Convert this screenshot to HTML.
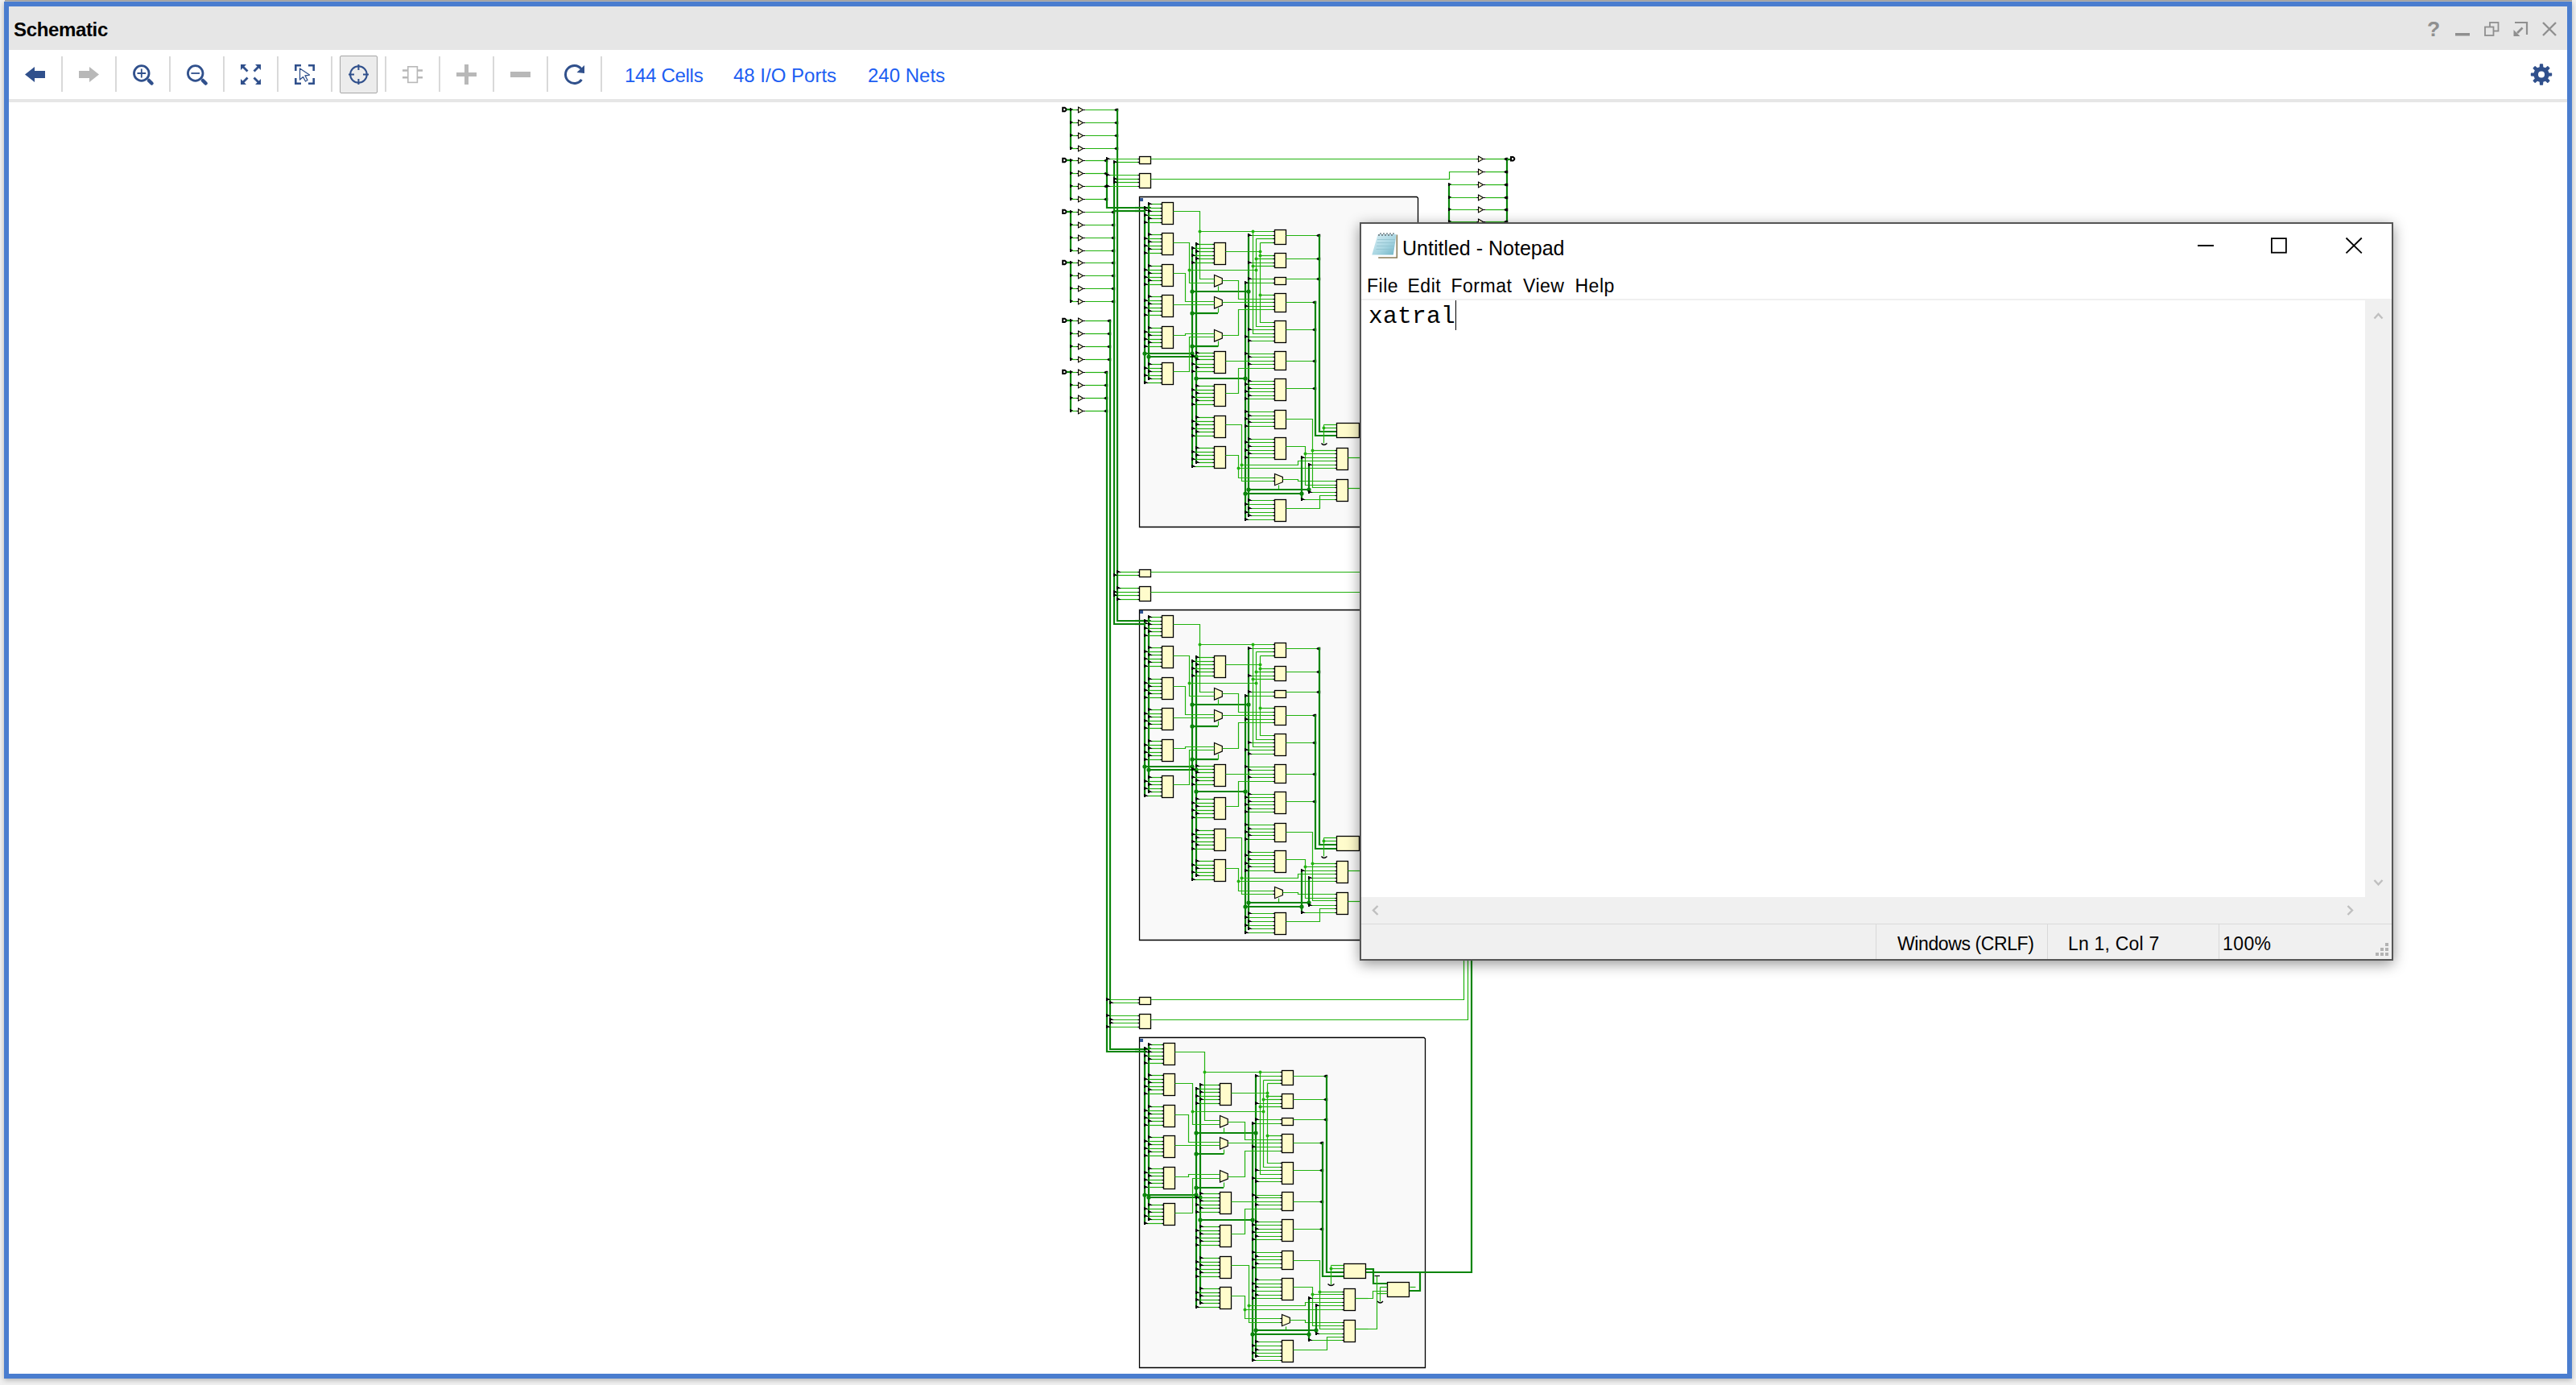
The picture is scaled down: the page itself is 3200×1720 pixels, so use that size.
<!DOCTYPE html><html><head><meta charset="utf-8"><style>

*{margin:0;padding:0;box-sizing:border-box}
html,body{width:3200px;height:1720px;overflow:hidden;background:#f0f0f0;font-family:"Liberation Sans",sans-serif}
.abs{position:absolute}
#win{position:absolute;left:5px;top:2px;width:3190px;height:1710px;background:#fff;border:6px solid #4a7dcf;box-shadow:0 2px 6px rgba(0,0,0,0.25)}
#title{position:absolute;left:11px;top:8px;width:3178px;height:54px;background:#e6e6e6}
#tb{position:absolute;left:11px;top:62px;width:3178px;height:61px;background:#fff}
#tbline{position:absolute;left:11px;top:123px;width:3178px;height:4px;background:#e6e6e6}
.sep{position:absolute;top:70px;width:2px;height:44px;background:#d9d9d9}
.txt{position:absolute;white-space:nowrap;line-height:1}
#np{position:absolute;left:1689px;top:276px;width:1284px;height:917px;background:#fff;border:2px solid #555;box-shadow:0 4px 16px rgba(0,0,0,0.42)}

</style></head><body>
<div class="abs" style="left:6px;top:0;width:3189px;height:1px;background:#a5a5a5"></div><div class="abs" style="left:6px;top:1px;width:3189px;height:1px;background:#c2c0bb"></div>
<div id="win"></div>
<div id="title"></div>
<div id="tb"></div>
<div id="tbline"></div>
<div class="txt" style="left:17px;top:24.5px;font-size:24px;font-weight:bold;letter-spacing:-0.35px;color:#000">Schematic</div>
<div class="sep" style="left:76px"></div>
<div class="sep" style="left:143px"></div>
<div class="sep" style="left:210px"></div>
<div class="sep" style="left:277px"></div>
<div class="sep" style="left:344px"></div>
<div class="sep" style="left:411px"></div>
<div class="sep" style="left:478px"></div>
<div class="sep" style="left:545px"></div>
<div class="sep" style="left:612px"></div>
<div class="sep" style="left:679px"></div>
<div class="sep" style="left:746px"></div>
<div class="abs" style="left:422px;top:69px;width:47px;height:47px;background:#ececec;border:1px solid #a6a6a6;border-radius:2px"></div>
<svg class="abs" style="left:0;top:0" width="3200" height="130" viewBox="0 0 3200 130">
<path d="M31,92.5 L43,83 L43,88 L56,88 L56,97 L43,97 L43,102 Z" fill="#30508c"/>
<path d="M123,92.5 L111,83 L111,88 L98,88 L98,97 L111,97 L111,102 Z" fill="#b8b8b8"/>
<circle cx="175.8" cy="91" r="9.3" fill="none" stroke="#30508c" stroke-width="2.8"/>
<line x1="185" y1="100" x2="188.5" y2="103.5" stroke="#30508c" stroke-width="4.5" stroke-linecap="round"/>
<path d="M170.5,91 H181.2 M175.8,85.5 V96.5" stroke="#30508c" stroke-width="1.8"/>
<circle cx="242.7" cy="91" r="9.3" fill="none" stroke="#30508c" stroke-width="2.8"/>
<line x1="252" y1="100" x2="255.5" y2="103.5" stroke="#30508c" stroke-width="4.5" stroke-linecap="round"/>
<path d="M237.4,91 H248" stroke="#30508c" stroke-width="1.8"/>
<g fill="#30508c" stroke="#30508c">
<path d="M299,80 h7 l-2.5,2.5 l5,5 l-2,2 l-5,-5 l-2.5,2.5 z" stroke="none"/>
<path d="M324,80 h-7 l2.5,2.5 l-5,5 l2,2 l5,-5 l2.5,2.5 z" stroke="none"/>
<path d="M299,105 h7 l-2.5,-2.5 l5,-5 l-2,-2 l-5,5 l-2.5,-2.5 z" stroke="none"/>
<path d="M324,105 h-7 l2.5,-2.5 l-5,-5 l2,-2 l5,5 l2.5,-2.5 z" stroke="none"/>
</g>
<path d="M367.3,88 V81.3 H374 M383,81.3 H389.7 V88 M389.7,97 V103.7 H383 M374,103.7 H367.3 V97" fill="none" stroke="#30508c" stroke-width="2.6"/>
<path d="M372.5,85 L384.5,93 L379,94 L382,99.5 L379.5,101 L376.5,95.5 L372.5,99 Z" fill="#fff" stroke="#30508c" stroke-width="1.3" stroke-linejoin="round"/>
<circle cx="445.4" cy="92.5" r="10.3" fill="none" stroke="#30508c" stroke-width="2"/>
<path d="M445.4,80 V87 M445.4,98 V105 M433,92.5 H440 M451,92.5 H458" stroke="#30508c" stroke-width="2"/>
<rect x="506.8" y="82.8" width="11.6" height="19.6" fill="none" stroke="#b8b8b8" stroke-width="1.6"/>
<path d="M500,87.5 H506 M500,96.2 H506 M519,87.5 H525 M519,96.2 H525" stroke="#b8b8b8" stroke-width="2.6"/>
<path d="M567,92.5 H592 M579.5,80 V105" stroke="#b8b8b8" stroke-width="5"/>
<path d="M634,92.5 H659" stroke="#b8b8b8" stroke-width="7"/>
<path d="M721.9,85.4 A11,11 0 1 0 722.5,98.8" fill="none" stroke="#30508c" stroke-width="3"/>
<path d="M726,81 L726,91 L716.5,90 Z" fill="#30508c"/>
<text x="3023" y="45" font-family="Liberation Sans" font-weight="bold" font-size="26.5" fill="#8f8f8f" text-anchor="middle">?</text>
<rect x="3050" y="41" width="18" height="3.5" fill="#8f8f8f"/>
<rect x="3093" y="28" width="10.5" height="10.5" fill="none" stroke="#8f8f8f" stroke-width="1.8"/>
<rect x="3087" y="33.5" width="10.5" height="10.5" fill="#e6e6e6" stroke="#8f8f8f" stroke-width="1.8"/>
<path d="M3124,28 H3139 V43" fill="none" stroke="#8f8f8f" stroke-width="2.2"/>
<path d="M3133.5,34.5 L3127,41" stroke="#8f8f8f" stroke-width="2.6"/><path d="M3122.5,37 V45 H3130.5 Z" fill="#8f8f8f"/>
<path d="M3159,28 L3175,44 M3175,28 L3159,44" stroke="#8f8f8f" stroke-width="2.4"/>
<path d="M3165.87,90.95 L3169.42,91.13 L3169.42,93.87 L3165.87,94.05 L3164.36,97.68 L3166.76,100.32 L3164.82,102.26 L3162.18,99.86 L3158.55,101.37 L3158.37,104.92 L3155.63,104.92 L3155.45,101.37 L3151.82,99.86 L3149.18,102.26 L3147.24,100.32 L3149.64,97.68 L3148.13,94.05 L3144.58,93.87 L3144.58,91.13 L3148.13,90.95 L3149.64,87.32 L3147.24,84.68 L3149.18,82.74 L3151.82,85.14 L3155.45,83.63 L3155.63,80.08 L3158.37,80.08 L3158.55,83.63 L3162.18,85.14 L3164.82,82.74 L3166.76,84.68 L3164.36,87.32 Z" fill="#30508c" stroke="#30508c" stroke-width="1.5" stroke-linejoin="round"/><circle cx="3157" cy="92.5" r="4" fill="#fff"/>
</svg>
<div class="txt" style="left:776px;top:82px;font-size:24px;letter-spacing:-0.3px;color:#1c5ef2">144 Cells</div>
<div class="txt" style="left:911px;top:82px;font-size:24px;color:#1c5ef2">48 I/O Ports</div>
<div class="txt" style="left:1078px;top:82px;font-size:24px;color:#1c5ef2">240 Nets</div>
<svg class="abs" style="left:0;top:0" width="3200" height="1720" viewBox="0 0 3200 1720">
<path d="M1320.2,133.8 h2.6 l1.6,1.4 v1.6 l-1.6,1.4 h-2.6 z" fill="#fff" stroke="#000" stroke-width="2"/>
<path d="M1325,136 L1330,136" fill="none" stroke="#0b850b" stroke-width="2.2"/>
<path d="M1330,136 L1330,184" fill="none" stroke="#0b850b" stroke-width="2.2"/>
<path d="M1329.0,133.9 L1330.2,133.9 L1331.0,134.9 L1332.2,134.9 L1332.9,135.9 L1334.2,135.9 L1334.2,137.1 L1331.0,137.1 L1331.0,138.1 L1329.0,138.1 Z" fill="#000"/>
<path d="M1331.5,136.5 L1338.5,136.5" fill="none" stroke="#22b30f" stroke-width="1.2"/>
<path d="M1339.5,133.1 L1345.5,136.5 L1339.5,139.9 Z" fill="#fffccc" stroke="#000" stroke-width="1.1"/>
<path d="M1337.5,136.5 H1339.5 M1345.5,136.5 H1348.5" stroke="#000" stroke-width="1.1"/>
<path d="M1348.5,136.5 L1387.5,136.5" fill="none" stroke="#22b30f" stroke-width="1.2"/>
<path d="M1384.5,135.9 L1386.8,134.7 L1389.2,134.7 L1389.2,138.3 L1386.8,138.3 L1384.5,137.1 Z" fill="#000"/>
<path d="M1329.0,149.9 L1330.2,149.9 L1331.0,150.9 L1332.2,150.9 L1332.9,151.9 L1334.2,151.9 L1334.2,153.1 L1331.0,153.1 L1331.0,154.1 L1329.0,154.1 Z" fill="#000"/>
<path d="M1331.5,152.5 L1338.5,152.5" fill="none" stroke="#22b30f" stroke-width="1.2"/>
<path d="M1339.5,149.1 L1345.5,152.5 L1339.5,155.9 Z" fill="#fffccc" stroke="#000" stroke-width="1.1"/>
<path d="M1337.5,152.5 H1339.5 M1345.5,152.5 H1348.5" stroke="#000" stroke-width="1.1"/>
<path d="M1348.5,152.5 L1387.5,152.5" fill="none" stroke="#22b30f" stroke-width="1.2"/>
<path d="M1384.5,151.9 L1386.8,150.7 L1389.2,150.7 L1389.2,154.3 L1386.8,154.3 L1384.5,153.1 Z" fill="#000"/>
<path d="M1329.0,165.9 L1330.2,165.9 L1331.0,166.9 L1332.2,166.9 L1332.9,167.9 L1334.2,167.9 L1334.2,169.1 L1331.0,169.1 L1331.0,170.1 L1329.0,170.1 Z" fill="#000"/>
<path d="M1331.5,168.5 L1338.5,168.5" fill="none" stroke="#22b30f" stroke-width="1.2"/>
<path d="M1339.5,165.1 L1345.5,168.5 L1339.5,171.9 Z" fill="#fffccc" stroke="#000" stroke-width="1.1"/>
<path d="M1337.5,168.5 H1339.5 M1345.5,168.5 H1348.5" stroke="#000" stroke-width="1.1"/>
<path d="M1348.5,168.5 L1387.5,168.5" fill="none" stroke="#22b30f" stroke-width="1.2"/>
<path d="M1384.5,167.9 L1386.8,166.7 L1389.2,166.7 L1389.2,170.3 L1386.8,170.3 L1384.5,169.1 Z" fill="#000"/>
<path d="M1329.0,181.9 L1330.2,181.9 L1331.0,182.9 L1332.2,182.9 L1332.9,183.9 L1334.2,183.9 L1334.2,185.1 L1331.0,185.1 L1331.0,186.1 L1329.0,186.1 Z" fill="#000"/>
<path d="M1331.5,184.5 L1338.5,184.5" fill="none" stroke="#22b30f" stroke-width="1.2"/>
<path d="M1339.5,181.1 L1345.5,184.5 L1339.5,187.9 Z" fill="#fffccc" stroke="#000" stroke-width="1.1"/>
<path d="M1337.5,184.5 H1339.5 M1345.5,184.5 H1348.5" stroke="#000" stroke-width="1.1"/>
<path d="M1348.5,184.5 L1387.5,184.5" fill="none" stroke="#22b30f" stroke-width="1.2"/>
<path d="M1384.5,183.9 L1386.8,182.7 L1389.2,182.7 L1389.2,186.3 L1386.8,186.3 L1384.5,185.1 Z" fill="#000"/>
<path d="M1320.2,196.8 h2.6 l1.6,1.4 v1.6 l-1.6,1.4 h-2.6 z" fill="#fff" stroke="#000" stroke-width="2"/>
<path d="M1325,199 L1330,199" fill="none" stroke="#0b850b" stroke-width="2.2"/>
<path d="M1330,199 L1330,247" fill="none" stroke="#0b850b" stroke-width="2.2"/>
<path d="M1329.0,196.9 L1330.2,196.9 L1331.0,197.9 L1332.2,197.9 L1332.9,198.9 L1334.2,198.9 L1334.2,200.1 L1331.0,200.1 L1331.0,201.1 L1329.0,201.1 Z" fill="#000"/>
<path d="M1331.5,199.5 L1338.5,199.5" fill="none" stroke="#22b30f" stroke-width="1.2"/>
<path d="M1339.5,196.1 L1345.5,199.5 L1339.5,202.9 Z" fill="#fffccc" stroke="#000" stroke-width="1.1"/>
<path d="M1337.5,199.5 H1339.5 M1345.5,199.5 H1348.5" stroke="#000" stroke-width="1.1"/>
<path d="M1348.5,199.5 L1374.5,199.5" fill="none" stroke="#22b30f" stroke-width="1.2"/>
<path d="M1371.5,198.9 L1373.8,197.7 L1376.2,197.7 L1376.2,201.3 L1373.8,201.3 L1371.5,200.1 Z" fill="#000"/>
<path d="M1329.0,212.9 L1330.2,212.9 L1331.0,213.9 L1332.2,213.9 L1332.9,214.9 L1334.2,214.9 L1334.2,216.1 L1331.0,216.1 L1331.0,217.1 L1329.0,217.1 Z" fill="#000"/>
<path d="M1331.5,215.5 L1338.5,215.5" fill="none" stroke="#22b30f" stroke-width="1.2"/>
<path d="M1339.5,212.1 L1345.5,215.5 L1339.5,218.9 Z" fill="#fffccc" stroke="#000" stroke-width="1.1"/>
<path d="M1337.5,215.5 H1339.5 M1345.5,215.5 H1348.5" stroke="#000" stroke-width="1.1"/>
<path d="M1348.5,215.5 L1374.5,215.5" fill="none" stroke="#22b30f" stroke-width="1.2"/>
<path d="M1371.5,214.9 L1373.8,213.7 L1376.2,213.7 L1376.2,217.3 L1373.8,217.3 L1371.5,216.1 Z" fill="#000"/>
<path d="M1329.0,228.9 L1330.2,228.9 L1331.0,229.9 L1332.2,229.9 L1332.9,230.9 L1334.2,230.9 L1334.2,232.1 L1331.0,232.1 L1331.0,233.1 L1329.0,233.1 Z" fill="#000"/>
<path d="M1331.5,231.5 L1338.5,231.5" fill="none" stroke="#22b30f" stroke-width="1.2"/>
<path d="M1339.5,228.1 L1345.5,231.5 L1339.5,234.9 Z" fill="#fffccc" stroke="#000" stroke-width="1.1"/>
<path d="M1337.5,231.5 H1339.5 M1345.5,231.5 H1348.5" stroke="#000" stroke-width="1.1"/>
<path d="M1348.5,231.5 L1374.5,231.5" fill="none" stroke="#22b30f" stroke-width="1.2"/>
<path d="M1371.5,230.9 L1373.8,229.7 L1376.2,229.7 L1376.2,233.3 L1373.8,233.3 L1371.5,232.1 Z" fill="#000"/>
<path d="M1329.0,244.9 L1330.2,244.9 L1331.0,245.9 L1332.2,245.9 L1332.9,246.9 L1334.2,246.9 L1334.2,248.1 L1331.0,248.1 L1331.0,249.1 L1329.0,249.1 Z" fill="#000"/>
<path d="M1331.5,247.5 L1338.5,247.5" fill="none" stroke="#22b30f" stroke-width="1.2"/>
<path d="M1339.5,244.1 L1345.5,247.5 L1339.5,250.9 Z" fill="#fffccc" stroke="#000" stroke-width="1.1"/>
<path d="M1337.5,247.5 H1339.5 M1345.5,247.5 H1348.5" stroke="#000" stroke-width="1.1"/>
<path d="M1348.5,247.5 L1374.5,247.5" fill="none" stroke="#22b30f" stroke-width="1.2"/>
<path d="M1371.5,246.9 L1373.8,245.7 L1376.2,245.7 L1376.2,249.3 L1373.8,249.3 L1371.5,248.1 Z" fill="#000"/>
<path d="M1320.2,260.7 h2.6 l1.6,1.4 v1.6 l-1.6,1.4 h-2.6 z" fill="#fff" stroke="#000" stroke-width="2"/>
<path d="M1325,263 L1330,263" fill="none" stroke="#0b850b" stroke-width="2.2"/>
<path d="M1330,263 L1330,311" fill="none" stroke="#0b850b" stroke-width="2.2"/>
<path d="M1329.0,260.9 L1330.2,260.9 L1331.0,261.9 L1332.2,261.9 L1332.9,262.9 L1334.2,262.9 L1334.2,264.1 L1331.0,264.1 L1331.0,265.1 L1329.0,265.1 Z" fill="#000"/>
<path d="M1331.5,263.5 L1338.5,263.5" fill="none" stroke="#22b30f" stroke-width="1.2"/>
<path d="M1339.5,260.1 L1345.5,263.5 L1339.5,266.9 Z" fill="#fffccc" stroke="#000" stroke-width="1.1"/>
<path d="M1337.5,263.5 H1339.5 M1345.5,263.5 H1348.5" stroke="#000" stroke-width="1.1"/>
<path d="M1348.5,263.5 L1384.5,263.5" fill="none" stroke="#22b30f" stroke-width="1.2"/>
<path d="M1380.5,262.9 L1382.8,261.7 L1385.2,261.7 L1385.2,265.3 L1382.8,265.3 L1380.5,264.1 Z" fill="#000"/>
<path d="M1329.0,276.9 L1330.2,276.9 L1331.0,277.9 L1332.2,277.9 L1332.9,278.9 L1334.2,278.9 L1334.2,280.1 L1331.0,280.1 L1331.0,281.1 L1329.0,281.1 Z" fill="#000"/>
<path d="M1331.5,279.5 L1338.5,279.5" fill="none" stroke="#22b30f" stroke-width="1.2"/>
<path d="M1339.5,276.1 L1345.5,279.5 L1339.5,282.9 Z" fill="#fffccc" stroke="#000" stroke-width="1.1"/>
<path d="M1337.5,279.5 H1339.5 M1345.5,279.5 H1348.5" stroke="#000" stroke-width="1.1"/>
<path d="M1348.5,279.5 L1384.5,279.5" fill="none" stroke="#22b30f" stroke-width="1.2"/>
<path d="M1380.5,278.9 L1382.8,277.7 L1385.2,277.7 L1385.2,281.3 L1382.8,281.3 L1380.5,280.1 Z" fill="#000"/>
<path d="M1329.0,292.9 L1330.2,292.9 L1331.0,293.9 L1332.2,293.9 L1332.9,294.9 L1334.2,294.9 L1334.2,296.1 L1331.0,296.1 L1331.0,297.1 L1329.0,297.1 Z" fill="#000"/>
<path d="M1331.5,295.5 L1338.5,295.5" fill="none" stroke="#22b30f" stroke-width="1.2"/>
<path d="M1339.5,292.1 L1345.5,295.5 L1339.5,298.9 Z" fill="#fffccc" stroke="#000" stroke-width="1.1"/>
<path d="M1337.5,295.5 H1339.5 M1345.5,295.5 H1348.5" stroke="#000" stroke-width="1.1"/>
<path d="M1348.5,295.5 L1384.5,295.5" fill="none" stroke="#22b30f" stroke-width="1.2"/>
<path d="M1380.5,294.9 L1382.8,293.7 L1385.2,293.7 L1385.2,297.3 L1382.8,297.3 L1380.5,296.1 Z" fill="#000"/>
<path d="M1329.0,308.9 L1330.2,308.9 L1331.0,309.9 L1332.2,309.9 L1332.9,310.9 L1334.2,310.9 L1334.2,312.1 L1331.0,312.1 L1331.0,313.1 L1329.0,313.1 Z" fill="#000"/>
<path d="M1331.5,311.5 L1338.5,311.5" fill="none" stroke="#22b30f" stroke-width="1.2"/>
<path d="M1339.5,308.1 L1345.5,311.5 L1339.5,314.9 Z" fill="#fffccc" stroke="#000" stroke-width="1.1"/>
<path d="M1337.5,311.5 H1339.5 M1345.5,311.5 H1348.5" stroke="#000" stroke-width="1.1"/>
<path d="M1348.5,311.5 L1384.5,311.5" fill="none" stroke="#22b30f" stroke-width="1.2"/>
<path d="M1380.5,310.9 L1382.8,309.7 L1385.2,309.7 L1385.2,313.3 L1382.8,313.3 L1380.5,312.1 Z" fill="#000"/>
<path d="M1320.2,323.8 h2.6 l1.6,1.4 v1.6 l-1.6,1.4 h-2.6 z" fill="#fff" stroke="#000" stroke-width="2"/>
<path d="M1325,326 L1330,326" fill="none" stroke="#0b850b" stroke-width="2.2"/>
<path d="M1330,326 L1330,374" fill="none" stroke="#0b850b" stroke-width="2.2"/>
<path d="M1329.0,323.9 L1330.2,323.9 L1331.0,324.9 L1332.2,324.9 L1332.9,325.9 L1334.2,325.9 L1334.2,327.1 L1331.0,327.1 L1331.0,328.1 L1329.0,328.1 Z" fill="#000"/>
<path d="M1331.5,326.5 L1338.5,326.5" fill="none" stroke="#22b30f" stroke-width="1.2"/>
<path d="M1339.5,323.1 L1345.5,326.5 L1339.5,329.9 Z" fill="#fffccc" stroke="#000" stroke-width="1.1"/>
<path d="M1337.5,326.5 H1339.5 M1345.5,326.5 H1348.5" stroke="#000" stroke-width="1.1"/>
<path d="M1348.5,326.5 L1384.5,326.5" fill="none" stroke="#22b30f" stroke-width="1.2"/>
<path d="M1380.5,325.9 L1382.8,324.7 L1385.2,324.7 L1385.2,328.3 L1382.8,328.3 L1380.5,327.1 Z" fill="#000"/>
<path d="M1329.0,339.9 L1330.2,339.9 L1331.0,340.9 L1332.2,340.9 L1332.9,341.9 L1334.2,341.9 L1334.2,343.1 L1331.0,343.1 L1331.0,344.1 L1329.0,344.1 Z" fill="#000"/>
<path d="M1331.5,342.5 L1338.5,342.5" fill="none" stroke="#22b30f" stroke-width="1.2"/>
<path d="M1339.5,339.1 L1345.5,342.5 L1339.5,345.9 Z" fill="#fffccc" stroke="#000" stroke-width="1.1"/>
<path d="M1337.5,342.5 H1339.5 M1345.5,342.5 H1348.5" stroke="#000" stroke-width="1.1"/>
<path d="M1348.5,342.5 L1384.5,342.5" fill="none" stroke="#22b30f" stroke-width="1.2"/>
<path d="M1380.5,341.9 L1382.8,340.7 L1385.2,340.7 L1385.2,344.3 L1382.8,344.3 L1380.5,343.1 Z" fill="#000"/>
<path d="M1329.0,355.9 L1330.2,355.9 L1331.0,356.9 L1332.2,356.9 L1332.9,357.9 L1334.2,357.9 L1334.2,359.1 L1331.0,359.1 L1331.0,360.1 L1329.0,360.1 Z" fill="#000"/>
<path d="M1331.5,358.5 L1338.5,358.5" fill="none" stroke="#22b30f" stroke-width="1.2"/>
<path d="M1339.5,355.1 L1345.5,358.5 L1339.5,361.9 Z" fill="#fffccc" stroke="#000" stroke-width="1.1"/>
<path d="M1337.5,358.5 H1339.5 M1345.5,358.5 H1348.5" stroke="#000" stroke-width="1.1"/>
<path d="M1348.5,358.5 L1384.5,358.5" fill="none" stroke="#22b30f" stroke-width="1.2"/>
<path d="M1380.5,357.9 L1382.8,356.7 L1385.2,356.7 L1385.2,360.3 L1382.8,360.3 L1380.5,359.1 Z" fill="#000"/>
<path d="M1329.0,371.9 L1330.2,371.9 L1331.0,372.9 L1332.2,372.9 L1332.9,373.9 L1334.2,373.9 L1334.2,375.1 L1331.0,375.1 L1331.0,376.1 L1329.0,376.1 Z" fill="#000"/>
<path d="M1331.5,374.5 L1338.5,374.5" fill="none" stroke="#22b30f" stroke-width="1.2"/>
<path d="M1339.5,371.1 L1345.5,374.5 L1339.5,377.9 Z" fill="#fffccc" stroke="#000" stroke-width="1.1"/>
<path d="M1337.5,374.5 H1339.5 M1345.5,374.5 H1348.5" stroke="#000" stroke-width="1.1"/>
<path d="M1348.5,374.5 L1384.5,374.5" fill="none" stroke="#22b30f" stroke-width="1.2"/>
<path d="M1380.5,373.9 L1382.8,372.7 L1385.2,372.7 L1385.2,376.3 L1382.8,376.3 L1380.5,375.1 Z" fill="#000"/>
<path d="M1320.2,395.7 h2.6 l1.6,1.4 v1.6 l-1.6,1.4 h-2.6 z" fill="#fff" stroke="#000" stroke-width="2"/>
<path d="M1325,398 L1330,398" fill="none" stroke="#0b850b" stroke-width="2.2"/>
<path d="M1330,398 L1330,446" fill="none" stroke="#0b850b" stroke-width="2.2"/>
<path d="M1329.0,395.9 L1330.2,395.9 L1331.0,396.9 L1332.2,396.9 L1332.9,397.9 L1334.2,397.9 L1334.2,399.1 L1331.0,399.1 L1331.0,400.1 L1329.0,400.1 Z" fill="#000"/>
<path d="M1331.5,398.5 L1338.5,398.5" fill="none" stroke="#22b30f" stroke-width="1.2"/>
<path d="M1339.5,395.1 L1345.5,398.5 L1339.5,401.9 Z" fill="#fffccc" stroke="#000" stroke-width="1.1"/>
<path d="M1337.5,398.5 H1339.5 M1345.5,398.5 H1348.5" stroke="#000" stroke-width="1.1"/>
<path d="M1348.5,398.5 L1378.5,398.5" fill="none" stroke="#22b30f" stroke-width="1.2"/>
<path d="M1375.5,397.9 L1377.8,396.7 L1380.2,396.7 L1380.2,400.3 L1377.8,400.3 L1375.5,399.1 Z" fill="#000"/>
<path d="M1329.0,411.9 L1330.2,411.9 L1331.0,412.9 L1332.2,412.9 L1332.9,413.9 L1334.2,413.9 L1334.2,415.1 L1331.0,415.1 L1331.0,416.1 L1329.0,416.1 Z" fill="#000"/>
<path d="M1331.5,414.5 L1338.5,414.5" fill="none" stroke="#22b30f" stroke-width="1.2"/>
<path d="M1339.5,411.1 L1345.5,414.5 L1339.5,417.9 Z" fill="#fffccc" stroke="#000" stroke-width="1.1"/>
<path d="M1337.5,414.5 H1339.5 M1345.5,414.5 H1348.5" stroke="#000" stroke-width="1.1"/>
<path d="M1348.5,414.5 L1378.5,414.5" fill="none" stroke="#22b30f" stroke-width="1.2"/>
<path d="M1375.5,413.9 L1377.8,412.7 L1380.2,412.7 L1380.2,416.3 L1377.8,416.3 L1375.5,415.1 Z" fill="#000"/>
<path d="M1329.0,427.9 L1330.2,427.9 L1331.0,428.9 L1332.2,428.9 L1332.9,429.9 L1334.2,429.9 L1334.2,431.1 L1331.0,431.1 L1331.0,432.1 L1329.0,432.1 Z" fill="#000"/>
<path d="M1331.5,430.5 L1338.5,430.5" fill="none" stroke="#22b30f" stroke-width="1.2"/>
<path d="M1339.5,427.1 L1345.5,430.5 L1339.5,433.9 Z" fill="#fffccc" stroke="#000" stroke-width="1.1"/>
<path d="M1337.5,430.5 H1339.5 M1345.5,430.5 H1348.5" stroke="#000" stroke-width="1.1"/>
<path d="M1348.5,430.5 L1378.5,430.5" fill="none" stroke="#22b30f" stroke-width="1.2"/>
<path d="M1375.5,429.9 L1377.8,428.7 L1380.2,428.7 L1380.2,432.3 L1377.8,432.3 L1375.5,431.1 Z" fill="#000"/>
<path d="M1329.0,443.9 L1330.2,443.9 L1331.0,444.9 L1332.2,444.9 L1332.9,445.9 L1334.2,445.9 L1334.2,447.1 L1331.0,447.1 L1331.0,448.1 L1329.0,448.1 Z" fill="#000"/>
<path d="M1331.5,446.5 L1338.5,446.5" fill="none" stroke="#22b30f" stroke-width="1.2"/>
<path d="M1339.5,443.1 L1345.5,446.5 L1339.5,449.9 Z" fill="#fffccc" stroke="#000" stroke-width="1.1"/>
<path d="M1337.5,446.5 H1339.5 M1345.5,446.5 H1348.5" stroke="#000" stroke-width="1.1"/>
<path d="M1348.5,446.5 L1378.5,446.5" fill="none" stroke="#22b30f" stroke-width="1.2"/>
<path d="M1375.5,445.9 L1377.8,444.7 L1380.2,444.7 L1380.2,448.3 L1377.8,448.3 L1375.5,447.1 Z" fill="#000"/>
<path d="M1320.2,459.7 h2.6 l1.6,1.4 v1.6 l-1.6,1.4 h-2.6 z" fill="#fff" stroke="#000" stroke-width="2"/>
<path d="M1325,462 L1330,462" fill="none" stroke="#0b850b" stroke-width="2.2"/>
<path d="M1330,462 L1330,510" fill="none" stroke="#0b850b" stroke-width="2.2"/>
<path d="M1329.0,459.9 L1330.2,459.9 L1331.0,460.9 L1332.2,460.9 L1332.9,461.9 L1334.2,461.9 L1334.2,463.1 L1331.0,463.1 L1331.0,464.1 L1329.0,464.1 Z" fill="#000"/>
<path d="M1331.5,462.5 L1338.5,462.5" fill="none" stroke="#22b30f" stroke-width="1.2"/>
<path d="M1339.5,459.1 L1345.5,462.5 L1339.5,465.9 Z" fill="#fffccc" stroke="#000" stroke-width="1.1"/>
<path d="M1337.5,462.5 H1339.5 M1345.5,462.5 H1348.5" stroke="#000" stroke-width="1.1"/>
<path d="M1348.5,462.5 L1374.5,462.5" fill="none" stroke="#22b30f" stroke-width="1.2"/>
<path d="M1371.5,461.9 L1373.8,460.7 L1376.2,460.7 L1376.2,464.3 L1373.8,464.3 L1371.5,463.1 Z" fill="#000"/>
<path d="M1329.0,475.9 L1330.2,475.9 L1331.0,476.9 L1332.2,476.9 L1332.9,477.9 L1334.2,477.9 L1334.2,479.1 L1331.0,479.1 L1331.0,480.1 L1329.0,480.1 Z" fill="#000"/>
<path d="M1331.5,478.5 L1338.5,478.5" fill="none" stroke="#22b30f" stroke-width="1.2"/>
<path d="M1339.5,475.1 L1345.5,478.5 L1339.5,481.9 Z" fill="#fffccc" stroke="#000" stroke-width="1.1"/>
<path d="M1337.5,478.5 H1339.5 M1345.5,478.5 H1348.5" stroke="#000" stroke-width="1.1"/>
<path d="M1348.5,478.5 L1374.5,478.5" fill="none" stroke="#22b30f" stroke-width="1.2"/>
<path d="M1371.5,477.9 L1373.8,476.7 L1376.2,476.7 L1376.2,480.3 L1373.8,480.3 L1371.5,479.1 Z" fill="#000"/>
<path d="M1329.0,491.9 L1330.2,491.9 L1331.0,492.9 L1332.2,492.9 L1332.9,493.9 L1334.2,493.9 L1334.2,495.1 L1331.0,495.1 L1331.0,496.1 L1329.0,496.1 Z" fill="#000"/>
<path d="M1331.5,494.5 L1338.5,494.5" fill="none" stroke="#22b30f" stroke-width="1.2"/>
<path d="M1339.5,491.1 L1345.5,494.5 L1339.5,497.9 Z" fill="#fffccc" stroke="#000" stroke-width="1.1"/>
<path d="M1337.5,494.5 H1339.5 M1345.5,494.5 H1348.5" stroke="#000" stroke-width="1.1"/>
<path d="M1348.5,494.5 L1374.5,494.5" fill="none" stroke="#22b30f" stroke-width="1.2"/>
<path d="M1371.5,493.9 L1373.8,492.7 L1376.2,492.7 L1376.2,496.3 L1373.8,496.3 L1371.5,495.1 Z" fill="#000"/>
<path d="M1329.0,507.9 L1330.2,507.9 L1331.0,508.9 L1332.2,508.9 L1332.9,509.9 L1334.2,509.9 L1334.2,511.1 L1331.0,511.1 L1331.0,512.1 L1329.0,512.1 Z" fill="#000"/>
<path d="M1331.5,510.5 L1338.5,510.5" fill="none" stroke="#22b30f" stroke-width="1.2"/>
<path d="M1339.5,507.1 L1345.5,510.5 L1339.5,513.9 Z" fill="#fffccc" stroke="#000" stroke-width="1.1"/>
<path d="M1337.5,510.5 H1339.5 M1345.5,510.5 H1348.5" stroke="#000" stroke-width="1.1"/>
<path d="M1348.5,510.5 L1374.5,510.5" fill="none" stroke="#22b30f" stroke-width="1.2"/>
<path d="M1371.5,509.9 L1373.8,508.7 L1376.2,508.7 L1376.2,512.3 L1373.8,512.3 L1371.5,511.1 Z" fill="#000"/>
<path d="M1388,136 L1388,771 L1416,771" fill="none" stroke="#0b850b" stroke-width="2.2"/>
<path d="M1384,200 L1384,775 L1416,775" fill="none" stroke="#0b850b" stroke-width="2.2"/>
<path d="M1375,197 L1375,258 L1416,258" fill="none" stroke="#0b850b" stroke-width="2.2"/>
<path d="M1384,262 L1416,262" fill="none" stroke="#0b850b" stroke-width="2.2"/>
<path d="M1375,462 L1375,1306 L1416,1306" fill="none" stroke="#0b850b" stroke-width="2.2"/>
<path d="M1379,398 L1379,1303 L1416,1303" fill="none" stroke="#0b850b" stroke-width="2.2"/>
<path d="M1374.5,197.5 L1415.5,197.5" fill="none" stroke="#22b30f" stroke-width="1.2"/>
<path d="M1413.5,197.5 H1415.5" stroke="#000" stroke-width="1.2"/>
<path d="M1374.0,194.9 L1375.2,194.9 L1376.0,195.9 L1377.2,195.9 L1377.9,196.9 L1379.2,196.9 L1379.2,198.1 L1376.0,198.1 L1376.0,199.1 L1374.0,199.1 Z" fill="#000"/>
<path d="M1384.5,201.5 L1415.5,201.5" fill="none" stroke="#22b30f" stroke-width="1.2"/>
<path d="M1413.5,201.5 H1415.5" stroke="#000" stroke-width="1.2"/>
<path d="M1383.0,198.9 L1384.2,198.9 L1385.0,199.9 L1386.2,199.9 L1386.9,200.9 L1388.2,200.9 L1388.2,202.1 L1385.0,202.1 L1385.0,203.1 L1383.0,203.1 Z" fill="#000"/>
<path d="M1374.5,217.5 L1415.5,217.5" fill="none" stroke="#22b30f" stroke-width="1.2"/>
<path d="M1413.5,217.5 H1415.5" stroke="#000" stroke-width="1.2"/>
<path d="M1374.0,214.9 L1375.2,214.9 L1376.0,215.9 L1377.2,215.9 L1377.9,216.9 L1379.2,216.9 L1379.2,218.1 L1376.0,218.1 L1376.0,219.1 L1374.0,219.1 Z" fill="#000"/>
<path d="M1384.5,222.5 L1415.5,222.5" fill="none" stroke="#22b30f" stroke-width="1.2"/>
<path d="M1413.5,222.5 H1415.5" stroke="#000" stroke-width="1.2"/>
<path d="M1383.0,219.9 L1384.2,219.9 L1385.0,220.9 L1386.2,220.9 L1386.9,221.9 L1388.2,221.9 L1388.2,223.1 L1385.0,223.1 L1385.0,224.1 L1383.0,224.1 Z" fill="#000"/>
<path d="M1384.5,226.5 L1415.5,226.5" fill="none" stroke="#22b30f" stroke-width="1.2"/>
<path d="M1413.5,226.5 H1415.5" stroke="#000" stroke-width="1.2"/>
<path d="M1383.0,223.9 L1384.2,223.9 L1385.0,224.9 L1386.2,224.9 L1386.9,225.9 L1388.2,225.9 L1388.2,227.1 L1385.0,227.1 L1385.0,228.1 L1383.0,228.1 Z" fill="#000"/>
<path d="M1374.5,231.5 L1415.5,231.5" fill="none" stroke="#22b30f" stroke-width="1.2"/>
<path d="M1413.5,231.5 H1415.5" stroke="#000" stroke-width="1.2"/>
<path d="M1374.0,228.9 L1375.2,228.9 L1376.0,229.9 L1377.2,229.9 L1377.9,230.9 L1379.2,230.9 L1379.2,232.1 L1376.0,232.1 L1376.0,233.1 L1374.0,233.1 Z" fill="#000"/>
<rect x="1415.5" y="194.5" width="14" height="9" fill="#fffccc" stroke="#000" stroke-width="1.3"/>
<rect x="1415.5" y="215.5" width="14" height="18" fill="#fffccc" stroke="#000" stroke-width="1.3"/>
<path d="M1429.5,197.5 L1836.5,197.5" fill="none" stroke="#22b30f" stroke-width="1.2"/>
<path d="M1429.5,222.5 L1800.5,222.5 L1800.5,213.5 L1836.5,213.5" fill="none" stroke="#22b30f" stroke-width="1.2"/>
<path d="M1387.5,710.5 L1415.5,710.5" fill="none" stroke="#22b30f" stroke-width="1.2"/>
<path d="M1413.5,710.5 H1415.5" stroke="#000" stroke-width="1.2"/>
<path d="M1387.0,707.9 L1388.2,707.9 L1389.0,708.9 L1390.2,708.9 L1390.9,709.9 L1392.2,709.9 L1392.2,711.1 L1389.0,711.1 L1389.0,712.1 L1387.0,712.1 Z" fill="#000"/>
<path d="M1384.5,714.5 L1415.5,714.5" fill="none" stroke="#22b30f" stroke-width="1.2"/>
<path d="M1413.5,714.5 H1415.5" stroke="#000" stroke-width="1.2"/>
<path d="M1383.0,711.9 L1384.2,711.9 L1385.0,712.9 L1386.2,712.9 L1386.9,713.9 L1388.2,713.9 L1388.2,715.1 L1385.0,715.1 L1385.0,716.1 L1383.0,716.1 Z" fill="#000"/>
<path d="M1387.5,730.5 L1415.5,730.5" fill="none" stroke="#22b30f" stroke-width="1.2"/>
<path d="M1413.5,730.5 H1415.5" stroke="#000" stroke-width="1.2"/>
<path d="M1387.0,727.9 L1388.2,727.9 L1389.0,728.9 L1390.2,728.9 L1390.9,729.9 L1392.2,729.9 L1392.2,731.1 L1389.0,731.1 L1389.0,732.1 L1387.0,732.1 Z" fill="#000"/>
<path d="M1384.5,735.5 L1415.5,735.5" fill="none" stroke="#22b30f" stroke-width="1.2"/>
<path d="M1413.5,735.5 H1415.5" stroke="#000" stroke-width="1.2"/>
<path d="M1383.0,732.9 L1384.2,732.9 L1385.0,733.9 L1386.2,733.9 L1386.9,734.9 L1388.2,734.9 L1388.2,736.1 L1385.0,736.1 L1385.0,737.1 L1383.0,737.1 Z" fill="#000"/>
<path d="M1384.5,739.5 L1415.5,739.5" fill="none" stroke="#22b30f" stroke-width="1.2"/>
<path d="M1413.5,739.5 H1415.5" stroke="#000" stroke-width="1.2"/>
<path d="M1383.0,736.9 L1384.2,736.9 L1385.0,737.9 L1386.2,737.9 L1386.9,738.9 L1388.2,738.9 L1388.2,740.1 L1385.0,740.1 L1385.0,741.1 L1383.0,741.1 Z" fill="#000"/>
<path d="M1387.5,744.5 L1415.5,744.5" fill="none" stroke="#22b30f" stroke-width="1.2"/>
<path d="M1413.5,744.5 H1415.5" stroke="#000" stroke-width="1.2"/>
<path d="M1387.0,741.9 L1388.2,741.9 L1389.0,742.9 L1390.2,742.9 L1390.9,743.9 L1392.2,743.9 L1392.2,745.1 L1389.0,745.1 L1389.0,746.1 L1387.0,746.1 Z" fill="#000"/>
<rect x="1415.5" y="707.5" width="14" height="9" fill="#fffccc" stroke="#000" stroke-width="1.3"/>
<rect x="1415.5" y="728.5" width="14" height="18" fill="#fffccc" stroke="#000" stroke-width="1.3"/>
<path d="M1429.5,710.5 L1700.5,710.5" fill="none" stroke="#22b30f" stroke-width="1.2"/>
<path d="M1429.5,735.5 L1700.5,735.5" fill="none" stroke="#22b30f" stroke-width="1.2"/>
<path d="M1374.5,1241.5 L1415.5,1241.5" fill="none" stroke="#22b30f" stroke-width="1.2"/>
<path d="M1413.5,1241.5 H1415.5" stroke="#000" stroke-width="1.2"/>
<path d="M1374.0,1238.9 L1375.2,1238.9 L1376.0,1239.9 L1377.2,1239.9 L1377.9,1240.9 L1379.2,1240.9 L1379.2,1242.1 L1376.0,1242.1 L1376.0,1243.1 L1374.0,1243.1 Z" fill="#000"/>
<path d="M1378.5,1245.5 L1415.5,1245.5" fill="none" stroke="#22b30f" stroke-width="1.2"/>
<path d="M1413.5,1245.5 H1415.5" stroke="#000" stroke-width="1.2"/>
<path d="M1378.0,1242.9 L1379.2,1242.9 L1380.0,1243.9 L1381.2,1243.9 L1381.9,1244.9 L1383.2,1244.9 L1383.2,1246.1 L1380.0,1246.1 L1380.0,1247.1 L1378.0,1247.1 Z" fill="#000"/>
<path d="M1374.5,1261.5 L1415.5,1261.5" fill="none" stroke="#22b30f" stroke-width="1.2"/>
<path d="M1413.5,1261.5 H1415.5" stroke="#000" stroke-width="1.2"/>
<path d="M1374.0,1258.9 L1375.2,1258.9 L1376.0,1259.9 L1377.2,1259.9 L1377.9,1260.9 L1379.2,1260.9 L1379.2,1262.1 L1376.0,1262.1 L1376.0,1263.1 L1374.0,1263.1 Z" fill="#000"/>
<path d="M1378.5,1266.5 L1415.5,1266.5" fill="none" stroke="#22b30f" stroke-width="1.2"/>
<path d="M1413.5,1266.5 H1415.5" stroke="#000" stroke-width="1.2"/>
<path d="M1378.0,1263.9 L1379.2,1263.9 L1380.0,1264.9 L1381.2,1264.9 L1381.9,1265.9 L1383.2,1265.9 L1383.2,1267.1 L1380.0,1267.1 L1380.0,1268.1 L1378.0,1268.1 Z" fill="#000"/>
<path d="M1378.5,1270.5 L1415.5,1270.5" fill="none" stroke="#22b30f" stroke-width="1.2"/>
<path d="M1413.5,1270.5 H1415.5" stroke="#000" stroke-width="1.2"/>
<path d="M1378.0,1267.9 L1379.2,1267.9 L1380.0,1268.9 L1381.2,1268.9 L1381.9,1269.9 L1383.2,1269.9 L1383.2,1271.1 L1380.0,1271.1 L1380.0,1272.1 L1378.0,1272.1 Z" fill="#000"/>
<path d="M1374.5,1275.5 L1415.5,1275.5" fill="none" stroke="#22b30f" stroke-width="1.2"/>
<path d="M1413.5,1275.5 H1415.5" stroke="#000" stroke-width="1.2"/>
<path d="M1374.0,1272.9 L1375.2,1272.9 L1376.0,1273.9 L1377.2,1273.9 L1377.9,1274.9 L1379.2,1274.9 L1379.2,1276.1 L1376.0,1276.1 L1376.0,1277.1 L1374.0,1277.1 Z" fill="#000"/>
<rect x="1415.5" y="1238.5" width="14" height="9" fill="#fffccc" stroke="#000" stroke-width="1.3"/>
<rect x="1415.5" y="1259.5" width="14" height="18" fill="#fffccc" stroke="#000" stroke-width="1.3"/>
<path d="M1800,228 L1800,300" fill="none" stroke="#0b850b" stroke-width="2.2"/>
<path d="M1872,197 L1872,300" fill="none" stroke="#0b850b" stroke-width="2.2"/>
<path d="M1845.5,197.5 L1871.5,197.5" fill="none" stroke="#22b30f" stroke-width="1.2"/>
<path d="M1836.5,194.1 L1842.5,197.5 L1836.5,200.9 Z" fill="#fffccc" stroke="#000" stroke-width="1.1"/>
<path d="M1834.5,197.5 H1836.5 M1842.5,197.5 H1845.5" stroke="#000" stroke-width="1.1"/>
<path d="M1868.5,196.9 L1870.8,195.7 L1873.2,195.7 L1873.2,199.3 L1870.8,199.3 L1868.5,198.1 Z" fill="#000"/>
<path d="M1845.5,213.5 L1871.5,213.5" fill="none" stroke="#22b30f" stroke-width="1.2"/>
<path d="M1836.5,210.1 L1842.5,213.5 L1836.5,216.9 Z" fill="#fffccc" stroke="#000" stroke-width="1.1"/>
<path d="M1834.5,213.5 H1836.5 M1842.5,213.5 H1845.5" stroke="#000" stroke-width="1.1"/>
<path d="M1868.5,212.9 L1870.8,211.7 L1873.2,211.7 L1873.2,215.3 L1870.8,215.3 L1868.5,214.1 Z" fill="#000"/>
<path d="M1799.0,226.9 L1800.2,226.9 L1801.0,227.9 L1802.2,227.9 L1802.9,228.9 L1804.2,228.9 L1804.2,230.1 L1801.0,230.1 L1801.0,231.1 L1799.0,231.1 Z" fill="#000"/>
<path d="M1801.5,229.5 L1836.5,229.5" fill="none" stroke="#22b30f" stroke-width="1.2"/>
<path d="M1845.5,229.5 L1871.5,229.5" fill="none" stroke="#22b30f" stroke-width="1.2"/>
<path d="M1836.5,226.1 L1842.5,229.5 L1836.5,232.9 Z" fill="#fffccc" stroke="#000" stroke-width="1.1"/>
<path d="M1834.5,229.5 H1836.5 M1842.5,229.5 H1845.5" stroke="#000" stroke-width="1.1"/>
<path d="M1868.5,228.9 L1870.8,227.7 L1873.2,227.7 L1873.2,231.3 L1870.8,231.3 L1868.5,230.1 Z" fill="#000"/>
<path d="M1799.0,242.9 L1800.2,242.9 L1801.0,243.9 L1802.2,243.9 L1802.9,244.9 L1804.2,244.9 L1804.2,246.1 L1801.0,246.1 L1801.0,247.1 L1799.0,247.1 Z" fill="#000"/>
<path d="M1801.5,245.5 L1836.5,245.5" fill="none" stroke="#22b30f" stroke-width="1.2"/>
<path d="M1845.5,245.5 L1871.5,245.5" fill="none" stroke="#22b30f" stroke-width="1.2"/>
<path d="M1836.5,242.1 L1842.5,245.5 L1836.5,248.9 Z" fill="#fffccc" stroke="#000" stroke-width="1.1"/>
<path d="M1834.5,245.5 H1836.5 M1842.5,245.5 H1845.5" stroke="#000" stroke-width="1.1"/>
<path d="M1868.5,244.9 L1870.8,243.7 L1873.2,243.7 L1873.2,247.3 L1870.8,247.3 L1868.5,246.1 Z" fill="#000"/>
<path d="M1799.0,257.9 L1800.2,257.9 L1801.0,258.9 L1802.2,258.9 L1802.9,259.9 L1804.2,259.9 L1804.2,261.1 L1801.0,261.1 L1801.0,262.1 L1799.0,262.1 Z" fill="#000"/>
<path d="M1801.5,260.5 L1836.5,260.5" fill="none" stroke="#22b30f" stroke-width="1.2"/>
<path d="M1845.5,260.5 L1871.5,260.5" fill="none" stroke="#22b30f" stroke-width="1.2"/>
<path d="M1836.5,257.1 L1842.5,260.5 L1836.5,263.9 Z" fill="#fffccc" stroke="#000" stroke-width="1.1"/>
<path d="M1834.5,260.5 H1836.5 M1842.5,260.5 H1845.5" stroke="#000" stroke-width="1.1"/>
<path d="M1868.5,259.9 L1870.8,258.7 L1873.2,258.7 L1873.2,262.3 L1870.8,262.3 L1868.5,261.1 Z" fill="#000"/>
<path d="M1799.0,272.9 L1800.2,272.9 L1801.0,273.9 L1802.2,273.9 L1802.9,274.9 L1804.2,274.9 L1804.2,276.1 L1801.0,276.1 L1801.0,277.1 L1799.0,277.1 Z" fill="#000"/>
<path d="M1801.5,275.5 L1836.5,275.5" fill="none" stroke="#22b30f" stroke-width="1.2"/>
<path d="M1845.5,275.5 L1871.5,275.5" fill="none" stroke="#22b30f" stroke-width="1.2"/>
<path d="M1836.5,272.1 L1842.5,275.5 L1836.5,278.9 Z" fill="#fffccc" stroke="#000" stroke-width="1.1"/>
<path d="M1834.5,275.5 H1836.5 M1842.5,275.5 H1845.5" stroke="#000" stroke-width="1.1"/>
<path d="M1868.5,274.9 L1870.8,273.7 L1873.2,273.7 L1873.2,277.3 L1870.8,277.3 L1868.5,276.1 Z" fill="#000"/>
<path d="M1872,198 L1876,198" fill="none" stroke="#0b850b" stroke-width="2.2"/>
<path d="M1877.0,195.1 h2.6 l1.6,1.4 v1.6 l-1.6,1.4 h-2.6 z" fill="#fff" stroke="#000" stroke-width="2"/>
<path d="M1415.5,244.5 H1760.0 L1761.5,246.0 V654.5 H1415.5 Z" fill="#f9f9f9" stroke="#000" stroke-width="1.3"/>
<rect x="1416" y="246" width="4" height="4" fill="#2f5597"/>
<path d="M1410,258 L1427,258" fill="none" stroke="#0b850b" stroke-width="2.2"/>
<path d="M1410,262 L1422,262" fill="none" stroke="#0b850b" stroke-width="2.2"/>
<path d="M1426.0,255.9 L1427.2,255.9 L1428.0,256.9 L1429.2,256.9 L1429.9,257.9 L1431.2,257.9 L1431.2,259.1 L1428.0,259.1 L1428.0,260.1 L1426.0,260.1 Z" fill="#000"/>
<path d="M1421.0,258.9 L1422.2,258.9 L1423.0,259.9 L1424.2,259.9 L1424.9,260.9 L1426.2,260.9 L1426.2,262.1 L1423.0,262.1 L1423.0,263.1 L1421.0,263.1 Z" fill="#000"/>
<path d="M1422,256 L1422,476" fill="none" stroke="#0b850b" stroke-width="2.2"/>
<path d="M1427,252 L1427,471" fill="none" stroke="#0b850b" stroke-width="2.2"/>
<path d="M1427.5,253.5 L1443.5,253.5" fill="none" stroke="#22b30f" stroke-width="1.2"/>
<path d="M1441.5,253.5 H1443.5" stroke="#000" stroke-width="1.2"/>
<path d="M1426.0,250.9 L1427.2,250.9 L1428.0,251.9 L1429.2,251.9 L1429.9,252.9 L1431.2,252.9 L1431.2,254.1 L1428.0,254.1 L1428.0,255.1 L1426.0,255.1 Z" fill="#000"/>
<path d="M1422.5,258.5 L1443.5,258.5" fill="none" stroke="#22b30f" stroke-width="1.2"/>
<path d="M1441.5,258.5 H1443.5" stroke="#000" stroke-width="1.2"/>
<path d="M1421.0,255.9 L1422.2,255.9 L1423.0,256.9 L1424.2,256.9 L1424.9,257.9 L1426.2,257.9 L1426.2,259.1 L1423.0,259.1 L1423.0,260.1 L1421.0,260.1 Z" fill="#000"/>
<path d="M1427.5,262.5 L1443.5,262.5" fill="none" stroke="#22b30f" stroke-width="1.2"/>
<path d="M1441.5,262.5 H1443.5" stroke="#000" stroke-width="1.2"/>
<path d="M1426.0,259.9 L1427.2,259.9 L1428.0,260.9 L1429.2,260.9 L1429.9,261.9 L1431.2,261.9 L1431.2,263.1 L1428.0,263.1 L1428.0,264.1 L1426.0,264.1 Z" fill="#000"/>
<path d="M1422.5,267.5 L1443.5,267.5" fill="none" stroke="#22b30f" stroke-width="1.2"/>
<path d="M1441.5,267.5 H1443.5" stroke="#000" stroke-width="1.2"/>
<path d="M1421.0,264.9 L1422.2,264.9 L1423.0,265.9 L1424.2,265.9 L1424.9,266.9 L1426.2,266.9 L1426.2,268.1 L1423.0,268.1 L1423.0,269.1 L1421.0,269.1 Z" fill="#000"/>
<path d="M1427.5,271.5 L1443.5,271.5" fill="none" stroke="#22b30f" stroke-width="1.2"/>
<path d="M1441.5,271.5 H1443.5" stroke="#000" stroke-width="1.2"/>
<path d="M1426.0,268.9 L1427.2,268.9 L1428.0,269.9 L1429.2,269.9 L1429.9,270.9 L1431.2,270.9 L1431.2,272.1 L1428.0,272.1 L1428.0,273.1 L1426.0,273.1 Z" fill="#000"/>
<path d="M1422.5,276.5 L1443.5,276.5" fill="none" stroke="#22b30f" stroke-width="1.2"/>
<path d="M1441.5,276.5 H1443.5" stroke="#000" stroke-width="1.2"/>
<path d="M1421.0,273.9 L1422.2,273.9 L1423.0,274.9 L1424.2,274.9 L1424.9,275.9 L1426.2,275.9 L1426.2,277.1 L1423.0,277.1 L1423.0,278.1 L1421.0,278.1 Z" fill="#000"/>
<rect x="1443.5" y="251.5" width="14" height="27" fill="#fffccc" stroke="#000" stroke-width="1.3"/>
<path d="M1427.5,291.5 L1443.5,291.5" fill="none" stroke="#22b30f" stroke-width="1.2"/>
<path d="M1441.5,291.5 H1443.5" stroke="#000" stroke-width="1.2"/>
<path d="M1426.0,288.9 L1427.2,288.9 L1428.0,289.9 L1429.2,289.9 L1429.9,290.9 L1431.2,290.9 L1431.2,292.1 L1428.0,292.1 L1428.0,293.1 L1426.0,293.1 Z" fill="#000"/>
<path d="M1422.5,296.5 L1443.5,296.5" fill="none" stroke="#22b30f" stroke-width="1.2"/>
<path d="M1441.5,296.5 H1443.5" stroke="#000" stroke-width="1.2"/>
<path d="M1421.0,293.9 L1422.2,293.9 L1423.0,294.9 L1424.2,294.9 L1424.9,295.9 L1426.2,295.9 L1426.2,297.1 L1423.0,297.1 L1423.0,298.1 L1421.0,298.1 Z" fill="#000"/>
<path d="M1427.5,300.5 L1443.5,300.5" fill="none" stroke="#22b30f" stroke-width="1.2"/>
<path d="M1441.5,300.5 H1443.5" stroke="#000" stroke-width="1.2"/>
<path d="M1426.0,297.9 L1427.2,297.9 L1428.0,298.9 L1429.2,298.9 L1429.9,299.9 L1431.2,299.9 L1431.2,301.1 L1428.0,301.1 L1428.0,302.1 L1426.0,302.1 Z" fill="#000"/>
<path d="M1422.5,305.5 L1443.5,305.5" fill="none" stroke="#22b30f" stroke-width="1.2"/>
<path d="M1441.5,305.5 H1443.5" stroke="#000" stroke-width="1.2"/>
<path d="M1421.0,302.9 L1422.2,302.9 L1423.0,303.9 L1424.2,303.9 L1424.9,304.9 L1426.2,304.9 L1426.2,306.1 L1423.0,306.1 L1423.0,307.1 L1421.0,307.1 Z" fill="#000"/>
<path d="M1427.5,309.5 L1443.5,309.5" fill="none" stroke="#22b30f" stroke-width="1.2"/>
<path d="M1441.5,309.5 H1443.5" stroke="#000" stroke-width="1.2"/>
<path d="M1426.0,306.9 L1427.2,306.9 L1428.0,307.9 L1429.2,307.9 L1429.9,308.9 L1431.2,308.9 L1431.2,310.1 L1428.0,310.1 L1428.0,311.1 L1426.0,311.1 Z" fill="#000"/>
<path d="M1422.5,314.5 L1443.5,314.5" fill="none" stroke="#22b30f" stroke-width="1.2"/>
<path d="M1441.5,314.5 H1443.5" stroke="#000" stroke-width="1.2"/>
<path d="M1421.0,311.9 L1422.2,311.9 L1423.0,312.9 L1424.2,312.9 L1424.9,313.9 L1426.2,313.9 L1426.2,315.1 L1423.0,315.1 L1423.0,316.1 L1421.0,316.1 Z" fill="#000"/>
<rect x="1443.5" y="289.5" width="14" height="27" fill="#fffccc" stroke="#000" stroke-width="1.3"/>
<path d="M1427.5,330.5 L1443.5,330.5" fill="none" stroke="#22b30f" stroke-width="1.2"/>
<path d="M1441.5,330.5 H1443.5" stroke="#000" stroke-width="1.2"/>
<path d="M1426.0,327.9 L1427.2,327.9 L1428.0,328.9 L1429.2,328.9 L1429.9,329.9 L1431.2,329.9 L1431.2,331.1 L1428.0,331.1 L1428.0,332.1 L1426.0,332.1 Z" fill="#000"/>
<path d="M1422.5,335.5 L1443.5,335.5" fill="none" stroke="#22b30f" stroke-width="1.2"/>
<path d="M1441.5,335.5 H1443.5" stroke="#000" stroke-width="1.2"/>
<path d="M1421.0,332.9 L1422.2,332.9 L1423.0,333.9 L1424.2,333.9 L1424.9,334.9 L1426.2,334.9 L1426.2,336.1 L1423.0,336.1 L1423.0,337.1 L1421.0,337.1 Z" fill="#000"/>
<path d="M1427.5,339.5 L1443.5,339.5" fill="none" stroke="#22b30f" stroke-width="1.2"/>
<path d="M1441.5,339.5 H1443.5" stroke="#000" stroke-width="1.2"/>
<path d="M1426.0,336.9 L1427.2,336.9 L1428.0,337.9 L1429.2,337.9 L1429.9,338.9 L1431.2,338.9 L1431.2,340.1 L1428.0,340.1 L1428.0,341.1 L1426.0,341.1 Z" fill="#000"/>
<path d="M1422.5,344.5 L1443.5,344.5" fill="none" stroke="#22b30f" stroke-width="1.2"/>
<path d="M1441.5,344.5 H1443.5" stroke="#000" stroke-width="1.2"/>
<path d="M1421.0,341.9 L1422.2,341.9 L1423.0,342.9 L1424.2,342.9 L1424.9,343.9 L1426.2,343.9 L1426.2,345.1 L1423.0,345.1 L1423.0,346.1 L1421.0,346.1 Z" fill="#000"/>
<path d="M1427.5,348.5 L1443.5,348.5" fill="none" stroke="#22b30f" stroke-width="1.2"/>
<path d="M1441.5,348.5 H1443.5" stroke="#000" stroke-width="1.2"/>
<path d="M1426.0,345.9 L1427.2,345.9 L1428.0,346.9 L1429.2,346.9 L1429.9,347.9 L1431.2,347.9 L1431.2,349.1 L1428.0,349.1 L1428.0,350.1 L1426.0,350.1 Z" fill="#000"/>
<path d="M1422.5,353.5 L1443.5,353.5" fill="none" stroke="#22b30f" stroke-width="1.2"/>
<path d="M1441.5,353.5 H1443.5" stroke="#000" stroke-width="1.2"/>
<path d="M1421.0,350.9 L1422.2,350.9 L1423.0,351.9 L1424.2,351.9 L1424.9,352.9 L1426.2,352.9 L1426.2,354.1 L1423.0,354.1 L1423.0,355.1 L1421.0,355.1 Z" fill="#000"/>
<rect x="1443.5" y="328.5" width="14" height="27" fill="#fffccc" stroke="#000" stroke-width="1.3"/>
<path d="M1427.5,368.5 L1443.5,368.5" fill="none" stroke="#22b30f" stroke-width="1.2"/>
<path d="M1441.5,368.5 H1443.5" stroke="#000" stroke-width="1.2"/>
<path d="M1426.0,365.9 L1427.2,365.9 L1428.0,366.9 L1429.2,366.9 L1429.9,367.9 L1431.2,367.9 L1431.2,369.1 L1428.0,369.1 L1428.0,370.1 L1426.0,370.1 Z" fill="#000"/>
<path d="M1422.5,373.5 L1443.5,373.5" fill="none" stroke="#22b30f" stroke-width="1.2"/>
<path d="M1441.5,373.5 H1443.5" stroke="#000" stroke-width="1.2"/>
<path d="M1421.0,370.9 L1422.2,370.9 L1423.0,371.9 L1424.2,371.9 L1424.9,372.9 L1426.2,372.9 L1426.2,374.1 L1423.0,374.1 L1423.0,375.1 L1421.0,375.1 Z" fill="#000"/>
<path d="M1427.5,377.5 L1443.5,377.5" fill="none" stroke="#22b30f" stroke-width="1.2"/>
<path d="M1441.5,377.5 H1443.5" stroke="#000" stroke-width="1.2"/>
<path d="M1426.0,374.9 L1427.2,374.9 L1428.0,375.9 L1429.2,375.9 L1429.9,376.9 L1431.2,376.9 L1431.2,378.1 L1428.0,378.1 L1428.0,379.1 L1426.0,379.1 Z" fill="#000"/>
<path d="M1422.5,382.5 L1443.5,382.5" fill="none" stroke="#22b30f" stroke-width="1.2"/>
<path d="M1441.5,382.5 H1443.5" stroke="#000" stroke-width="1.2"/>
<path d="M1421.0,379.9 L1422.2,379.9 L1423.0,380.9 L1424.2,380.9 L1424.9,381.9 L1426.2,381.9 L1426.2,383.1 L1423.0,383.1 L1423.0,384.1 L1421.0,384.1 Z" fill="#000"/>
<path d="M1427.5,386.5 L1443.5,386.5" fill="none" stroke="#22b30f" stroke-width="1.2"/>
<path d="M1441.5,386.5 H1443.5" stroke="#000" stroke-width="1.2"/>
<path d="M1426.0,383.9 L1427.2,383.9 L1428.0,384.9 L1429.2,384.9 L1429.9,385.9 L1431.2,385.9 L1431.2,387.1 L1428.0,387.1 L1428.0,388.1 L1426.0,388.1 Z" fill="#000"/>
<path d="M1422.5,391.5 L1443.5,391.5" fill="none" stroke="#22b30f" stroke-width="1.2"/>
<path d="M1441.5,391.5 H1443.5" stroke="#000" stroke-width="1.2"/>
<path d="M1421.0,388.9 L1422.2,388.9 L1423.0,389.9 L1424.2,389.9 L1424.9,390.9 L1426.2,390.9 L1426.2,392.1 L1423.0,392.1 L1423.0,393.1 L1421.0,393.1 Z" fill="#000"/>
<rect x="1443.5" y="366.5" width="14" height="27" fill="#fffccc" stroke="#000" stroke-width="1.3"/>
<path d="M1427.5,407.5 L1443.5,407.5" fill="none" stroke="#22b30f" stroke-width="1.2"/>
<path d="M1441.5,407.5 H1443.5" stroke="#000" stroke-width="1.2"/>
<path d="M1426.0,404.9 L1427.2,404.9 L1428.0,405.9 L1429.2,405.9 L1429.9,406.9 L1431.2,406.9 L1431.2,408.1 L1428.0,408.1 L1428.0,409.1 L1426.0,409.1 Z" fill="#000"/>
<path d="M1422.5,412.5 L1443.5,412.5" fill="none" stroke="#22b30f" stroke-width="1.2"/>
<path d="M1441.5,412.5 H1443.5" stroke="#000" stroke-width="1.2"/>
<path d="M1421.0,409.9 L1422.2,409.9 L1423.0,410.9 L1424.2,410.9 L1424.9,411.9 L1426.2,411.9 L1426.2,413.1 L1423.0,413.1 L1423.0,414.1 L1421.0,414.1 Z" fill="#000"/>
<path d="M1427.5,416.5 L1443.5,416.5" fill="none" stroke="#22b30f" stroke-width="1.2"/>
<path d="M1441.5,416.5 H1443.5" stroke="#000" stroke-width="1.2"/>
<path d="M1426.0,413.9 L1427.2,413.9 L1428.0,414.9 L1429.2,414.9 L1429.9,415.9 L1431.2,415.9 L1431.2,417.1 L1428.0,417.1 L1428.0,418.1 L1426.0,418.1 Z" fill="#000"/>
<path d="M1422.5,421.5 L1443.5,421.5" fill="none" stroke="#22b30f" stroke-width="1.2"/>
<path d="M1441.5,421.5 H1443.5" stroke="#000" stroke-width="1.2"/>
<path d="M1421.0,418.9 L1422.2,418.9 L1423.0,419.9 L1424.2,419.9 L1424.9,420.9 L1426.2,420.9 L1426.2,422.1 L1423.0,422.1 L1423.0,423.1 L1421.0,423.1 Z" fill="#000"/>
<path d="M1427.5,425.5 L1443.5,425.5" fill="none" stroke="#22b30f" stroke-width="1.2"/>
<path d="M1441.5,425.5 H1443.5" stroke="#000" stroke-width="1.2"/>
<path d="M1426.0,422.9 L1427.2,422.9 L1428.0,423.9 L1429.2,423.9 L1429.9,424.9 L1431.2,424.9 L1431.2,426.1 L1428.0,426.1 L1428.0,427.1 L1426.0,427.1 Z" fill="#000"/>
<path d="M1422.5,430.5 L1443.5,430.5" fill="none" stroke="#22b30f" stroke-width="1.2"/>
<path d="M1441.5,430.5 H1443.5" stroke="#000" stroke-width="1.2"/>
<path d="M1421.0,427.9 L1422.2,427.9 L1423.0,428.9 L1424.2,428.9 L1424.9,429.9 L1426.2,429.9 L1426.2,431.1 L1423.0,431.1 L1423.0,432.1 L1421.0,432.1 Z" fill="#000"/>
<rect x="1443.5" y="405.5" width="14" height="27" fill="#fffccc" stroke="#000" stroke-width="1.3"/>
<path d="M1427.5,452.5 L1443.5,452.5" fill="none" stroke="#22b30f" stroke-width="1.2"/>
<path d="M1441.5,452.5 H1443.5" stroke="#000" stroke-width="1.2"/>
<path d="M1426.0,449.9 L1427.2,449.9 L1428.0,450.9 L1429.2,450.9 L1429.9,451.9 L1431.2,451.9 L1431.2,453.1 L1428.0,453.1 L1428.0,454.1 L1426.0,454.1 Z" fill="#000"/>
<path d="M1422.5,457.5 L1443.5,457.5" fill="none" stroke="#22b30f" stroke-width="1.2"/>
<path d="M1441.5,457.5 H1443.5" stroke="#000" stroke-width="1.2"/>
<path d="M1421.0,454.9 L1422.2,454.9 L1423.0,455.9 L1424.2,455.9 L1424.9,456.9 L1426.2,456.9 L1426.2,458.1 L1423.0,458.1 L1423.0,459.1 L1421.0,459.1 Z" fill="#000"/>
<path d="M1427.5,461.5 L1443.5,461.5" fill="none" stroke="#22b30f" stroke-width="1.2"/>
<path d="M1441.5,461.5 H1443.5" stroke="#000" stroke-width="1.2"/>
<path d="M1426.0,458.9 L1427.2,458.9 L1428.0,459.9 L1429.2,459.9 L1429.9,460.9 L1431.2,460.9 L1431.2,462.1 L1428.0,462.1 L1428.0,463.1 L1426.0,463.1 Z" fill="#000"/>
<path d="M1422.5,466.5 L1443.5,466.5" fill="none" stroke="#22b30f" stroke-width="1.2"/>
<path d="M1441.5,466.5 H1443.5" stroke="#000" stroke-width="1.2"/>
<path d="M1421.0,463.9 L1422.2,463.9 L1423.0,464.9 L1424.2,464.9 L1424.9,465.9 L1426.2,465.9 L1426.2,467.1 L1423.0,467.1 L1423.0,468.1 L1421.0,468.1 Z" fill="#000"/>
<path d="M1427.5,470.5 L1443.5,470.5" fill="none" stroke="#22b30f" stroke-width="1.2"/>
<path d="M1441.5,470.5 H1443.5" stroke="#000" stroke-width="1.2"/>
<path d="M1426.0,467.9 L1427.2,467.9 L1428.0,468.9 L1429.2,468.9 L1429.9,469.9 L1431.2,469.9 L1431.2,471.1 L1428.0,471.1 L1428.0,472.1 L1426.0,472.1 Z" fill="#000"/>
<path d="M1422.5,475.5 L1443.5,475.5" fill="none" stroke="#22b30f" stroke-width="1.2"/>
<path d="M1441.5,475.5 H1443.5" stroke="#000" stroke-width="1.2"/>
<path d="M1421.0,472.9 L1422.2,472.9 L1423.0,473.9 L1424.2,473.9 L1424.9,474.9 L1426.2,474.9 L1426.2,476.1 L1423.0,476.1 L1423.0,477.1 L1421.0,477.1 Z" fill="#000"/>
<rect x="1443.5" y="450.5" width="14" height="27" fill="#fffccc" stroke="#000" stroke-width="1.3"/>
<path d="M1481,306 L1481,580" fill="none" stroke="#0b850b" stroke-width="2.2"/>
<path d="M1486,301 L1486,575" fill="none" stroke="#0b850b" stroke-width="2.2"/>
<path d="M1422,439 L1481,439" fill="none" stroke="#0b850b" stroke-width="2.2"/>
<path d="M1427,443 L1486,443" fill="none" stroke="#0b850b" stroke-width="2.2"/>
<circle cx="1422" cy="439" r="2.6" fill="#0b850b"/>
<circle cx="1481" cy="439" r="2.6" fill="#0b850b"/>
<circle cx="1427" cy="443" r="2.6" fill="#0b850b"/>
<circle cx="1486" cy="443" r="2.6" fill="#0b850b"/>
<path d="M1486.5,303.5 L1508.5,303.5" fill="none" stroke="#22b30f" stroke-width="1.2"/>
<path d="M1506.5,303.5 H1508.5" stroke="#000" stroke-width="1.2"/>
<path d="M1485.0,300.9 L1486.2,300.9 L1487.0,301.9 L1488.2,301.9 L1488.9,302.9 L1490.2,302.9 L1490.2,304.1 L1487.0,304.1 L1487.0,305.1 L1485.0,305.1 Z" fill="#000"/>
<path d="M1481.5,308.5 L1508.5,308.5" fill="none" stroke="#22b30f" stroke-width="1.2"/>
<path d="M1506.5,308.5 H1508.5" stroke="#000" stroke-width="1.2"/>
<path d="M1480.0,305.9 L1481.2,305.9 L1482.0,306.9 L1483.2,306.9 L1483.9,307.9 L1485.2,307.9 L1485.2,309.1 L1482.0,309.1 L1482.0,310.1 L1480.0,310.1 Z" fill="#000"/>
<path d="M1486.5,312.5 L1508.5,312.5" fill="none" stroke="#22b30f" stroke-width="1.2"/>
<path d="M1506.5,312.5 H1508.5" stroke="#000" stroke-width="1.2"/>
<path d="M1485.0,309.9 L1486.2,309.9 L1487.0,310.9 L1488.2,310.9 L1488.9,311.9 L1490.2,311.9 L1490.2,313.1 L1487.0,313.1 L1487.0,314.1 L1485.0,314.1 Z" fill="#000"/>
<path d="M1481.5,317.5 L1508.5,317.5" fill="none" stroke="#22b30f" stroke-width="1.2"/>
<path d="M1506.5,317.5 H1508.5" stroke="#000" stroke-width="1.2"/>
<path d="M1480.0,314.9 L1481.2,314.9 L1482.0,315.9 L1483.2,315.9 L1483.9,316.9 L1485.2,316.9 L1485.2,318.1 L1482.0,318.1 L1482.0,319.1 L1480.0,319.1 Z" fill="#000"/>
<path d="M1486.5,321.5 L1508.5,321.5" fill="none" stroke="#22b30f" stroke-width="1.2"/>
<path d="M1506.5,321.5 H1508.5" stroke="#000" stroke-width="1.2"/>
<path d="M1485.0,318.9 L1486.2,318.9 L1487.0,319.9 L1488.2,319.9 L1488.9,320.9 L1490.2,320.9 L1490.2,322.1 L1487.0,322.1 L1487.0,323.1 L1485.0,323.1 Z" fill="#000"/>
<path d="M1481.5,326.5 L1508.5,326.5" fill="none" stroke="#22b30f" stroke-width="1.2"/>
<path d="M1506.5,326.5 H1508.5" stroke="#000" stroke-width="1.2"/>
<path d="M1480.0,323.9 L1481.2,323.9 L1482.0,324.9 L1483.2,324.9 L1483.9,325.9 L1485.2,325.9 L1485.2,327.1 L1482.0,327.1 L1482.0,328.1 L1480.0,328.1 Z" fill="#000"/>
<rect x="1508.5" y="301.5" width="14" height="27" fill="#fffccc" stroke="#000" stroke-width="1.3"/>
<path d="M1486.5,438.5 L1508.5,438.5" fill="none" stroke="#22b30f" stroke-width="1.2"/>
<path d="M1506.5,438.5 H1508.5" stroke="#000" stroke-width="1.2"/>
<path d="M1485.0,435.9 L1486.2,435.9 L1487.0,436.9 L1488.2,436.9 L1488.9,437.9 L1490.2,437.9 L1490.2,439.1 L1487.0,439.1 L1487.0,440.1 L1485.0,440.1 Z" fill="#000"/>
<path d="M1481.5,442.5 L1508.5,442.5" fill="none" stroke="#22b30f" stroke-width="1.2"/>
<path d="M1506.5,442.5 H1508.5" stroke="#000" stroke-width="1.2"/>
<path d="M1480.0,439.9 L1481.2,439.9 L1482.0,440.9 L1483.2,440.9 L1483.9,441.9 L1485.2,441.9 L1485.2,443.1 L1482.0,443.1 L1482.0,444.1 L1480.0,444.1 Z" fill="#000"/>
<path d="M1486.5,446.5 L1508.5,446.5" fill="none" stroke="#22b30f" stroke-width="1.2"/>
<path d="M1506.5,446.5 H1508.5" stroke="#000" stroke-width="1.2"/>
<path d="M1485.0,443.9 L1486.2,443.9 L1487.0,444.9 L1488.2,444.9 L1488.9,445.9 L1490.2,445.9 L1490.2,447.1 L1487.0,447.1 L1487.0,448.1 L1485.0,448.1 Z" fill="#000"/>
<path d="M1481.5,452.5 L1508.5,452.5" fill="none" stroke="#22b30f" stroke-width="1.2"/>
<path d="M1506.5,452.5 H1508.5" stroke="#000" stroke-width="1.2"/>
<path d="M1480.0,449.9 L1481.2,449.9 L1482.0,450.9 L1483.2,450.9 L1483.9,451.9 L1485.2,451.9 L1485.2,453.1 L1482.0,453.1 L1482.0,454.1 L1480.0,454.1 Z" fill="#000"/>
<path d="M1486.5,456.5 L1508.5,456.5" fill="none" stroke="#22b30f" stroke-width="1.2"/>
<path d="M1506.5,456.5 H1508.5" stroke="#000" stroke-width="1.2"/>
<path d="M1485.0,453.9 L1486.2,453.9 L1487.0,454.9 L1488.2,454.9 L1488.9,455.9 L1490.2,455.9 L1490.2,457.1 L1487.0,457.1 L1487.0,458.1 L1485.0,458.1 Z" fill="#000"/>
<path d="M1481.5,461.5 L1508.5,461.5" fill="none" stroke="#22b30f" stroke-width="1.2"/>
<path d="M1506.5,461.5 H1508.5" stroke="#000" stroke-width="1.2"/>
<path d="M1480.0,458.9 L1481.2,458.9 L1482.0,459.9 L1483.2,459.9 L1483.9,460.9 L1485.2,460.9 L1485.2,462.1 L1482.0,462.1 L1482.0,463.1 L1480.0,463.1 Z" fill="#000"/>
<rect x="1508.5" y="436.5" width="14" height="27" fill="#fffccc" stroke="#000" stroke-width="1.3"/>
<path d="M1486.5,479.5 L1508.5,479.5" fill="none" stroke="#22b30f" stroke-width="1.2"/>
<path d="M1506.5,479.5 H1508.5" stroke="#000" stroke-width="1.2"/>
<path d="M1485.0,476.9 L1486.2,476.9 L1487.0,477.9 L1488.2,477.9 L1488.9,478.9 L1490.2,478.9 L1490.2,480.1 L1487.0,480.1 L1487.0,481.1 L1485.0,481.1 Z" fill="#000"/>
<path d="M1481.5,484.5 L1508.5,484.5" fill="none" stroke="#22b30f" stroke-width="1.2"/>
<path d="M1506.5,484.5 H1508.5" stroke="#000" stroke-width="1.2"/>
<path d="M1480.0,481.9 L1481.2,481.9 L1482.0,482.9 L1483.2,482.9 L1483.9,483.9 L1485.2,483.9 L1485.2,485.1 L1482.0,485.1 L1482.0,486.1 L1480.0,486.1 Z" fill="#000"/>
<path d="M1486.5,488.5 L1508.5,488.5" fill="none" stroke="#22b30f" stroke-width="1.2"/>
<path d="M1506.5,488.5 H1508.5" stroke="#000" stroke-width="1.2"/>
<path d="M1485.0,485.9 L1486.2,485.9 L1487.0,486.9 L1488.2,486.9 L1488.9,487.9 L1490.2,487.9 L1490.2,489.1 L1487.0,489.1 L1487.0,490.1 L1485.0,490.1 Z" fill="#000"/>
<path d="M1481.5,493.5 L1508.5,493.5" fill="none" stroke="#22b30f" stroke-width="1.2"/>
<path d="M1506.5,493.5 H1508.5" stroke="#000" stroke-width="1.2"/>
<path d="M1480.0,490.9 L1481.2,490.9 L1482.0,491.9 L1483.2,491.9 L1483.9,492.9 L1485.2,492.9 L1485.2,494.1 L1482.0,494.1 L1482.0,495.1 L1480.0,495.1 Z" fill="#000"/>
<path d="M1486.5,497.5 L1508.5,497.5" fill="none" stroke="#22b30f" stroke-width="1.2"/>
<path d="M1506.5,497.5 H1508.5" stroke="#000" stroke-width="1.2"/>
<path d="M1485.0,494.9 L1486.2,494.9 L1487.0,495.9 L1488.2,495.9 L1488.9,496.9 L1490.2,496.9 L1490.2,498.1 L1487.0,498.1 L1487.0,499.1 L1485.0,499.1 Z" fill="#000"/>
<path d="M1481.5,502.5 L1508.5,502.5" fill="none" stroke="#22b30f" stroke-width="1.2"/>
<path d="M1506.5,502.5 H1508.5" stroke="#000" stroke-width="1.2"/>
<path d="M1480.0,499.9 L1481.2,499.9 L1482.0,500.9 L1483.2,500.9 L1483.9,501.9 L1485.2,501.9 L1485.2,503.1 L1482.0,503.1 L1482.0,504.1 L1480.0,504.1 Z" fill="#000"/>
<rect x="1508.5" y="477.5" width="14" height="27" fill="#fffccc" stroke="#000" stroke-width="1.3"/>
<path d="M1486.5,518.5 L1508.5,518.5" fill="none" stroke="#22b30f" stroke-width="1.2"/>
<path d="M1506.5,518.5 H1508.5" stroke="#000" stroke-width="1.2"/>
<path d="M1485.0,515.9 L1486.2,515.9 L1487.0,516.9 L1488.2,516.9 L1488.9,517.9 L1490.2,517.9 L1490.2,519.1 L1487.0,519.1 L1487.0,520.1 L1485.0,520.1 Z" fill="#000"/>
<path d="M1481.5,523.5 L1508.5,523.5" fill="none" stroke="#22b30f" stroke-width="1.2"/>
<path d="M1506.5,523.5 H1508.5" stroke="#000" stroke-width="1.2"/>
<path d="M1480.0,520.9 L1481.2,520.9 L1482.0,521.9 L1483.2,521.9 L1483.9,522.9 L1485.2,522.9 L1485.2,524.1 L1482.0,524.1 L1482.0,525.1 L1480.0,525.1 Z" fill="#000"/>
<path d="M1486.5,527.5 L1508.5,527.5" fill="none" stroke="#22b30f" stroke-width="1.2"/>
<path d="M1506.5,527.5 H1508.5" stroke="#000" stroke-width="1.2"/>
<path d="M1485.0,524.9 L1486.2,524.9 L1487.0,525.9 L1488.2,525.9 L1488.9,526.9 L1490.2,526.9 L1490.2,528.1 L1487.0,528.1 L1487.0,529.1 L1485.0,529.1 Z" fill="#000"/>
<path d="M1481.5,532.5 L1508.5,532.5" fill="none" stroke="#22b30f" stroke-width="1.2"/>
<path d="M1506.5,532.5 H1508.5" stroke="#000" stroke-width="1.2"/>
<path d="M1480.0,529.9 L1481.2,529.9 L1482.0,530.9 L1483.2,530.9 L1483.9,531.9 L1485.2,531.9 L1485.2,533.1 L1482.0,533.1 L1482.0,534.1 L1480.0,534.1 Z" fill="#000"/>
<path d="M1486.5,536.5 L1508.5,536.5" fill="none" stroke="#22b30f" stroke-width="1.2"/>
<path d="M1506.5,536.5 H1508.5" stroke="#000" stroke-width="1.2"/>
<path d="M1485.0,533.9 L1486.2,533.9 L1487.0,534.9 L1488.2,534.9 L1488.9,535.9 L1490.2,535.9 L1490.2,537.1 L1487.0,537.1 L1487.0,538.1 L1485.0,538.1 Z" fill="#000"/>
<path d="M1481.5,541.5 L1508.5,541.5" fill="none" stroke="#22b30f" stroke-width="1.2"/>
<path d="M1506.5,541.5 H1508.5" stroke="#000" stroke-width="1.2"/>
<path d="M1480.0,538.9 L1481.2,538.9 L1482.0,539.9 L1483.2,539.9 L1483.9,540.9 L1485.2,540.9 L1485.2,542.1 L1482.0,542.1 L1482.0,543.1 L1480.0,543.1 Z" fill="#000"/>
<rect x="1508.5" y="516.5" width="14" height="27" fill="#fffccc" stroke="#000" stroke-width="1.3"/>
<path d="M1486.5,556.5 L1508.5,556.5" fill="none" stroke="#22b30f" stroke-width="1.2"/>
<path d="M1506.5,556.5 H1508.5" stroke="#000" stroke-width="1.2"/>
<path d="M1485.0,553.9 L1486.2,553.9 L1487.0,554.9 L1488.2,554.9 L1488.9,555.9 L1490.2,555.9 L1490.2,557.1 L1487.0,557.1 L1487.0,558.1 L1485.0,558.1 Z" fill="#000"/>
<path d="M1481.5,561.5 L1508.5,561.5" fill="none" stroke="#22b30f" stroke-width="1.2"/>
<path d="M1506.5,561.5 H1508.5" stroke="#000" stroke-width="1.2"/>
<path d="M1480.0,558.9 L1481.2,558.9 L1482.0,559.9 L1483.2,559.9 L1483.9,560.9 L1485.2,560.9 L1485.2,562.1 L1482.0,562.1 L1482.0,563.1 L1480.0,563.1 Z" fill="#000"/>
<path d="M1486.5,565.5 L1508.5,565.5" fill="none" stroke="#22b30f" stroke-width="1.2"/>
<path d="M1506.5,565.5 H1508.5" stroke="#000" stroke-width="1.2"/>
<path d="M1485.0,562.9 L1486.2,562.9 L1487.0,563.9 L1488.2,563.9 L1488.9,564.9 L1490.2,564.9 L1490.2,566.1 L1487.0,566.1 L1487.0,567.1 L1485.0,567.1 Z" fill="#000"/>
<path d="M1481.5,570.5 L1508.5,570.5" fill="none" stroke="#22b30f" stroke-width="1.2"/>
<path d="M1506.5,570.5 H1508.5" stroke="#000" stroke-width="1.2"/>
<path d="M1480.0,567.9 L1481.2,567.9 L1482.0,568.9 L1483.2,568.9 L1483.9,569.9 L1485.2,569.9 L1485.2,571.1 L1482.0,571.1 L1482.0,572.1 L1480.0,572.1 Z" fill="#000"/>
<path d="M1486.5,574.5 L1508.5,574.5" fill="none" stroke="#22b30f" stroke-width="1.2"/>
<path d="M1506.5,574.5 H1508.5" stroke="#000" stroke-width="1.2"/>
<path d="M1485.0,571.9 L1486.2,571.9 L1487.0,572.9 L1488.2,572.9 L1488.9,573.9 L1490.2,573.9 L1490.2,575.1 L1487.0,575.1 L1487.0,576.1 L1485.0,576.1 Z" fill="#000"/>
<path d="M1481.5,579.5 L1508.5,579.5" fill="none" stroke="#22b30f" stroke-width="1.2"/>
<path d="M1506.5,579.5 H1508.5" stroke="#000" stroke-width="1.2"/>
<path d="M1480.0,576.9 L1481.2,576.9 L1482.0,577.9 L1483.2,577.9 L1483.9,578.9 L1485.2,578.9 L1485.2,580.1 L1482.0,580.1 L1482.0,581.1 L1480.0,581.1 Z" fill="#000"/>
<rect x="1508.5" y="554.5" width="14" height="27" fill="#fffccc" stroke="#000" stroke-width="1.3"/>
<path d="M1508.5,341.5 L1518.3,345.6 L1518.3,352.0 L1508.5,356.1 Z" fill="#fffccc" stroke="#000" stroke-width="1.2"/>
<path d="M1508.5,368.5 L1518.3,372.6 L1518.3,379.0 L1508.5,383.1 Z" fill="#fffccc" stroke="#000" stroke-width="1.2"/>
<path d="M1508.5,409.5 L1518.3,413.6 L1518.3,420.0 L1508.5,424.1 Z" fill="#fffccc" stroke="#000" stroke-width="1.2"/>
<path d="M1481,362 L1551,362" fill="none" stroke="#0b850b" stroke-width="2.2"/>
<circle cx="1481" cy="362" r="2.6" fill="#0b850b"/>
<circle cx="1551" cy="362" r="2.6" fill="#0b850b"/>
<path d="M1513.5,355.5 L1513.5,362.5" fill="none" stroke="#22b30f" stroke-width="1.2"/>
<path d="M1481,389 L1513,389" fill="none" stroke="#0b850b" stroke-width="2.2"/>
<circle cx="1481" cy="389" r="2.6" fill="#0b850b"/>
<path d="M1513.5,382.5 L1513.5,388.5" fill="none" stroke="#22b30f" stroke-width="1.2"/>
<path d="M1481,430 L1513,430" fill="none" stroke="#0b850b" stroke-width="2.2"/>
<circle cx="1481" cy="430" r="2.6" fill="#0b850b"/>
<path d="M1513.5,423.5 L1513.5,430.5" fill="none" stroke="#22b30f" stroke-width="1.2"/>
<path d="M1486,470 L1547,470" fill="none" stroke="#0b850b" stroke-width="2.2"/>
<circle cx="1486" cy="470" r="2.6" fill="#0b850b"/>
<circle cx="1547" cy="470" r="2.6" fill="#0b850b"/>
<path d="M1547,350 L1547,646" fill="none" stroke="#0b850b" stroke-width="2.2"/>
<path d="M1551,290 L1551,641" fill="none" stroke="#0b850b" stroke-width="2.2"/>
<path d="M1457.5,262.5 L1490.5,262.5 L1490.5,346.5 L1508.5,346.5" fill="none" stroke="#22b30f" stroke-width="1.2"/>
<path d="M1490.5,287.5 L1583.5,287.5" fill="none" stroke="#22b30f" stroke-width="1.2"/>
<circle cx="1490.5" cy="287.5" r="2.0" fill="#22b30f"/>
<circle cx="1556.5" cy="287.5" r="2.0" fill="#22b30f"/>
<path d="M1556.5,287.5 L1556.5,414.5 L1583.5,414.5" fill="none" stroke="#22b30f" stroke-width="1.2"/>
<circle cx="1556.5" cy="330.5" r="2.0" fill="#22b30f"/>
<path d="M1556.5,330.5 L1583.5,330.5" fill="none" stroke="#22b30f" stroke-width="1.2"/>
<path d="M1457.5,301.5 L1477.5,301.5 L1477.5,351.5 L1508.5,351.5" fill="none" stroke="#22b30f" stroke-width="1.2"/>
<path d="M1477.5,335.5 L1560.5,335.5" fill="none" stroke="#22b30f" stroke-width="1.2"/>
<circle cx="1477.5" cy="335.5" r="2.0" fill="#22b30f"/>
<circle cx="1560.5" cy="335.5" r="2.0" fill="#22b30f"/>
<path d="M1560.5,296.5 L1583.5,296.5" fill="none" stroke="#22b30f" stroke-width="1.2"/>
<path d="M1560.5,296.5 L1560.5,405.5 L1583.5,405.5" fill="none" stroke="#22b30f" stroke-width="1.2"/>
<path d="M1560.5,321.5 L1583.5,321.5" fill="none" stroke="#22b30f" stroke-width="1.2"/>
<circle cx="1560.5" cy="321.5" r="2.0" fill="#22b30f"/>
<path d="M1457.5,339.5 L1472.5,339.5 L1472.5,374.5 L1508.5,374.5" fill="none" stroke="#22b30f" stroke-width="1.2"/>
<path d="M1457.5,378.5 L1508.5,378.5" fill="none" stroke="#22b30f" stroke-width="1.2"/>
<path d="M1457.5,416.5 L1472.5,416.5 L1472.5,414.5 L1508.5,414.5" fill="none" stroke="#22b30f" stroke-width="1.2"/>
<path d="M1457.5,461.5 L1477.5,461.5 L1477.5,418.5 L1508.5,418.5" fill="none" stroke="#22b30f" stroke-width="1.2"/>
<path d="M1522.5,312.5 L1565.5,312.5" fill="none" stroke="#22b30f" stroke-width="1.2"/>
<circle cx="1565.5" cy="312.5" r="2.0" fill="#22b30f"/>
<path d="M1565.5,301.5 L1565.5,400.5 L1583.5,400.5" fill="none" stroke="#22b30f" stroke-width="1.2"/>
<path d="M1565.5,301.5 L1583.5,301.5" fill="none" stroke="#22b30f" stroke-width="1.2"/>
<path d="M1565.5,317.5 L1583.5,317.5" fill="none" stroke="#22b30f" stroke-width="1.2"/>
<circle cx="1565.5" cy="317.5" r="2.0" fill="#22b30f"/>
<path d="M1565.5,366.5 L1583.5,366.5" fill="none" stroke="#22b30f" stroke-width="1.2"/>
<circle cx="1565.5" cy="366.5" r="2.0" fill="#22b30f"/>
<path d="M1518.5,348.5 L1538.5,348.5 L1538.5,371.5 L1583.5,371.5" fill="none" stroke="#22b30f" stroke-width="1.2"/>
<path d="M1518.5,375.5 L1583.5,375.5" fill="none" stroke="#22b30f" stroke-width="1.2"/>
<path d="M1518.5,416.5 L1538.5,416.5 L1538.5,384.5 L1583.5,384.5" fill="none" stroke="#22b30f" stroke-width="1.2"/>
<path d="M1522.5,448.5 L1583.5,448.5" fill="none" stroke="#22b30f" stroke-width="1.2"/>
<path d="M1522.5,488.5 L1538.5,488.5 L1538.5,457.5 L1583.5,457.5" fill="none" stroke="#22b30f" stroke-width="1.2"/>
<path d="M1522.5,527.5 L1542.5,527.5 L1542.5,597.5 L1583.5,597.5" fill="none" stroke="#22b30f" stroke-width="1.2"/>
<path d="M1542.5,577.5 L1612.5,577.5 L1612.5,572.5 L1660.5,572.5" fill="none" stroke="#22b30f" stroke-width="1.2"/>
<circle cx="1542.5" cy="577.5" r="2.0" fill="#22b30f"/>
<path d="M1522.5,565.5 L1538.5,565.5 L1538.5,593.5 L1583.5,593.5" fill="none" stroke="#22b30f" stroke-width="1.2"/>
<path d="M1538.5,581.5 L1660.5,581.5" fill="none" stroke="#22b30f" stroke-width="1.2"/>
<circle cx="1538.5" cy="581.5" r="2.0" fill="#22b30f"/>
<path d="M1551.5,292.5 L1583.5,292.5" fill="none" stroke="#22b30f" stroke-width="1.2"/>
<path d="M1581.5,292.5 H1583.5" stroke="#000" stroke-width="1.2"/>
<path d="M1550.0,289.9 L1551.2,289.9 L1552.0,290.9 L1553.2,290.9 L1553.9,291.9 L1555.2,291.9 L1555.2,293.1 L1552.0,293.1 L1552.0,294.1 L1550.0,294.1 Z" fill="#000"/>
<path d="M1551.5,326.5 L1583.5,326.5" fill="none" stroke="#22b30f" stroke-width="1.2"/>
<path d="M1581.5,326.5 H1583.5" stroke="#000" stroke-width="1.2"/>
<path d="M1550.0,323.9 L1551.2,323.9 L1552.0,324.9 L1553.2,324.9 L1553.9,325.9 L1555.2,325.9 L1555.2,327.1 L1552.0,327.1 L1552.0,328.1 L1550.0,328.1 Z" fill="#000"/>
<path d="M1551.5,346.5 L1583.5,346.5" fill="none" stroke="#22b30f" stroke-width="1.2"/>
<path d="M1581.5,346.5 H1583.5" stroke="#000" stroke-width="1.2"/>
<path d="M1550.0,343.9 L1551.2,343.9 L1552.0,344.9 L1553.2,344.9 L1553.9,345.9 L1555.2,345.9 L1555.2,347.1 L1552.0,347.1 L1552.0,348.1 L1550.0,348.1 Z" fill="#000"/>
<path d="M1547.5,351.5 L1583.5,351.5" fill="none" stroke="#22b30f" stroke-width="1.2"/>
<path d="M1581.5,351.5 H1583.5" stroke="#000" stroke-width="1.2"/>
<path d="M1546.0,348.9 L1547.2,348.9 L1548.0,349.9 L1549.2,349.9 L1549.9,350.9 L1551.2,350.9 L1551.2,352.1 L1548.0,352.1 L1548.0,353.1 L1546.0,353.1 Z" fill="#000"/>
<path d="M1547.5,380.5 L1583.5,380.5" fill="none" stroke="#22b30f" stroke-width="1.2"/>
<path d="M1581.5,380.5 H1583.5" stroke="#000" stroke-width="1.2"/>
<path d="M1546.0,377.9 L1547.2,377.9 L1548.0,378.9 L1549.2,378.9 L1549.9,379.9 L1551.2,379.9 L1551.2,381.1 L1548.0,381.1 L1548.0,382.1 L1546.0,382.1 Z" fill="#000"/>
<path d="M1551.5,409.5 L1583.5,409.5" fill="none" stroke="#22b30f" stroke-width="1.2"/>
<path d="M1581.5,409.5 H1583.5" stroke="#000" stroke-width="1.2"/>
<path d="M1550.0,406.9 L1551.2,406.9 L1552.0,407.9 L1553.2,407.9 L1553.9,408.9 L1555.2,408.9 L1555.2,410.1 L1552.0,410.1 L1552.0,411.1 L1550.0,411.1 Z" fill="#000"/>
<path d="M1547.5,418.5 L1583.5,418.5" fill="none" stroke="#22b30f" stroke-width="1.2"/>
<path d="M1581.5,418.5 H1583.5" stroke="#000" stroke-width="1.2"/>
<path d="M1546.0,415.9 L1547.2,415.9 L1548.0,416.9 L1549.2,416.9 L1549.9,417.9 L1551.2,417.9 L1551.2,419.1 L1548.0,419.1 L1548.0,420.1 L1546.0,420.1 Z" fill="#000"/>
<path d="M1551.5,423.5 L1583.5,423.5" fill="none" stroke="#22b30f" stroke-width="1.2"/>
<path d="M1581.5,423.5 H1583.5" stroke="#000" stroke-width="1.2"/>
<path d="M1550.0,420.9 L1551.2,420.9 L1552.0,421.9 L1553.2,421.9 L1553.9,422.9 L1555.2,422.9 L1555.2,424.1 L1552.0,424.1 L1552.0,425.1 L1550.0,425.1 Z" fill="#000"/>
<path d="M1547.5,439.5 L1583.5,439.5" fill="none" stroke="#22b30f" stroke-width="1.2"/>
<path d="M1581.5,439.5 H1583.5" stroke="#000" stroke-width="1.2"/>
<path d="M1546.0,436.9 L1547.2,436.9 L1548.0,437.9 L1549.2,437.9 L1549.9,438.9 L1551.2,438.9 L1551.2,440.1 L1548.0,440.1 L1548.0,441.1 L1546.0,441.1 Z" fill="#000"/>
<path d="M1551.5,443.5 L1583.5,443.5" fill="none" stroke="#22b30f" stroke-width="1.2"/>
<path d="M1581.5,443.5 H1583.5" stroke="#000" stroke-width="1.2"/>
<path d="M1550.0,440.9 L1551.2,440.9 L1552.0,441.9 L1553.2,441.9 L1553.9,442.9 L1555.2,442.9 L1555.2,444.1 L1552.0,444.1 L1552.0,445.1 L1550.0,445.1 Z" fill="#000"/>
<path d="M1551.5,452.5 L1583.5,452.5" fill="none" stroke="#22b30f" stroke-width="1.2"/>
<path d="M1581.5,452.5 H1583.5" stroke="#000" stroke-width="1.2"/>
<path d="M1550.0,449.9 L1551.2,449.9 L1552.0,450.9 L1553.2,450.9 L1553.9,451.9 L1555.2,451.9 L1555.2,453.1 L1552.0,453.1 L1552.0,454.1 L1550.0,454.1 Z" fill="#000"/>
<path d="M1551.5,473.5 L1583.5,473.5" fill="none" stroke="#22b30f" stroke-width="1.2"/>
<path d="M1581.5,473.5 H1583.5" stroke="#000" stroke-width="1.2"/>
<path d="M1550.0,470.9 L1551.2,470.9 L1552.0,471.9 L1553.2,471.9 L1553.9,472.9 L1555.2,472.9 L1555.2,474.1 L1552.0,474.1 L1552.0,475.1 L1550.0,475.1 Z" fill="#000"/>
<path d="M1547.5,477.5 L1583.5,477.5" fill="none" stroke="#22b30f" stroke-width="1.2"/>
<path d="M1581.5,477.5 H1583.5" stroke="#000" stroke-width="1.2"/>
<path d="M1546.0,474.9 L1547.2,474.9 L1548.0,475.9 L1549.2,475.9 L1549.9,476.9 L1551.2,476.9 L1551.2,478.1 L1548.0,478.1 L1548.0,479.1 L1546.0,479.1 Z" fill="#000"/>
<path d="M1551.5,482.5 L1583.5,482.5" fill="none" stroke="#22b30f" stroke-width="1.2"/>
<path d="M1581.5,482.5 H1583.5" stroke="#000" stroke-width="1.2"/>
<path d="M1550.0,479.9 L1551.2,479.9 L1552.0,480.9 L1553.2,480.9 L1553.9,481.9 L1555.2,481.9 L1555.2,483.1 L1552.0,483.1 L1552.0,484.1 L1550.0,484.1 Z" fill="#000"/>
<path d="M1547.5,486.5 L1583.5,486.5" fill="none" stroke="#22b30f" stroke-width="1.2"/>
<path d="M1581.5,486.5 H1583.5" stroke="#000" stroke-width="1.2"/>
<path d="M1546.0,483.9 L1547.2,483.9 L1548.0,484.9 L1549.2,484.9 L1549.9,485.9 L1551.2,485.9 L1551.2,487.1 L1548.0,487.1 L1548.0,488.1 L1546.0,488.1 Z" fill="#000"/>
<path d="M1551.5,491.5 L1583.5,491.5" fill="none" stroke="#22b30f" stroke-width="1.2"/>
<path d="M1581.5,491.5 H1583.5" stroke="#000" stroke-width="1.2"/>
<path d="M1550.0,488.9 L1551.2,488.9 L1552.0,489.9 L1553.2,489.9 L1553.9,490.9 L1555.2,490.9 L1555.2,492.1 L1552.0,492.1 L1552.0,493.1 L1550.0,493.1 Z" fill="#000"/>
<path d="M1547.5,495.5 L1583.5,495.5" fill="none" stroke="#22b30f" stroke-width="1.2"/>
<path d="M1581.5,495.5 H1583.5" stroke="#000" stroke-width="1.2"/>
<path d="M1546.0,492.9 L1547.2,492.9 L1548.0,493.9 L1549.2,493.9 L1549.9,494.9 L1551.2,494.9 L1551.2,496.1 L1548.0,496.1 L1548.0,497.1 L1546.0,497.1 Z" fill="#000"/>
<path d="M1547.5,511.5 L1583.5,511.5" fill="none" stroke="#22b30f" stroke-width="1.2"/>
<path d="M1581.5,511.5 H1583.5" stroke="#000" stroke-width="1.2"/>
<path d="M1546.0,508.9 L1547.2,508.9 L1548.0,509.9 L1549.2,509.9 L1549.9,510.9 L1551.2,510.9 L1551.2,512.1 L1548.0,512.1 L1548.0,513.1 L1546.0,513.1 Z" fill="#000"/>
<path d="M1551.5,516.5 L1583.5,516.5" fill="none" stroke="#22b30f" stroke-width="1.2"/>
<path d="M1581.5,516.5 H1583.5" stroke="#000" stroke-width="1.2"/>
<path d="M1550.0,513.9 L1551.2,513.9 L1552.0,514.9 L1553.2,514.9 L1553.9,515.9 L1555.2,515.9 L1555.2,517.1 L1552.0,517.1 L1552.0,518.1 L1550.0,518.1 Z" fill="#000"/>
<path d="M1547.5,520.5 L1583.5,520.5" fill="none" stroke="#22b30f" stroke-width="1.2"/>
<path d="M1581.5,520.5 H1583.5" stroke="#000" stroke-width="1.2"/>
<path d="M1546.0,517.9 L1547.2,517.9 L1548.0,518.9 L1549.2,518.9 L1549.9,519.9 L1551.2,519.9 L1551.2,521.1 L1548.0,521.1 L1548.0,522.1 L1546.0,522.1 Z" fill="#000"/>
<path d="M1551.5,524.5 L1583.5,524.5" fill="none" stroke="#22b30f" stroke-width="1.2"/>
<path d="M1581.5,524.5 H1583.5" stroke="#000" stroke-width="1.2"/>
<path d="M1550.0,521.9 L1551.2,521.9 L1552.0,522.9 L1553.2,522.9 L1553.9,523.9 L1555.2,523.9 L1555.2,525.1 L1552.0,525.1 L1552.0,526.1 L1550.0,526.1 Z" fill="#000"/>
<path d="M1547.5,529.5 L1583.5,529.5" fill="none" stroke="#22b30f" stroke-width="1.2"/>
<path d="M1581.5,529.5 H1583.5" stroke="#000" stroke-width="1.2"/>
<path d="M1546.0,526.9 L1547.2,526.9 L1548.0,527.9 L1549.2,527.9 L1549.9,528.9 L1551.2,528.9 L1551.2,530.1 L1548.0,530.1 L1548.0,531.1 L1546.0,531.1 Z" fill="#000"/>
<path d="M1551.5,545.5 L1583.5,545.5" fill="none" stroke="#22b30f" stroke-width="1.2"/>
<path d="M1581.5,545.5 H1583.5" stroke="#000" stroke-width="1.2"/>
<path d="M1550.0,542.9 L1551.2,542.9 L1552.0,543.9 L1553.2,543.9 L1553.9,544.9 L1555.2,544.9 L1555.2,546.1 L1552.0,546.1 L1552.0,547.1 L1550.0,547.1 Z" fill="#000"/>
<path d="M1547.5,549.5 L1583.5,549.5" fill="none" stroke="#22b30f" stroke-width="1.2"/>
<path d="M1581.5,549.5 H1583.5" stroke="#000" stroke-width="1.2"/>
<path d="M1546.0,546.9 L1547.2,546.9 L1548.0,547.9 L1549.2,547.9 L1549.9,548.9 L1551.2,548.9 L1551.2,550.1 L1548.0,550.1 L1548.0,551.1 L1546.0,551.1 Z" fill="#000"/>
<path d="M1551.5,554.5 L1583.5,554.5" fill="none" stroke="#22b30f" stroke-width="1.2"/>
<path d="M1581.5,554.5 H1583.5" stroke="#000" stroke-width="1.2"/>
<path d="M1550.0,551.9 L1551.2,551.9 L1552.0,552.9 L1553.2,552.9 L1553.9,553.9 L1555.2,553.9 L1555.2,555.1 L1552.0,555.1 L1552.0,556.1 L1550.0,556.1 Z" fill="#000"/>
<path d="M1547.5,559.5 L1583.5,559.5" fill="none" stroke="#22b30f" stroke-width="1.2"/>
<path d="M1581.5,559.5 H1583.5" stroke="#000" stroke-width="1.2"/>
<path d="M1546.0,556.9 L1547.2,556.9 L1548.0,557.9 L1549.2,557.9 L1549.9,558.9 L1551.2,558.9 L1551.2,560.1 L1548.0,560.1 L1548.0,561.1 L1546.0,561.1 Z" fill="#000"/>
<path d="M1551.5,563.5 L1583.5,563.5" fill="none" stroke="#22b30f" stroke-width="1.2"/>
<path d="M1581.5,563.5 H1583.5" stroke="#000" stroke-width="1.2"/>
<path d="M1550.0,560.9 L1551.2,560.9 L1552.0,561.9 L1553.2,561.9 L1553.9,562.9 L1555.2,562.9 L1555.2,564.1 L1552.0,564.1 L1552.0,565.1 L1550.0,565.1 Z" fill="#000"/>
<path d="M1547.5,568.5 L1583.5,568.5" fill="none" stroke="#22b30f" stroke-width="1.2"/>
<path d="M1581.5,568.5 H1583.5" stroke="#000" stroke-width="1.2"/>
<path d="M1546.0,565.9 L1547.2,565.9 L1548.0,566.9 L1549.2,566.9 L1549.9,567.9 L1551.2,567.9 L1551.2,569.1 L1548.0,569.1 L1548.0,570.1 L1546.0,570.1 Z" fill="#000"/>
<path d="M1551.5,621.5 L1583.5,621.5" fill="none" stroke="#22b30f" stroke-width="1.2"/>
<path d="M1581.5,621.5 H1583.5" stroke="#000" stroke-width="1.2"/>
<path d="M1550.0,618.9 L1551.2,618.9 L1552.0,619.9 L1553.2,619.9 L1553.9,620.9 L1555.2,620.9 L1555.2,622.1 L1552.0,622.1 L1552.0,623.1 L1550.0,623.1 Z" fill="#000"/>
<path d="M1547.5,626.5 L1583.5,626.5" fill="none" stroke="#22b30f" stroke-width="1.2"/>
<path d="M1581.5,626.5 H1583.5" stroke="#000" stroke-width="1.2"/>
<path d="M1546.0,623.9 L1547.2,623.9 L1548.0,624.9 L1549.2,624.9 L1549.9,625.9 L1551.2,625.9 L1551.2,627.1 L1548.0,627.1 L1548.0,628.1 L1546.0,628.1 Z" fill="#000"/>
<path d="M1551.5,631.5 L1583.5,631.5" fill="none" stroke="#22b30f" stroke-width="1.2"/>
<path d="M1581.5,631.5 H1583.5" stroke="#000" stroke-width="1.2"/>
<path d="M1550.0,628.9 L1551.2,628.9 L1552.0,629.9 L1553.2,629.9 L1553.9,630.9 L1555.2,630.9 L1555.2,632.1 L1552.0,632.1 L1552.0,633.1 L1550.0,633.1 Z" fill="#000"/>
<path d="M1547.5,636.5 L1583.5,636.5" fill="none" stroke="#22b30f" stroke-width="1.2"/>
<path d="M1581.5,636.5 H1583.5" stroke="#000" stroke-width="1.2"/>
<path d="M1546.0,633.9 L1547.2,633.9 L1548.0,634.9 L1549.2,634.9 L1549.9,635.9 L1551.2,635.9 L1551.2,637.1 L1548.0,637.1 L1548.0,638.1 L1546.0,638.1 Z" fill="#000"/>
<path d="M1551.5,640.5 L1583.5,640.5" fill="none" stroke="#22b30f" stroke-width="1.2"/>
<path d="M1581.5,640.5 H1583.5" stroke="#000" stroke-width="1.2"/>
<path d="M1550.0,637.9 L1551.2,637.9 L1552.0,638.9 L1553.2,638.9 L1553.9,639.9 L1555.2,639.9 L1555.2,641.1 L1552.0,641.1 L1552.0,642.1 L1550.0,642.1 Z" fill="#000"/>
<path d="M1547.5,645.5 L1583.5,645.5" fill="none" stroke="#22b30f" stroke-width="1.2"/>
<path d="M1581.5,645.5 H1583.5" stroke="#000" stroke-width="1.2"/>
<path d="M1546.0,642.9 L1547.2,642.9 L1548.0,643.9 L1549.2,643.9 L1549.9,644.9 L1551.2,644.9 L1551.2,646.1 L1548.0,646.1 L1548.0,647.1 L1546.0,647.1 Z" fill="#000"/>
<path d="M1581.5,287.5 H1583.5" stroke="#000" stroke-width="1.2"/>
<path d="M1581.5,296.5 H1583.5" stroke="#000" stroke-width="1.2"/>
<path d="M1581.5,301.5 H1583.5" stroke="#000" stroke-width="1.2"/>
<path d="M1581.5,317.5 H1583.5" stroke="#000" stroke-width="1.2"/>
<path d="M1581.5,321.5 H1583.5" stroke="#000" stroke-width="1.2"/>
<path d="M1581.5,330.5 H1583.5" stroke="#000" stroke-width="1.2"/>
<path d="M1581.5,366.5 H1583.5" stroke="#000" stroke-width="1.2"/>
<path d="M1581.5,371.5 H1583.5" stroke="#000" stroke-width="1.2"/>
<path d="M1581.5,375.5 H1583.5" stroke="#000" stroke-width="1.2"/>
<path d="M1581.5,384.5 H1583.5" stroke="#000" stroke-width="1.2"/>
<path d="M1581.5,400.5 H1583.5" stroke="#000" stroke-width="1.2"/>
<path d="M1581.5,405.5 H1583.5" stroke="#000" stroke-width="1.2"/>
<path d="M1581.5,414.5 H1583.5" stroke="#000" stroke-width="1.2"/>
<path d="M1581.5,448.5 H1583.5" stroke="#000" stroke-width="1.2"/>
<path d="M1581.5,457.5 H1583.5" stroke="#000" stroke-width="1.2"/>
<path d="M1581.5,593.5 H1583.5" stroke="#000" stroke-width="1.2"/>
<path d="M1581.5,597.5 H1583.5" stroke="#000" stroke-width="1.2"/>
<rect x="1583.5" y="285.5" width="14" height="18" fill="#fffccc" stroke="#000" stroke-width="1.3"/>
<rect x="1583.5" y="314.5" width="14" height="18" fill="#fffccc" stroke="#000" stroke-width="1.3"/>
<rect x="1583.5" y="344.5" width="14" height="9" fill="#fffccc" stroke="#000" stroke-width="1.3"/>
<rect x="1583.5" y="364.5" width="14" height="23" fill="#fffccc" stroke="#000" stroke-width="1.3"/>
<rect x="1583.5" y="398.5" width="14" height="27" fill="#fffccc" stroke="#000" stroke-width="1.3"/>
<rect x="1583.5" y="436.5" width="14" height="23" fill="#fffccc" stroke="#000" stroke-width="1.3"/>
<rect x="1583.5" y="470.5" width="14" height="27" fill="#fffccc" stroke="#000" stroke-width="1.3"/>
<rect x="1583.5" y="509.5" width="14" height="23" fill="#fffccc" stroke="#000" stroke-width="1.3"/>
<rect x="1583.5" y="543.5" width="14" height="27" fill="#fffccc" stroke="#000" stroke-width="1.3"/>
<rect x="1583.5" y="620.5" width="14" height="27" fill="#fffccc" stroke="#000" stroke-width="1.3"/>
<path d="M1583.5,588.5 L1593.4,592.5 L1593.4,598.7 L1583.5,602.7 Z" fill="#fffccc" stroke="#000" stroke-width="1.2"/>
<path d="M1597.5,292.5 L1639.5,292.5" fill="none" stroke="#22b30f" stroke-width="1.2"/>
<path d="M1635.5,291.9 L1637.8,290.7 L1640.2,290.7 L1640.2,294.3 L1637.8,294.3 L1635.5,293.1 Z" fill="#000"/>
<path d="M1597.5,321.5 L1639.5,321.5" fill="none" stroke="#22b30f" stroke-width="1.2"/>
<path d="M1635.5,320.9 L1637.8,319.7 L1640.2,319.7 L1640.2,323.3 L1637.8,323.3 L1635.5,322.1 Z" fill="#000"/>
<path d="M1597.5,346.5 L1639.5,346.5" fill="none" stroke="#22b30f" stroke-width="1.2"/>
<path d="M1635.5,345.9 L1637.8,344.7 L1640.2,344.7 L1640.2,348.3 L1637.8,348.3 L1635.5,347.1 Z" fill="#000"/>
<path d="M1597.5,375.5 L1634.5,375.5" fill="none" stroke="#22b30f" stroke-width="1.2"/>
<path d="M1630.5,374.9 L1632.8,373.7 L1635.2,373.7 L1635.2,377.3 L1632.8,377.3 L1630.5,376.1 Z" fill="#000"/>
<path d="M1597.5,409.5 L1634.5,409.5" fill="none" stroke="#22b30f" stroke-width="1.2"/>
<path d="M1630.5,408.9 L1632.8,407.7 L1635.2,407.7 L1635.2,411.3 L1632.8,411.3 L1630.5,410.1 Z" fill="#000"/>
<path d="M1597.5,448.5 L1634.5,448.5" fill="none" stroke="#22b30f" stroke-width="1.2"/>
<path d="M1630.5,447.9 L1632.8,446.7 L1635.2,446.7 L1635.2,450.3 L1632.8,450.3 L1630.5,449.1 Z" fill="#000"/>
<path d="M1597.5,482.5 L1634.5,482.5" fill="none" stroke="#22b30f" stroke-width="1.2"/>
<path d="M1630.5,481.9 L1632.8,480.7 L1635.2,480.7 L1635.2,484.3 L1632.8,484.3 L1630.5,483.1 Z" fill="#000"/>
<path d="M1639,292 L1639,536 L1660,536" fill="none" stroke="#0b850b" stroke-width="2.2"/>
<path d="M1634,374 L1634,541 L1660,541" fill="none" stroke="#0b850b" stroke-width="2.2"/>
<path d="M1597.5,520.5 L1630.5,520.5 L1630.5,605.5 L1660.5,605.5" fill="none" stroke="#22b30f" stroke-width="1.2"/>
<path d="M1630.5,559.5 L1660.5,559.5" fill="none" stroke="#22b30f" stroke-width="1.2"/>
<circle cx="1630.5" cy="559.5" r="2.0" fill="#22b30f"/>
<path d="M1597.5,554.5 L1621.5,554.5 L1621.5,602.5 L1660.5,602.5" fill="none" stroke="#22b30f" stroke-width="1.2"/>
<path d="M1621.5,563.5 L1660.5,563.5" fill="none" stroke="#22b30f" stroke-width="1.2"/>
<circle cx="1621.5" cy="563.5" r="2.0" fill="#22b30f"/>
<path d="M1593.5,595.5 L1612.5,595.5 L1612.5,597.5 L1660.5,597.5" fill="none" stroke="#22b30f" stroke-width="1.2"/>
<path d="M1597.5,631.5 L1639.5,631.5 L1639.5,615.5 L1660.5,615.5" fill="none" stroke="#22b30f" stroke-width="1.2"/>
<path d="M1588.5,602.5 L1588.5,608.5" fill="none" stroke="#22b30f" stroke-width="1.2"/>
<path d="M1551,608 L1626,608" fill="none" stroke="#0b850b" stroke-width="2.2"/>
<circle cx="1551" cy="608" r="2.6" fill="#0b850b"/>
<circle cx="1626" cy="608" r="2.6" fill="#0b850b"/>
<path d="M1547,613 L1617,613" fill="none" stroke="#0b850b" stroke-width="2.2"/>
<circle cx="1547" cy="613" r="2.6" fill="#0b850b"/>
<circle cx="1617" cy="613" r="2.6" fill="#0b850b"/>
<path d="M1617,567 L1617,620" fill="none" stroke="#0b850b" stroke-width="2.2"/>
<path d="M1626,576 L1626,611" fill="none" stroke="#0b850b" stroke-width="2.2"/>
<path d="M1617.5,568.5 L1660.5,568.5" fill="none" stroke="#22b30f" stroke-width="1.2"/>
<path d="M1658.5,568.5 H1660.5" stroke="#000" stroke-width="1.2"/>
<path d="M1616.0,565.9 L1617.2,565.9 L1618.0,566.9 L1619.2,566.9 L1619.9,567.9 L1621.2,567.9 L1621.2,569.1 L1618.0,569.1 L1618.0,570.1 L1616.0,570.1 Z" fill="#000"/>
<path d="M1626.5,577.5 L1660.5,577.5" fill="none" stroke="#22b30f" stroke-width="1.2"/>
<path d="M1658.5,577.5 H1660.5" stroke="#000" stroke-width="1.2"/>
<path d="M1625.0,574.9 L1626.2,574.9 L1627.0,575.9 L1628.2,575.9 L1628.9,576.9 L1630.2,576.9 L1630.2,578.1 L1627.0,578.1 L1627.0,579.1 L1625.0,579.1 Z" fill="#000"/>
<path d="M1626.5,611.5 L1660.5,611.5" fill="none" stroke="#22b30f" stroke-width="1.2"/>
<path d="M1658.5,611.5 H1660.5" stroke="#000" stroke-width="1.2"/>
<path d="M1625.0,608.9 L1626.2,608.9 L1627.0,609.9 L1628.2,609.9 L1628.9,610.9 L1630.2,610.9 L1630.2,612.1 L1627.0,612.1 L1627.0,613.1 L1625.0,613.1 Z" fill="#000"/>
<path d="M1617.5,620.5 L1660.5,620.5" fill="none" stroke="#22b30f" stroke-width="1.2"/>
<path d="M1658.5,620.5 H1660.5" stroke="#000" stroke-width="1.2"/>
<path d="M1616.0,617.9 L1617.2,617.9 L1618.0,618.9 L1619.2,618.9 L1619.9,619.9 L1621.2,619.9 L1621.2,621.1 L1618.0,621.1 L1618.0,622.1 L1616.0,622.1 Z" fill="#000"/>
<path d="M1658.5,559.5 H1660.5" stroke="#000" stroke-width="1.2"/>
<path d="M1658.5,563.5 H1660.5" stroke="#000" stroke-width="1.2"/>
<path d="M1658.5,572.5 H1660.5" stroke="#000" stroke-width="1.2"/>
<path d="M1658.5,581.5 H1660.5" stroke="#000" stroke-width="1.2"/>
<path d="M1658.5,597.5 H1660.5" stroke="#000" stroke-width="1.2"/>
<path d="M1658.5,602.5 H1660.5" stroke="#000" stroke-width="1.2"/>
<path d="M1658.5,605.5 H1660.5" stroke="#000" stroke-width="1.2"/>
<path d="M1658.5,615.5 H1660.5" stroke="#000" stroke-width="1.2"/>
<path d="M1644.5,527.5 L1644.5,550.5" fill="none" stroke="#22b30f" stroke-width="1.2"/>
<circle cx="1644.5" cy="531.5" r="2.0" fill="#22b30f"/>
<path d="M1644.5,527.5 L1660.5,527.5" fill="none" stroke="#22b30f" stroke-width="1.2"/>
<path d="M1644.5,531.5 L1660.5,531.5" fill="none" stroke="#22b30f" stroke-width="1.2"/>
<path d="M1641.5,550.5 Q1644.5,554.5 1648.5,550.5" fill="none" stroke="#000" stroke-width="1.3"/>
<rect x="1660.5" y="525.5" width="28" height="18" fill="#fffccc" stroke="#000" stroke-width="1.3"/>
<rect x="1660.5" y="556.5" width="14" height="27" fill="#fffccc" stroke="#000" stroke-width="1.3"/>
<rect x="1660.5" y="595.5" width="14" height="27" fill="#fffccc" stroke="#000" stroke-width="1.3"/>
<path d="M1674.5,568.5 L1690.5,568.5" fill="none" stroke="#22b30f" stroke-width="1.2"/>
<path d="M1674.5,606.5 L1690.5,606.5" fill="none" stroke="#22b30f" stroke-width="1.2"/>
<path d="M1415.5,757.5 H1760.0 L1761.5,759.0 V1167.5 H1415.5 Z" fill="#f9f9f9" stroke="#000" stroke-width="1.3"/>
<rect x="1416" y="758" width="4" height="4" fill="#2f5597"/>
<path d="M1410,771 L1427,771" fill="none" stroke="#0b850b" stroke-width="2.2"/>
<path d="M1410,775 L1422,775" fill="none" stroke="#0b850b" stroke-width="2.2"/>
<path d="M1426.0,768.9 L1427.2,768.9 L1428.0,769.9 L1429.2,769.9 L1429.9,770.9 L1431.2,770.9 L1431.2,772.1 L1428.0,772.1 L1428.0,773.1 L1426.0,773.1 Z" fill="#000"/>
<path d="M1421.0,771.9 L1422.2,771.9 L1423.0,772.9 L1424.2,772.9 L1424.9,773.9 L1426.2,773.9 L1426.2,775.1 L1423.0,775.1 L1423.0,776.1 L1421.0,776.1 Z" fill="#000"/>
<path d="M1422,769 L1422,989" fill="none" stroke="#0b850b" stroke-width="2.2"/>
<path d="M1427,765 L1427,984" fill="none" stroke="#0b850b" stroke-width="2.2"/>
<path d="M1427.5,766.5 L1443.5,766.5" fill="none" stroke="#22b30f" stroke-width="1.2"/>
<path d="M1441.5,766.5 H1443.5" stroke="#000" stroke-width="1.2"/>
<path d="M1426.0,763.9 L1427.2,763.9 L1428.0,764.9 L1429.2,764.9 L1429.9,765.9 L1431.2,765.9 L1431.2,767.1 L1428.0,767.1 L1428.0,768.1 L1426.0,768.1 Z" fill="#000"/>
<path d="M1422.5,771.5 L1443.5,771.5" fill="none" stroke="#22b30f" stroke-width="1.2"/>
<path d="M1441.5,771.5 H1443.5" stroke="#000" stroke-width="1.2"/>
<path d="M1421.0,768.9 L1422.2,768.9 L1423.0,769.9 L1424.2,769.9 L1424.9,770.9 L1426.2,770.9 L1426.2,772.1 L1423.0,772.1 L1423.0,773.1 L1421.0,773.1 Z" fill="#000"/>
<path d="M1427.5,775.5 L1443.5,775.5" fill="none" stroke="#22b30f" stroke-width="1.2"/>
<path d="M1441.5,775.5 H1443.5" stroke="#000" stroke-width="1.2"/>
<path d="M1426.0,772.9 L1427.2,772.9 L1428.0,773.9 L1429.2,773.9 L1429.9,774.9 L1431.2,774.9 L1431.2,776.1 L1428.0,776.1 L1428.0,777.1 L1426.0,777.1 Z" fill="#000"/>
<path d="M1422.5,780.5 L1443.5,780.5" fill="none" stroke="#22b30f" stroke-width="1.2"/>
<path d="M1441.5,780.5 H1443.5" stroke="#000" stroke-width="1.2"/>
<path d="M1421.0,777.9 L1422.2,777.9 L1423.0,778.9 L1424.2,778.9 L1424.9,779.9 L1426.2,779.9 L1426.2,781.1 L1423.0,781.1 L1423.0,782.1 L1421.0,782.1 Z" fill="#000"/>
<path d="M1427.5,784.5 L1443.5,784.5" fill="none" stroke="#22b30f" stroke-width="1.2"/>
<path d="M1441.5,784.5 H1443.5" stroke="#000" stroke-width="1.2"/>
<path d="M1426.0,781.9 L1427.2,781.9 L1428.0,782.9 L1429.2,782.9 L1429.9,783.9 L1431.2,783.9 L1431.2,785.1 L1428.0,785.1 L1428.0,786.1 L1426.0,786.1 Z" fill="#000"/>
<path d="M1422.5,789.5 L1443.5,789.5" fill="none" stroke="#22b30f" stroke-width="1.2"/>
<path d="M1441.5,789.5 H1443.5" stroke="#000" stroke-width="1.2"/>
<path d="M1421.0,786.9 L1422.2,786.9 L1423.0,787.9 L1424.2,787.9 L1424.9,788.9 L1426.2,788.9 L1426.2,790.1 L1423.0,790.1 L1423.0,791.1 L1421.0,791.1 Z" fill="#000"/>
<rect x="1443.5" y="764.5" width="14" height="27" fill="#fffccc" stroke="#000" stroke-width="1.3"/>
<path d="M1427.5,804.5 L1443.5,804.5" fill="none" stroke="#22b30f" stroke-width="1.2"/>
<path d="M1441.5,804.5 H1443.5" stroke="#000" stroke-width="1.2"/>
<path d="M1426.0,801.9 L1427.2,801.9 L1428.0,802.9 L1429.2,802.9 L1429.9,803.9 L1431.2,803.9 L1431.2,805.1 L1428.0,805.1 L1428.0,806.1 L1426.0,806.1 Z" fill="#000"/>
<path d="M1422.5,809.5 L1443.5,809.5" fill="none" stroke="#22b30f" stroke-width="1.2"/>
<path d="M1441.5,809.5 H1443.5" stroke="#000" stroke-width="1.2"/>
<path d="M1421.0,806.9 L1422.2,806.9 L1423.0,807.9 L1424.2,807.9 L1424.9,808.9 L1426.2,808.9 L1426.2,810.1 L1423.0,810.1 L1423.0,811.1 L1421.0,811.1 Z" fill="#000"/>
<path d="M1427.5,813.5 L1443.5,813.5" fill="none" stroke="#22b30f" stroke-width="1.2"/>
<path d="M1441.5,813.5 H1443.5" stroke="#000" stroke-width="1.2"/>
<path d="M1426.0,810.9 L1427.2,810.9 L1428.0,811.9 L1429.2,811.9 L1429.9,812.9 L1431.2,812.9 L1431.2,814.1 L1428.0,814.1 L1428.0,815.1 L1426.0,815.1 Z" fill="#000"/>
<path d="M1422.5,818.5 L1443.5,818.5" fill="none" stroke="#22b30f" stroke-width="1.2"/>
<path d="M1441.5,818.5 H1443.5" stroke="#000" stroke-width="1.2"/>
<path d="M1421.0,815.9 L1422.2,815.9 L1423.0,816.9 L1424.2,816.9 L1424.9,817.9 L1426.2,817.9 L1426.2,819.1 L1423.0,819.1 L1423.0,820.1 L1421.0,820.1 Z" fill="#000"/>
<path d="M1427.5,822.5 L1443.5,822.5" fill="none" stroke="#22b30f" stroke-width="1.2"/>
<path d="M1441.5,822.5 H1443.5" stroke="#000" stroke-width="1.2"/>
<path d="M1426.0,819.9 L1427.2,819.9 L1428.0,820.9 L1429.2,820.9 L1429.9,821.9 L1431.2,821.9 L1431.2,823.1 L1428.0,823.1 L1428.0,824.1 L1426.0,824.1 Z" fill="#000"/>
<path d="M1422.5,827.5 L1443.5,827.5" fill="none" stroke="#22b30f" stroke-width="1.2"/>
<path d="M1441.5,827.5 H1443.5" stroke="#000" stroke-width="1.2"/>
<path d="M1421.0,824.9 L1422.2,824.9 L1423.0,825.9 L1424.2,825.9 L1424.9,826.9 L1426.2,826.9 L1426.2,828.1 L1423.0,828.1 L1423.0,829.1 L1421.0,829.1 Z" fill="#000"/>
<rect x="1443.5" y="802.5" width="14" height="27" fill="#fffccc" stroke="#000" stroke-width="1.3"/>
<path d="M1427.5,843.5 L1443.5,843.5" fill="none" stroke="#22b30f" stroke-width="1.2"/>
<path d="M1441.5,843.5 H1443.5" stroke="#000" stroke-width="1.2"/>
<path d="M1426.0,840.9 L1427.2,840.9 L1428.0,841.9 L1429.2,841.9 L1429.9,842.9 L1431.2,842.9 L1431.2,844.1 L1428.0,844.1 L1428.0,845.1 L1426.0,845.1 Z" fill="#000"/>
<path d="M1422.5,848.5 L1443.5,848.5" fill="none" stroke="#22b30f" stroke-width="1.2"/>
<path d="M1441.5,848.5 H1443.5" stroke="#000" stroke-width="1.2"/>
<path d="M1421.0,845.9 L1422.2,845.9 L1423.0,846.9 L1424.2,846.9 L1424.9,847.9 L1426.2,847.9 L1426.2,849.1 L1423.0,849.1 L1423.0,850.1 L1421.0,850.1 Z" fill="#000"/>
<path d="M1427.5,852.5 L1443.5,852.5" fill="none" stroke="#22b30f" stroke-width="1.2"/>
<path d="M1441.5,852.5 H1443.5" stroke="#000" stroke-width="1.2"/>
<path d="M1426.0,849.9 L1427.2,849.9 L1428.0,850.9 L1429.2,850.9 L1429.9,851.9 L1431.2,851.9 L1431.2,853.1 L1428.0,853.1 L1428.0,854.1 L1426.0,854.1 Z" fill="#000"/>
<path d="M1422.5,857.5 L1443.5,857.5" fill="none" stroke="#22b30f" stroke-width="1.2"/>
<path d="M1441.5,857.5 H1443.5" stroke="#000" stroke-width="1.2"/>
<path d="M1421.0,854.9 L1422.2,854.9 L1423.0,855.9 L1424.2,855.9 L1424.9,856.9 L1426.2,856.9 L1426.2,858.1 L1423.0,858.1 L1423.0,859.1 L1421.0,859.1 Z" fill="#000"/>
<path d="M1427.5,861.5 L1443.5,861.5" fill="none" stroke="#22b30f" stroke-width="1.2"/>
<path d="M1441.5,861.5 H1443.5" stroke="#000" stroke-width="1.2"/>
<path d="M1426.0,858.9 L1427.2,858.9 L1428.0,859.9 L1429.2,859.9 L1429.9,860.9 L1431.2,860.9 L1431.2,862.1 L1428.0,862.1 L1428.0,863.1 L1426.0,863.1 Z" fill="#000"/>
<path d="M1422.5,866.5 L1443.5,866.5" fill="none" stroke="#22b30f" stroke-width="1.2"/>
<path d="M1441.5,866.5 H1443.5" stroke="#000" stroke-width="1.2"/>
<path d="M1421.0,863.9 L1422.2,863.9 L1423.0,864.9 L1424.2,864.9 L1424.9,865.9 L1426.2,865.9 L1426.2,867.1 L1423.0,867.1 L1423.0,868.1 L1421.0,868.1 Z" fill="#000"/>
<rect x="1443.5" y="841.5" width="14" height="27" fill="#fffccc" stroke="#000" stroke-width="1.3"/>
<path d="M1427.5,881.5 L1443.5,881.5" fill="none" stroke="#22b30f" stroke-width="1.2"/>
<path d="M1441.5,881.5 H1443.5" stroke="#000" stroke-width="1.2"/>
<path d="M1426.0,878.9 L1427.2,878.9 L1428.0,879.9 L1429.2,879.9 L1429.9,880.9 L1431.2,880.9 L1431.2,882.1 L1428.0,882.1 L1428.0,883.1 L1426.0,883.1 Z" fill="#000"/>
<path d="M1422.5,886.5 L1443.5,886.5" fill="none" stroke="#22b30f" stroke-width="1.2"/>
<path d="M1441.5,886.5 H1443.5" stroke="#000" stroke-width="1.2"/>
<path d="M1421.0,883.9 L1422.2,883.9 L1423.0,884.9 L1424.2,884.9 L1424.9,885.9 L1426.2,885.9 L1426.2,887.1 L1423.0,887.1 L1423.0,888.1 L1421.0,888.1 Z" fill="#000"/>
<path d="M1427.5,890.5 L1443.5,890.5" fill="none" stroke="#22b30f" stroke-width="1.2"/>
<path d="M1441.5,890.5 H1443.5" stroke="#000" stroke-width="1.2"/>
<path d="M1426.0,887.9 L1427.2,887.9 L1428.0,888.9 L1429.2,888.9 L1429.9,889.9 L1431.2,889.9 L1431.2,891.1 L1428.0,891.1 L1428.0,892.1 L1426.0,892.1 Z" fill="#000"/>
<path d="M1422.5,895.5 L1443.5,895.5" fill="none" stroke="#22b30f" stroke-width="1.2"/>
<path d="M1441.5,895.5 H1443.5" stroke="#000" stroke-width="1.2"/>
<path d="M1421.0,892.9 L1422.2,892.9 L1423.0,893.9 L1424.2,893.9 L1424.9,894.9 L1426.2,894.9 L1426.2,896.1 L1423.0,896.1 L1423.0,897.1 L1421.0,897.1 Z" fill="#000"/>
<path d="M1427.5,899.5 L1443.5,899.5" fill="none" stroke="#22b30f" stroke-width="1.2"/>
<path d="M1441.5,899.5 H1443.5" stroke="#000" stroke-width="1.2"/>
<path d="M1426.0,896.9 L1427.2,896.9 L1428.0,897.9 L1429.2,897.9 L1429.9,898.9 L1431.2,898.9 L1431.2,900.1 L1428.0,900.1 L1428.0,901.1 L1426.0,901.1 Z" fill="#000"/>
<path d="M1422.5,904.5 L1443.5,904.5" fill="none" stroke="#22b30f" stroke-width="1.2"/>
<path d="M1441.5,904.5 H1443.5" stroke="#000" stroke-width="1.2"/>
<path d="M1421.0,901.9 L1422.2,901.9 L1423.0,902.9 L1424.2,902.9 L1424.9,903.9 L1426.2,903.9 L1426.2,905.1 L1423.0,905.1 L1423.0,906.1 L1421.0,906.1 Z" fill="#000"/>
<rect x="1443.5" y="879.5" width="14" height="27" fill="#fffccc" stroke="#000" stroke-width="1.3"/>
<path d="M1427.5,920.5 L1443.5,920.5" fill="none" stroke="#22b30f" stroke-width="1.2"/>
<path d="M1441.5,920.5 H1443.5" stroke="#000" stroke-width="1.2"/>
<path d="M1426.0,917.9 L1427.2,917.9 L1428.0,918.9 L1429.2,918.9 L1429.9,919.9 L1431.2,919.9 L1431.2,921.1 L1428.0,921.1 L1428.0,922.1 L1426.0,922.1 Z" fill="#000"/>
<path d="M1422.5,925.5 L1443.5,925.5" fill="none" stroke="#22b30f" stroke-width="1.2"/>
<path d="M1441.5,925.5 H1443.5" stroke="#000" stroke-width="1.2"/>
<path d="M1421.0,922.9 L1422.2,922.9 L1423.0,923.9 L1424.2,923.9 L1424.9,924.9 L1426.2,924.9 L1426.2,926.1 L1423.0,926.1 L1423.0,927.1 L1421.0,927.1 Z" fill="#000"/>
<path d="M1427.5,929.5 L1443.5,929.5" fill="none" stroke="#22b30f" stroke-width="1.2"/>
<path d="M1441.5,929.5 H1443.5" stroke="#000" stroke-width="1.2"/>
<path d="M1426.0,926.9 L1427.2,926.9 L1428.0,927.9 L1429.2,927.9 L1429.9,928.9 L1431.2,928.9 L1431.2,930.1 L1428.0,930.1 L1428.0,931.1 L1426.0,931.1 Z" fill="#000"/>
<path d="M1422.5,934.5 L1443.5,934.5" fill="none" stroke="#22b30f" stroke-width="1.2"/>
<path d="M1441.5,934.5 H1443.5" stroke="#000" stroke-width="1.2"/>
<path d="M1421.0,931.9 L1422.2,931.9 L1423.0,932.9 L1424.2,932.9 L1424.9,933.9 L1426.2,933.9 L1426.2,935.1 L1423.0,935.1 L1423.0,936.1 L1421.0,936.1 Z" fill="#000"/>
<path d="M1427.5,938.5 L1443.5,938.5" fill="none" stroke="#22b30f" stroke-width="1.2"/>
<path d="M1441.5,938.5 H1443.5" stroke="#000" stroke-width="1.2"/>
<path d="M1426.0,935.9 L1427.2,935.9 L1428.0,936.9 L1429.2,936.9 L1429.9,937.9 L1431.2,937.9 L1431.2,939.1 L1428.0,939.1 L1428.0,940.1 L1426.0,940.1 Z" fill="#000"/>
<path d="M1422.5,943.5 L1443.5,943.5" fill="none" stroke="#22b30f" stroke-width="1.2"/>
<path d="M1441.5,943.5 H1443.5" stroke="#000" stroke-width="1.2"/>
<path d="M1421.0,940.9 L1422.2,940.9 L1423.0,941.9 L1424.2,941.9 L1424.9,942.9 L1426.2,942.9 L1426.2,944.1 L1423.0,944.1 L1423.0,945.1 L1421.0,945.1 Z" fill="#000"/>
<rect x="1443.5" y="918.5" width="14" height="27" fill="#fffccc" stroke="#000" stroke-width="1.3"/>
<path d="M1427.5,965.5 L1443.5,965.5" fill="none" stroke="#22b30f" stroke-width="1.2"/>
<path d="M1441.5,965.5 H1443.5" stroke="#000" stroke-width="1.2"/>
<path d="M1426.0,962.9 L1427.2,962.9 L1428.0,963.9 L1429.2,963.9 L1429.9,964.9 L1431.2,964.9 L1431.2,966.1 L1428.0,966.1 L1428.0,967.1 L1426.0,967.1 Z" fill="#000"/>
<path d="M1422.5,970.5 L1443.5,970.5" fill="none" stroke="#22b30f" stroke-width="1.2"/>
<path d="M1441.5,970.5 H1443.5" stroke="#000" stroke-width="1.2"/>
<path d="M1421.0,967.9 L1422.2,967.9 L1423.0,968.9 L1424.2,968.9 L1424.9,969.9 L1426.2,969.9 L1426.2,971.1 L1423.0,971.1 L1423.0,972.1 L1421.0,972.1 Z" fill="#000"/>
<path d="M1427.5,974.5 L1443.5,974.5" fill="none" stroke="#22b30f" stroke-width="1.2"/>
<path d="M1441.5,974.5 H1443.5" stroke="#000" stroke-width="1.2"/>
<path d="M1426.0,971.9 L1427.2,971.9 L1428.0,972.9 L1429.2,972.9 L1429.9,973.9 L1431.2,973.9 L1431.2,975.1 L1428.0,975.1 L1428.0,976.1 L1426.0,976.1 Z" fill="#000"/>
<path d="M1422.5,979.5 L1443.5,979.5" fill="none" stroke="#22b30f" stroke-width="1.2"/>
<path d="M1441.5,979.5 H1443.5" stroke="#000" stroke-width="1.2"/>
<path d="M1421.0,976.9 L1422.2,976.9 L1423.0,977.9 L1424.2,977.9 L1424.9,978.9 L1426.2,978.9 L1426.2,980.1 L1423.0,980.1 L1423.0,981.1 L1421.0,981.1 Z" fill="#000"/>
<path d="M1427.5,983.5 L1443.5,983.5" fill="none" stroke="#22b30f" stroke-width="1.2"/>
<path d="M1441.5,983.5 H1443.5" stroke="#000" stroke-width="1.2"/>
<path d="M1426.0,980.9 L1427.2,980.9 L1428.0,981.9 L1429.2,981.9 L1429.9,982.9 L1431.2,982.9 L1431.2,984.1 L1428.0,984.1 L1428.0,985.1 L1426.0,985.1 Z" fill="#000"/>
<path d="M1422.5,988.5 L1443.5,988.5" fill="none" stroke="#22b30f" stroke-width="1.2"/>
<path d="M1441.5,988.5 H1443.5" stroke="#000" stroke-width="1.2"/>
<path d="M1421.0,985.9 L1422.2,985.9 L1423.0,986.9 L1424.2,986.9 L1424.9,987.9 L1426.2,987.9 L1426.2,989.1 L1423.0,989.1 L1423.0,990.1 L1421.0,990.1 Z" fill="#000"/>
<rect x="1443.5" y="963.5" width="14" height="27" fill="#fffccc" stroke="#000" stroke-width="1.3"/>
<path d="M1481,819 L1481,1093" fill="none" stroke="#0b850b" stroke-width="2.2"/>
<path d="M1486,814 L1486,1088" fill="none" stroke="#0b850b" stroke-width="2.2"/>
<path d="M1422,952 L1481,952" fill="none" stroke="#0b850b" stroke-width="2.2"/>
<path d="M1427,956 L1486,956" fill="none" stroke="#0b850b" stroke-width="2.2"/>
<circle cx="1422" cy="952" r="2.6" fill="#0b850b"/>
<circle cx="1481" cy="952" r="2.6" fill="#0b850b"/>
<circle cx="1427" cy="956" r="2.6" fill="#0b850b"/>
<circle cx="1486" cy="956" r="2.6" fill="#0b850b"/>
<path d="M1486.5,816.5 L1508.5,816.5" fill="none" stroke="#22b30f" stroke-width="1.2"/>
<path d="M1506.5,816.5 H1508.5" stroke="#000" stroke-width="1.2"/>
<path d="M1485.0,813.9 L1486.2,813.9 L1487.0,814.9 L1488.2,814.9 L1488.9,815.9 L1490.2,815.9 L1490.2,817.1 L1487.0,817.1 L1487.0,818.1 L1485.0,818.1 Z" fill="#000"/>
<path d="M1481.5,821.5 L1508.5,821.5" fill="none" stroke="#22b30f" stroke-width="1.2"/>
<path d="M1506.5,821.5 H1508.5" stroke="#000" stroke-width="1.2"/>
<path d="M1480.0,818.9 L1481.2,818.9 L1482.0,819.9 L1483.2,819.9 L1483.9,820.9 L1485.2,820.9 L1485.2,822.1 L1482.0,822.1 L1482.0,823.1 L1480.0,823.1 Z" fill="#000"/>
<path d="M1486.5,825.5 L1508.5,825.5" fill="none" stroke="#22b30f" stroke-width="1.2"/>
<path d="M1506.5,825.5 H1508.5" stroke="#000" stroke-width="1.2"/>
<path d="M1485.0,822.9 L1486.2,822.9 L1487.0,823.9 L1488.2,823.9 L1488.9,824.9 L1490.2,824.9 L1490.2,826.1 L1487.0,826.1 L1487.0,827.1 L1485.0,827.1 Z" fill="#000"/>
<path d="M1481.5,830.5 L1508.5,830.5" fill="none" stroke="#22b30f" stroke-width="1.2"/>
<path d="M1506.5,830.5 H1508.5" stroke="#000" stroke-width="1.2"/>
<path d="M1480.0,827.9 L1481.2,827.9 L1482.0,828.9 L1483.2,828.9 L1483.9,829.9 L1485.2,829.9 L1485.2,831.1 L1482.0,831.1 L1482.0,832.1 L1480.0,832.1 Z" fill="#000"/>
<path d="M1486.5,834.5 L1508.5,834.5" fill="none" stroke="#22b30f" stroke-width="1.2"/>
<path d="M1506.5,834.5 H1508.5" stroke="#000" stroke-width="1.2"/>
<path d="M1485.0,831.9 L1486.2,831.9 L1487.0,832.9 L1488.2,832.9 L1488.9,833.9 L1490.2,833.9 L1490.2,835.1 L1487.0,835.1 L1487.0,836.1 L1485.0,836.1 Z" fill="#000"/>
<path d="M1481.5,839.5 L1508.5,839.5" fill="none" stroke="#22b30f" stroke-width="1.2"/>
<path d="M1506.5,839.5 H1508.5" stroke="#000" stroke-width="1.2"/>
<path d="M1480.0,836.9 L1481.2,836.9 L1482.0,837.9 L1483.2,837.9 L1483.9,838.9 L1485.2,838.9 L1485.2,840.1 L1482.0,840.1 L1482.0,841.1 L1480.0,841.1 Z" fill="#000"/>
<rect x="1508.5" y="814.5" width="14" height="27" fill="#fffccc" stroke="#000" stroke-width="1.3"/>
<path d="M1486.5,951.5 L1508.5,951.5" fill="none" stroke="#22b30f" stroke-width="1.2"/>
<path d="M1506.5,951.5 H1508.5" stroke="#000" stroke-width="1.2"/>
<path d="M1485.0,948.9 L1486.2,948.9 L1487.0,949.9 L1488.2,949.9 L1488.9,950.9 L1490.2,950.9 L1490.2,952.1 L1487.0,952.1 L1487.0,953.1 L1485.0,953.1 Z" fill="#000"/>
<path d="M1481.5,955.5 L1508.5,955.5" fill="none" stroke="#22b30f" stroke-width="1.2"/>
<path d="M1506.5,955.5 H1508.5" stroke="#000" stroke-width="1.2"/>
<path d="M1480.0,952.9 L1481.2,952.9 L1482.0,953.9 L1483.2,953.9 L1483.9,954.9 L1485.2,954.9 L1485.2,956.1 L1482.0,956.1 L1482.0,957.1 L1480.0,957.1 Z" fill="#000"/>
<path d="M1486.5,959.5 L1508.5,959.5" fill="none" stroke="#22b30f" stroke-width="1.2"/>
<path d="M1506.5,959.5 H1508.5" stroke="#000" stroke-width="1.2"/>
<path d="M1485.0,956.9 L1486.2,956.9 L1487.0,957.9 L1488.2,957.9 L1488.9,958.9 L1490.2,958.9 L1490.2,960.1 L1487.0,960.1 L1487.0,961.1 L1485.0,961.1 Z" fill="#000"/>
<path d="M1481.5,965.5 L1508.5,965.5" fill="none" stroke="#22b30f" stroke-width="1.2"/>
<path d="M1506.5,965.5 H1508.5" stroke="#000" stroke-width="1.2"/>
<path d="M1480.0,962.9 L1481.2,962.9 L1482.0,963.9 L1483.2,963.9 L1483.9,964.9 L1485.2,964.9 L1485.2,966.1 L1482.0,966.1 L1482.0,967.1 L1480.0,967.1 Z" fill="#000"/>
<path d="M1486.5,969.5 L1508.5,969.5" fill="none" stroke="#22b30f" stroke-width="1.2"/>
<path d="M1506.5,969.5 H1508.5" stroke="#000" stroke-width="1.2"/>
<path d="M1485.0,966.9 L1486.2,966.9 L1487.0,967.9 L1488.2,967.9 L1488.9,968.9 L1490.2,968.9 L1490.2,970.1 L1487.0,970.1 L1487.0,971.1 L1485.0,971.1 Z" fill="#000"/>
<path d="M1481.5,974.5 L1508.5,974.5" fill="none" stroke="#22b30f" stroke-width="1.2"/>
<path d="M1506.5,974.5 H1508.5" stroke="#000" stroke-width="1.2"/>
<path d="M1480.0,971.9 L1481.2,971.9 L1482.0,972.9 L1483.2,972.9 L1483.9,973.9 L1485.2,973.9 L1485.2,975.1 L1482.0,975.1 L1482.0,976.1 L1480.0,976.1 Z" fill="#000"/>
<rect x="1508.5" y="949.5" width="14" height="27" fill="#fffccc" stroke="#000" stroke-width="1.3"/>
<path d="M1486.5,992.5 L1508.5,992.5" fill="none" stroke="#22b30f" stroke-width="1.2"/>
<path d="M1506.5,992.5 H1508.5" stroke="#000" stroke-width="1.2"/>
<path d="M1485.0,989.9 L1486.2,989.9 L1487.0,990.9 L1488.2,990.9 L1488.9,991.9 L1490.2,991.9 L1490.2,993.1 L1487.0,993.1 L1487.0,994.1 L1485.0,994.1 Z" fill="#000"/>
<path d="M1481.5,997.5 L1508.5,997.5" fill="none" stroke="#22b30f" stroke-width="1.2"/>
<path d="M1506.5,997.5 H1508.5" stroke="#000" stroke-width="1.2"/>
<path d="M1480.0,994.9 L1481.2,994.9 L1482.0,995.9 L1483.2,995.9 L1483.9,996.9 L1485.2,996.9 L1485.2,998.1 L1482.0,998.1 L1482.0,999.1 L1480.0,999.1 Z" fill="#000"/>
<path d="M1486.5,1001.5 L1508.5,1001.5" fill="none" stroke="#22b30f" stroke-width="1.2"/>
<path d="M1506.5,1001.5 H1508.5" stroke="#000" stroke-width="1.2"/>
<path d="M1485.0,998.9 L1486.2,998.9 L1487.0,999.9 L1488.2,999.9 L1488.9,1000.9 L1490.2,1000.9 L1490.2,1002.1 L1487.0,1002.1 L1487.0,1003.1 L1485.0,1003.1 Z" fill="#000"/>
<path d="M1481.5,1006.5 L1508.5,1006.5" fill="none" stroke="#22b30f" stroke-width="1.2"/>
<path d="M1506.5,1006.5 H1508.5" stroke="#000" stroke-width="1.2"/>
<path d="M1480.0,1003.9 L1481.2,1003.9 L1482.0,1004.9 L1483.2,1004.9 L1483.9,1005.9 L1485.2,1005.9 L1485.2,1007.1 L1482.0,1007.1 L1482.0,1008.1 L1480.0,1008.1 Z" fill="#000"/>
<path d="M1486.5,1010.5 L1508.5,1010.5" fill="none" stroke="#22b30f" stroke-width="1.2"/>
<path d="M1506.5,1010.5 H1508.5" stroke="#000" stroke-width="1.2"/>
<path d="M1485.0,1007.9 L1486.2,1007.9 L1487.0,1008.9 L1488.2,1008.9 L1488.9,1009.9 L1490.2,1009.9 L1490.2,1011.1 L1487.0,1011.1 L1487.0,1012.1 L1485.0,1012.1 Z" fill="#000"/>
<path d="M1481.5,1015.5 L1508.5,1015.5" fill="none" stroke="#22b30f" stroke-width="1.2"/>
<path d="M1506.5,1015.5 H1508.5" stroke="#000" stroke-width="1.2"/>
<path d="M1480.0,1012.9 L1481.2,1012.9 L1482.0,1013.9 L1483.2,1013.9 L1483.9,1014.9 L1485.2,1014.9 L1485.2,1016.1 L1482.0,1016.1 L1482.0,1017.1 L1480.0,1017.1 Z" fill="#000"/>
<rect x="1508.5" y="990.5" width="14" height="27" fill="#fffccc" stroke="#000" stroke-width="1.3"/>
<path d="M1486.5,1031.5 L1508.5,1031.5" fill="none" stroke="#22b30f" stroke-width="1.2"/>
<path d="M1506.5,1031.5 H1508.5" stroke="#000" stroke-width="1.2"/>
<path d="M1485.0,1028.9 L1486.2,1028.9 L1487.0,1029.9 L1488.2,1029.9 L1488.9,1030.9 L1490.2,1030.9 L1490.2,1032.1 L1487.0,1032.1 L1487.0,1033.1 L1485.0,1033.1 Z" fill="#000"/>
<path d="M1481.5,1036.5 L1508.5,1036.5" fill="none" stroke="#22b30f" stroke-width="1.2"/>
<path d="M1506.5,1036.5 H1508.5" stroke="#000" stroke-width="1.2"/>
<path d="M1480.0,1033.9 L1481.2,1033.9 L1482.0,1034.9 L1483.2,1034.9 L1483.9,1035.9 L1485.2,1035.9 L1485.2,1037.1 L1482.0,1037.1 L1482.0,1038.1 L1480.0,1038.1 Z" fill="#000"/>
<path d="M1486.5,1040.5 L1508.5,1040.5" fill="none" stroke="#22b30f" stroke-width="1.2"/>
<path d="M1506.5,1040.5 H1508.5" stroke="#000" stroke-width="1.2"/>
<path d="M1485.0,1037.9 L1486.2,1037.9 L1487.0,1038.9 L1488.2,1038.9 L1488.9,1039.9 L1490.2,1039.9 L1490.2,1041.1 L1487.0,1041.1 L1487.0,1042.1 L1485.0,1042.1 Z" fill="#000"/>
<path d="M1481.5,1045.5 L1508.5,1045.5" fill="none" stroke="#22b30f" stroke-width="1.2"/>
<path d="M1506.5,1045.5 H1508.5" stroke="#000" stroke-width="1.2"/>
<path d="M1480.0,1042.9 L1481.2,1042.9 L1482.0,1043.9 L1483.2,1043.9 L1483.9,1044.9 L1485.2,1044.9 L1485.2,1046.1 L1482.0,1046.1 L1482.0,1047.1 L1480.0,1047.1 Z" fill="#000"/>
<path d="M1486.5,1049.5 L1508.5,1049.5" fill="none" stroke="#22b30f" stroke-width="1.2"/>
<path d="M1506.5,1049.5 H1508.5" stroke="#000" stroke-width="1.2"/>
<path d="M1485.0,1046.9 L1486.2,1046.9 L1487.0,1047.9 L1488.2,1047.9 L1488.9,1048.9 L1490.2,1048.9 L1490.2,1050.1 L1487.0,1050.1 L1487.0,1051.1 L1485.0,1051.1 Z" fill="#000"/>
<path d="M1481.5,1054.5 L1508.5,1054.5" fill="none" stroke="#22b30f" stroke-width="1.2"/>
<path d="M1506.5,1054.5 H1508.5" stroke="#000" stroke-width="1.2"/>
<path d="M1480.0,1051.9 L1481.2,1051.9 L1482.0,1052.9 L1483.2,1052.9 L1483.9,1053.9 L1485.2,1053.9 L1485.2,1055.1 L1482.0,1055.1 L1482.0,1056.1 L1480.0,1056.1 Z" fill="#000"/>
<rect x="1508.5" y="1029.5" width="14" height="27" fill="#fffccc" stroke="#000" stroke-width="1.3"/>
<path d="M1486.5,1069.5 L1508.5,1069.5" fill="none" stroke="#22b30f" stroke-width="1.2"/>
<path d="M1506.5,1069.5 H1508.5" stroke="#000" stroke-width="1.2"/>
<path d="M1485.0,1066.9 L1486.2,1066.9 L1487.0,1067.9 L1488.2,1067.9 L1488.9,1068.9 L1490.2,1068.9 L1490.2,1070.1 L1487.0,1070.1 L1487.0,1071.1 L1485.0,1071.1 Z" fill="#000"/>
<path d="M1481.5,1074.5 L1508.5,1074.5" fill="none" stroke="#22b30f" stroke-width="1.2"/>
<path d="M1506.5,1074.5 H1508.5" stroke="#000" stroke-width="1.2"/>
<path d="M1480.0,1071.9 L1481.2,1071.9 L1482.0,1072.9 L1483.2,1072.9 L1483.9,1073.9 L1485.2,1073.9 L1485.2,1075.1 L1482.0,1075.1 L1482.0,1076.1 L1480.0,1076.1 Z" fill="#000"/>
<path d="M1486.5,1078.5 L1508.5,1078.5" fill="none" stroke="#22b30f" stroke-width="1.2"/>
<path d="M1506.5,1078.5 H1508.5" stroke="#000" stroke-width="1.2"/>
<path d="M1485.0,1075.9 L1486.2,1075.9 L1487.0,1076.9 L1488.2,1076.9 L1488.9,1077.9 L1490.2,1077.9 L1490.2,1079.1 L1487.0,1079.1 L1487.0,1080.1 L1485.0,1080.1 Z" fill="#000"/>
<path d="M1481.5,1083.5 L1508.5,1083.5" fill="none" stroke="#22b30f" stroke-width="1.2"/>
<path d="M1506.5,1083.5 H1508.5" stroke="#000" stroke-width="1.2"/>
<path d="M1480.0,1080.9 L1481.2,1080.9 L1482.0,1081.9 L1483.2,1081.9 L1483.9,1082.9 L1485.2,1082.9 L1485.2,1084.1 L1482.0,1084.1 L1482.0,1085.1 L1480.0,1085.1 Z" fill="#000"/>
<path d="M1486.5,1087.5 L1508.5,1087.5" fill="none" stroke="#22b30f" stroke-width="1.2"/>
<path d="M1506.5,1087.5 H1508.5" stroke="#000" stroke-width="1.2"/>
<path d="M1485.0,1084.9 L1486.2,1084.9 L1487.0,1085.9 L1488.2,1085.9 L1488.9,1086.9 L1490.2,1086.9 L1490.2,1088.1 L1487.0,1088.1 L1487.0,1089.1 L1485.0,1089.1 Z" fill="#000"/>
<path d="M1481.5,1092.5 L1508.5,1092.5" fill="none" stroke="#22b30f" stroke-width="1.2"/>
<path d="M1506.5,1092.5 H1508.5" stroke="#000" stroke-width="1.2"/>
<path d="M1480.0,1089.9 L1481.2,1089.9 L1482.0,1090.9 L1483.2,1090.9 L1483.9,1091.9 L1485.2,1091.9 L1485.2,1093.1 L1482.0,1093.1 L1482.0,1094.1 L1480.0,1094.1 Z" fill="#000"/>
<rect x="1508.5" y="1067.5" width="14" height="27" fill="#fffccc" stroke="#000" stroke-width="1.3"/>
<path d="M1508.5,854.5 L1518.3,858.6 L1518.3,865.0 L1508.5,869.1 Z" fill="#fffccc" stroke="#000" stroke-width="1.2"/>
<path d="M1508.5,881.5 L1518.3,885.6 L1518.3,892.0 L1508.5,896.1 Z" fill="#fffccc" stroke="#000" stroke-width="1.2"/>
<path d="M1508.5,922.5 L1518.3,926.6 L1518.3,933.0 L1508.5,937.1 Z" fill="#fffccc" stroke="#000" stroke-width="1.2"/>
<path d="M1481,875 L1551,875" fill="none" stroke="#0b850b" stroke-width="2.2"/>
<circle cx="1481" cy="875" r="2.6" fill="#0b850b"/>
<circle cx="1551" cy="875" r="2.6" fill="#0b850b"/>
<path d="M1513.5,868.5 L1513.5,875.5" fill="none" stroke="#22b30f" stroke-width="1.2"/>
<path d="M1481,902 L1513,902" fill="none" stroke="#0b850b" stroke-width="2.2"/>
<circle cx="1481" cy="902" r="2.6" fill="#0b850b"/>
<path d="M1513.5,895.5 L1513.5,901.5" fill="none" stroke="#22b30f" stroke-width="1.2"/>
<path d="M1481,943 L1513,943" fill="none" stroke="#0b850b" stroke-width="2.2"/>
<circle cx="1481" cy="943" r="2.6" fill="#0b850b"/>
<path d="M1513.5,936.5 L1513.5,943.5" fill="none" stroke="#22b30f" stroke-width="1.2"/>
<path d="M1486,983 L1547,983" fill="none" stroke="#0b850b" stroke-width="2.2"/>
<circle cx="1486" cy="983" r="2.6" fill="#0b850b"/>
<circle cx="1547" cy="983" r="2.6" fill="#0b850b"/>
<path d="M1547,863 L1547,1159" fill="none" stroke="#0b850b" stroke-width="2.2"/>
<path d="M1551,804 L1551,1154" fill="none" stroke="#0b850b" stroke-width="2.2"/>
<path d="M1457.5,775.5 L1490.5,775.5 L1490.5,859.5 L1508.5,859.5" fill="none" stroke="#22b30f" stroke-width="1.2"/>
<path d="M1490.5,800.5 L1583.5,800.5" fill="none" stroke="#22b30f" stroke-width="1.2"/>
<circle cx="1490.5" cy="800.5" r="2.0" fill="#22b30f"/>
<circle cx="1556.5" cy="800.5" r="2.0" fill="#22b30f"/>
<path d="M1556.5,800.5 L1556.5,927.5 L1583.5,927.5" fill="none" stroke="#22b30f" stroke-width="1.2"/>
<circle cx="1556.5" cy="843.5" r="2.0" fill="#22b30f"/>
<path d="M1556.5,843.5 L1583.5,843.5" fill="none" stroke="#22b30f" stroke-width="1.2"/>
<path d="M1457.5,814.5 L1477.5,814.5 L1477.5,864.5 L1508.5,864.5" fill="none" stroke="#22b30f" stroke-width="1.2"/>
<path d="M1477.5,848.5 L1560.5,848.5" fill="none" stroke="#22b30f" stroke-width="1.2"/>
<circle cx="1477.5" cy="848.5" r="2.0" fill="#22b30f"/>
<circle cx="1560.5" cy="848.5" r="2.0" fill="#22b30f"/>
<path d="M1560.5,809.5 L1583.5,809.5" fill="none" stroke="#22b30f" stroke-width="1.2"/>
<path d="M1560.5,809.5 L1560.5,918.5 L1583.5,918.5" fill="none" stroke="#22b30f" stroke-width="1.2"/>
<path d="M1560.5,834.5 L1583.5,834.5" fill="none" stroke="#22b30f" stroke-width="1.2"/>
<circle cx="1560.5" cy="834.5" r="2.0" fill="#22b30f"/>
<path d="M1457.5,852.5 L1472.5,852.5 L1472.5,887.5 L1508.5,887.5" fill="none" stroke="#22b30f" stroke-width="1.2"/>
<path d="M1457.5,891.5 L1508.5,891.5" fill="none" stroke="#22b30f" stroke-width="1.2"/>
<path d="M1457.5,929.5 L1472.5,929.5 L1472.5,927.5 L1508.5,927.5" fill="none" stroke="#22b30f" stroke-width="1.2"/>
<path d="M1457.5,974.5 L1477.5,974.5 L1477.5,931.5 L1508.5,931.5" fill="none" stroke="#22b30f" stroke-width="1.2"/>
<path d="M1522.5,825.5 L1565.5,825.5" fill="none" stroke="#22b30f" stroke-width="1.2"/>
<circle cx="1565.5" cy="825.5" r="2.0" fill="#22b30f"/>
<path d="M1565.5,814.5 L1565.5,913.5 L1583.5,913.5" fill="none" stroke="#22b30f" stroke-width="1.2"/>
<path d="M1565.5,814.5 L1583.5,814.5" fill="none" stroke="#22b30f" stroke-width="1.2"/>
<path d="M1565.5,830.5 L1583.5,830.5" fill="none" stroke="#22b30f" stroke-width="1.2"/>
<circle cx="1565.5" cy="830.5" r="2.0" fill="#22b30f"/>
<path d="M1565.5,879.5 L1583.5,879.5" fill="none" stroke="#22b30f" stroke-width="1.2"/>
<circle cx="1565.5" cy="879.5" r="2.0" fill="#22b30f"/>
<path d="M1518.5,861.5 L1538.5,861.5 L1538.5,884.5 L1583.5,884.5" fill="none" stroke="#22b30f" stroke-width="1.2"/>
<path d="M1518.5,888.5 L1583.5,888.5" fill="none" stroke="#22b30f" stroke-width="1.2"/>
<path d="M1518.5,929.5 L1538.5,929.5 L1538.5,897.5 L1583.5,897.5" fill="none" stroke="#22b30f" stroke-width="1.2"/>
<path d="M1522.5,961.5 L1583.5,961.5" fill="none" stroke="#22b30f" stroke-width="1.2"/>
<path d="M1522.5,1001.5 L1538.5,1001.5 L1538.5,970.5 L1583.5,970.5" fill="none" stroke="#22b30f" stroke-width="1.2"/>
<path d="M1522.5,1040.5 L1542.5,1040.5 L1542.5,1110.5 L1583.5,1110.5" fill="none" stroke="#22b30f" stroke-width="1.2"/>
<path d="M1542.5,1090.5 L1612.5,1090.5 L1612.5,1085.5 L1660.5,1085.5" fill="none" stroke="#22b30f" stroke-width="1.2"/>
<circle cx="1542.5" cy="1090.5" r="2.0" fill="#22b30f"/>
<path d="M1522.5,1078.5 L1538.5,1078.5 L1538.5,1106.5 L1583.5,1106.5" fill="none" stroke="#22b30f" stroke-width="1.2"/>
<path d="M1538.5,1094.5 L1660.5,1094.5" fill="none" stroke="#22b30f" stroke-width="1.2"/>
<circle cx="1538.5" cy="1094.5" r="2.0" fill="#22b30f"/>
<path d="M1551.5,805.5 L1583.5,805.5" fill="none" stroke="#22b30f" stroke-width="1.2"/>
<path d="M1581.5,805.5 H1583.5" stroke="#000" stroke-width="1.2"/>
<path d="M1550.0,802.9 L1551.2,802.9 L1552.0,803.9 L1553.2,803.9 L1553.9,804.9 L1555.2,804.9 L1555.2,806.1 L1552.0,806.1 L1552.0,807.1 L1550.0,807.1 Z" fill="#000"/>
<path d="M1551.5,839.5 L1583.5,839.5" fill="none" stroke="#22b30f" stroke-width="1.2"/>
<path d="M1581.5,839.5 H1583.5" stroke="#000" stroke-width="1.2"/>
<path d="M1550.0,836.9 L1551.2,836.9 L1552.0,837.9 L1553.2,837.9 L1553.9,838.9 L1555.2,838.9 L1555.2,840.1 L1552.0,840.1 L1552.0,841.1 L1550.0,841.1 Z" fill="#000"/>
<path d="M1551.5,859.5 L1583.5,859.5" fill="none" stroke="#22b30f" stroke-width="1.2"/>
<path d="M1581.5,859.5 H1583.5" stroke="#000" stroke-width="1.2"/>
<path d="M1550.0,856.9 L1551.2,856.9 L1552.0,857.9 L1553.2,857.9 L1553.9,858.9 L1555.2,858.9 L1555.2,860.1 L1552.0,860.1 L1552.0,861.1 L1550.0,861.1 Z" fill="#000"/>
<path d="M1547.5,864.5 L1583.5,864.5" fill="none" stroke="#22b30f" stroke-width="1.2"/>
<path d="M1581.5,864.5 H1583.5" stroke="#000" stroke-width="1.2"/>
<path d="M1546.0,861.9 L1547.2,861.9 L1548.0,862.9 L1549.2,862.9 L1549.9,863.9 L1551.2,863.9 L1551.2,865.1 L1548.0,865.1 L1548.0,866.1 L1546.0,866.1 Z" fill="#000"/>
<path d="M1547.5,893.5 L1583.5,893.5" fill="none" stroke="#22b30f" stroke-width="1.2"/>
<path d="M1581.5,893.5 H1583.5" stroke="#000" stroke-width="1.2"/>
<path d="M1546.0,890.9 L1547.2,890.9 L1548.0,891.9 L1549.2,891.9 L1549.9,892.9 L1551.2,892.9 L1551.2,894.1 L1548.0,894.1 L1548.0,895.1 L1546.0,895.1 Z" fill="#000"/>
<path d="M1551.5,922.5 L1583.5,922.5" fill="none" stroke="#22b30f" stroke-width="1.2"/>
<path d="M1581.5,922.5 H1583.5" stroke="#000" stroke-width="1.2"/>
<path d="M1550.0,919.9 L1551.2,919.9 L1552.0,920.9 L1553.2,920.9 L1553.9,921.9 L1555.2,921.9 L1555.2,923.1 L1552.0,923.1 L1552.0,924.1 L1550.0,924.1 Z" fill="#000"/>
<path d="M1547.5,931.5 L1583.5,931.5" fill="none" stroke="#22b30f" stroke-width="1.2"/>
<path d="M1581.5,931.5 H1583.5" stroke="#000" stroke-width="1.2"/>
<path d="M1546.0,928.9 L1547.2,928.9 L1548.0,929.9 L1549.2,929.9 L1549.9,930.9 L1551.2,930.9 L1551.2,932.1 L1548.0,932.1 L1548.0,933.1 L1546.0,933.1 Z" fill="#000"/>
<path d="M1551.5,936.5 L1583.5,936.5" fill="none" stroke="#22b30f" stroke-width="1.2"/>
<path d="M1581.5,936.5 H1583.5" stroke="#000" stroke-width="1.2"/>
<path d="M1550.0,933.9 L1551.2,933.9 L1552.0,934.9 L1553.2,934.9 L1553.9,935.9 L1555.2,935.9 L1555.2,937.1 L1552.0,937.1 L1552.0,938.1 L1550.0,938.1 Z" fill="#000"/>
<path d="M1547.5,952.5 L1583.5,952.5" fill="none" stroke="#22b30f" stroke-width="1.2"/>
<path d="M1581.5,952.5 H1583.5" stroke="#000" stroke-width="1.2"/>
<path d="M1546.0,949.9 L1547.2,949.9 L1548.0,950.9 L1549.2,950.9 L1549.9,951.9 L1551.2,951.9 L1551.2,953.1 L1548.0,953.1 L1548.0,954.1 L1546.0,954.1 Z" fill="#000"/>
<path d="M1551.5,956.5 L1583.5,956.5" fill="none" stroke="#22b30f" stroke-width="1.2"/>
<path d="M1581.5,956.5 H1583.5" stroke="#000" stroke-width="1.2"/>
<path d="M1550.0,953.9 L1551.2,953.9 L1552.0,954.9 L1553.2,954.9 L1553.9,955.9 L1555.2,955.9 L1555.2,957.1 L1552.0,957.1 L1552.0,958.1 L1550.0,958.1 Z" fill="#000"/>
<path d="M1551.5,965.5 L1583.5,965.5" fill="none" stroke="#22b30f" stroke-width="1.2"/>
<path d="M1581.5,965.5 H1583.5" stroke="#000" stroke-width="1.2"/>
<path d="M1550.0,962.9 L1551.2,962.9 L1552.0,963.9 L1553.2,963.9 L1553.9,964.9 L1555.2,964.9 L1555.2,966.1 L1552.0,966.1 L1552.0,967.1 L1550.0,967.1 Z" fill="#000"/>
<path d="M1551.5,986.5 L1583.5,986.5" fill="none" stroke="#22b30f" stroke-width="1.2"/>
<path d="M1581.5,986.5 H1583.5" stroke="#000" stroke-width="1.2"/>
<path d="M1550.0,983.9 L1551.2,983.9 L1552.0,984.9 L1553.2,984.9 L1553.9,985.9 L1555.2,985.9 L1555.2,987.1 L1552.0,987.1 L1552.0,988.1 L1550.0,988.1 Z" fill="#000"/>
<path d="M1547.5,990.5 L1583.5,990.5" fill="none" stroke="#22b30f" stroke-width="1.2"/>
<path d="M1581.5,990.5 H1583.5" stroke="#000" stroke-width="1.2"/>
<path d="M1546.0,987.9 L1547.2,987.9 L1548.0,988.9 L1549.2,988.9 L1549.9,989.9 L1551.2,989.9 L1551.2,991.1 L1548.0,991.1 L1548.0,992.1 L1546.0,992.1 Z" fill="#000"/>
<path d="M1551.5,995.5 L1583.5,995.5" fill="none" stroke="#22b30f" stroke-width="1.2"/>
<path d="M1581.5,995.5 H1583.5" stroke="#000" stroke-width="1.2"/>
<path d="M1550.0,992.9 L1551.2,992.9 L1552.0,993.9 L1553.2,993.9 L1553.9,994.9 L1555.2,994.9 L1555.2,996.1 L1552.0,996.1 L1552.0,997.1 L1550.0,997.1 Z" fill="#000"/>
<path d="M1547.5,999.5 L1583.5,999.5" fill="none" stroke="#22b30f" stroke-width="1.2"/>
<path d="M1581.5,999.5 H1583.5" stroke="#000" stroke-width="1.2"/>
<path d="M1546.0,996.9 L1547.2,996.9 L1548.0,997.9 L1549.2,997.9 L1549.9,998.9 L1551.2,998.9 L1551.2,1000.1 L1548.0,1000.1 L1548.0,1001.1 L1546.0,1001.1 Z" fill="#000"/>
<path d="M1551.5,1004.5 L1583.5,1004.5" fill="none" stroke="#22b30f" stroke-width="1.2"/>
<path d="M1581.5,1004.5 H1583.5" stroke="#000" stroke-width="1.2"/>
<path d="M1550.0,1001.9 L1551.2,1001.9 L1552.0,1002.9 L1553.2,1002.9 L1553.9,1003.9 L1555.2,1003.9 L1555.2,1005.1 L1552.0,1005.1 L1552.0,1006.1 L1550.0,1006.1 Z" fill="#000"/>
<path d="M1547.5,1008.5 L1583.5,1008.5" fill="none" stroke="#22b30f" stroke-width="1.2"/>
<path d="M1581.5,1008.5 H1583.5" stroke="#000" stroke-width="1.2"/>
<path d="M1546.0,1005.9 L1547.2,1005.9 L1548.0,1006.9 L1549.2,1006.9 L1549.9,1007.9 L1551.2,1007.9 L1551.2,1009.1 L1548.0,1009.1 L1548.0,1010.1 L1546.0,1010.1 Z" fill="#000"/>
<path d="M1547.5,1024.5 L1583.5,1024.5" fill="none" stroke="#22b30f" stroke-width="1.2"/>
<path d="M1581.5,1024.5 H1583.5" stroke="#000" stroke-width="1.2"/>
<path d="M1546.0,1021.9 L1547.2,1021.9 L1548.0,1022.9 L1549.2,1022.9 L1549.9,1023.9 L1551.2,1023.9 L1551.2,1025.1 L1548.0,1025.1 L1548.0,1026.1 L1546.0,1026.1 Z" fill="#000"/>
<path d="M1551.5,1029.5 L1583.5,1029.5" fill="none" stroke="#22b30f" stroke-width="1.2"/>
<path d="M1581.5,1029.5 H1583.5" stroke="#000" stroke-width="1.2"/>
<path d="M1550.0,1026.9 L1551.2,1026.9 L1552.0,1027.9 L1553.2,1027.9 L1553.9,1028.9 L1555.2,1028.9 L1555.2,1030.1 L1552.0,1030.1 L1552.0,1031.1 L1550.0,1031.1 Z" fill="#000"/>
<path d="M1547.5,1033.5 L1583.5,1033.5" fill="none" stroke="#22b30f" stroke-width="1.2"/>
<path d="M1581.5,1033.5 H1583.5" stroke="#000" stroke-width="1.2"/>
<path d="M1546.0,1030.9 L1547.2,1030.9 L1548.0,1031.9 L1549.2,1031.9 L1549.9,1032.9 L1551.2,1032.9 L1551.2,1034.1 L1548.0,1034.1 L1548.0,1035.1 L1546.0,1035.1 Z" fill="#000"/>
<path d="M1551.5,1037.5 L1583.5,1037.5" fill="none" stroke="#22b30f" stroke-width="1.2"/>
<path d="M1581.5,1037.5 H1583.5" stroke="#000" stroke-width="1.2"/>
<path d="M1550.0,1034.9 L1551.2,1034.9 L1552.0,1035.9 L1553.2,1035.9 L1553.9,1036.9 L1555.2,1036.9 L1555.2,1038.1 L1552.0,1038.1 L1552.0,1039.1 L1550.0,1039.1 Z" fill="#000"/>
<path d="M1547.5,1042.5 L1583.5,1042.5" fill="none" stroke="#22b30f" stroke-width="1.2"/>
<path d="M1581.5,1042.5 H1583.5" stroke="#000" stroke-width="1.2"/>
<path d="M1546.0,1039.9 L1547.2,1039.9 L1548.0,1040.9 L1549.2,1040.9 L1549.9,1041.9 L1551.2,1041.9 L1551.2,1043.1 L1548.0,1043.1 L1548.0,1044.1 L1546.0,1044.1 Z" fill="#000"/>
<path d="M1551.5,1058.5 L1583.5,1058.5" fill="none" stroke="#22b30f" stroke-width="1.2"/>
<path d="M1581.5,1058.5 H1583.5" stroke="#000" stroke-width="1.2"/>
<path d="M1550.0,1055.9 L1551.2,1055.9 L1552.0,1056.9 L1553.2,1056.9 L1553.9,1057.9 L1555.2,1057.9 L1555.2,1059.1 L1552.0,1059.1 L1552.0,1060.1 L1550.0,1060.1 Z" fill="#000"/>
<path d="M1547.5,1062.5 L1583.5,1062.5" fill="none" stroke="#22b30f" stroke-width="1.2"/>
<path d="M1581.5,1062.5 H1583.5" stroke="#000" stroke-width="1.2"/>
<path d="M1546.0,1059.9 L1547.2,1059.9 L1548.0,1060.9 L1549.2,1060.9 L1549.9,1061.9 L1551.2,1061.9 L1551.2,1063.1 L1548.0,1063.1 L1548.0,1064.1 L1546.0,1064.1 Z" fill="#000"/>
<path d="M1551.5,1067.5 L1583.5,1067.5" fill="none" stroke="#22b30f" stroke-width="1.2"/>
<path d="M1581.5,1067.5 H1583.5" stroke="#000" stroke-width="1.2"/>
<path d="M1550.0,1064.9 L1551.2,1064.9 L1552.0,1065.9 L1553.2,1065.9 L1553.9,1066.9 L1555.2,1066.9 L1555.2,1068.1 L1552.0,1068.1 L1552.0,1069.1 L1550.0,1069.1 Z" fill="#000"/>
<path d="M1547.5,1072.5 L1583.5,1072.5" fill="none" stroke="#22b30f" stroke-width="1.2"/>
<path d="M1581.5,1072.5 H1583.5" stroke="#000" stroke-width="1.2"/>
<path d="M1546.0,1069.9 L1547.2,1069.9 L1548.0,1070.9 L1549.2,1070.9 L1549.9,1071.9 L1551.2,1071.9 L1551.2,1073.1 L1548.0,1073.1 L1548.0,1074.1 L1546.0,1074.1 Z" fill="#000"/>
<path d="M1551.5,1076.5 L1583.5,1076.5" fill="none" stroke="#22b30f" stroke-width="1.2"/>
<path d="M1581.5,1076.5 H1583.5" stroke="#000" stroke-width="1.2"/>
<path d="M1550.0,1073.9 L1551.2,1073.9 L1552.0,1074.9 L1553.2,1074.9 L1553.9,1075.9 L1555.2,1075.9 L1555.2,1077.1 L1552.0,1077.1 L1552.0,1078.1 L1550.0,1078.1 Z" fill="#000"/>
<path d="M1547.5,1081.5 L1583.5,1081.5" fill="none" stroke="#22b30f" stroke-width="1.2"/>
<path d="M1581.5,1081.5 H1583.5" stroke="#000" stroke-width="1.2"/>
<path d="M1546.0,1078.9 L1547.2,1078.9 L1548.0,1079.9 L1549.2,1079.9 L1549.9,1080.9 L1551.2,1080.9 L1551.2,1082.1 L1548.0,1082.1 L1548.0,1083.1 L1546.0,1083.1 Z" fill="#000"/>
<path d="M1551.5,1134.5 L1583.5,1134.5" fill="none" stroke="#22b30f" stroke-width="1.2"/>
<path d="M1581.5,1134.5 H1583.5" stroke="#000" stroke-width="1.2"/>
<path d="M1550.0,1131.9 L1551.2,1131.9 L1552.0,1132.9 L1553.2,1132.9 L1553.9,1133.9 L1555.2,1133.9 L1555.2,1135.1 L1552.0,1135.1 L1552.0,1136.1 L1550.0,1136.1 Z" fill="#000"/>
<path d="M1547.5,1139.5 L1583.5,1139.5" fill="none" stroke="#22b30f" stroke-width="1.2"/>
<path d="M1581.5,1139.5 H1583.5" stroke="#000" stroke-width="1.2"/>
<path d="M1546.0,1136.9 L1547.2,1136.9 L1548.0,1137.9 L1549.2,1137.9 L1549.9,1138.9 L1551.2,1138.9 L1551.2,1140.1 L1548.0,1140.1 L1548.0,1141.1 L1546.0,1141.1 Z" fill="#000"/>
<path d="M1551.5,1144.5 L1583.5,1144.5" fill="none" stroke="#22b30f" stroke-width="1.2"/>
<path d="M1581.5,1144.5 H1583.5" stroke="#000" stroke-width="1.2"/>
<path d="M1550.0,1141.9 L1551.2,1141.9 L1552.0,1142.9 L1553.2,1142.9 L1553.9,1143.9 L1555.2,1143.9 L1555.2,1145.1 L1552.0,1145.1 L1552.0,1146.1 L1550.0,1146.1 Z" fill="#000"/>
<path d="M1547.5,1149.5 L1583.5,1149.5" fill="none" stroke="#22b30f" stroke-width="1.2"/>
<path d="M1581.5,1149.5 H1583.5" stroke="#000" stroke-width="1.2"/>
<path d="M1546.0,1146.9 L1547.2,1146.9 L1548.0,1147.9 L1549.2,1147.9 L1549.9,1148.9 L1551.2,1148.9 L1551.2,1150.1 L1548.0,1150.1 L1548.0,1151.1 L1546.0,1151.1 Z" fill="#000"/>
<path d="M1551.5,1153.5 L1583.5,1153.5" fill="none" stroke="#22b30f" stroke-width="1.2"/>
<path d="M1581.5,1153.5 H1583.5" stroke="#000" stroke-width="1.2"/>
<path d="M1550.0,1150.9 L1551.2,1150.9 L1552.0,1151.9 L1553.2,1151.9 L1553.9,1152.9 L1555.2,1152.9 L1555.2,1154.1 L1552.0,1154.1 L1552.0,1155.1 L1550.0,1155.1 Z" fill="#000"/>
<path d="M1547.5,1158.5 L1583.5,1158.5" fill="none" stroke="#22b30f" stroke-width="1.2"/>
<path d="M1581.5,1158.5 H1583.5" stroke="#000" stroke-width="1.2"/>
<path d="M1546.0,1155.9 L1547.2,1155.9 L1548.0,1156.9 L1549.2,1156.9 L1549.9,1157.9 L1551.2,1157.9 L1551.2,1159.1 L1548.0,1159.1 L1548.0,1160.1 L1546.0,1160.1 Z" fill="#000"/>
<path d="M1581.5,800.5 H1583.5" stroke="#000" stroke-width="1.2"/>
<path d="M1581.5,809.5 H1583.5" stroke="#000" stroke-width="1.2"/>
<path d="M1581.5,814.5 H1583.5" stroke="#000" stroke-width="1.2"/>
<path d="M1581.5,830.5 H1583.5" stroke="#000" stroke-width="1.2"/>
<path d="M1581.5,834.5 H1583.5" stroke="#000" stroke-width="1.2"/>
<path d="M1581.5,843.5 H1583.5" stroke="#000" stroke-width="1.2"/>
<path d="M1581.5,879.5 H1583.5" stroke="#000" stroke-width="1.2"/>
<path d="M1581.5,884.5 H1583.5" stroke="#000" stroke-width="1.2"/>
<path d="M1581.5,888.5 H1583.5" stroke="#000" stroke-width="1.2"/>
<path d="M1581.5,897.5 H1583.5" stroke="#000" stroke-width="1.2"/>
<path d="M1581.5,913.5 H1583.5" stroke="#000" stroke-width="1.2"/>
<path d="M1581.5,918.5 H1583.5" stroke="#000" stroke-width="1.2"/>
<path d="M1581.5,927.5 H1583.5" stroke="#000" stroke-width="1.2"/>
<path d="M1581.5,961.5 H1583.5" stroke="#000" stroke-width="1.2"/>
<path d="M1581.5,970.5 H1583.5" stroke="#000" stroke-width="1.2"/>
<path d="M1581.5,1106.5 H1583.5" stroke="#000" stroke-width="1.2"/>
<path d="M1581.5,1110.5 H1583.5" stroke="#000" stroke-width="1.2"/>
<rect x="1583.5" y="798.5" width="14" height="18" fill="#fffccc" stroke="#000" stroke-width="1.3"/>
<rect x="1583.5" y="827.5" width="14" height="18" fill="#fffccc" stroke="#000" stroke-width="1.3"/>
<rect x="1583.5" y="857.5" width="14" height="9" fill="#fffccc" stroke="#000" stroke-width="1.3"/>
<rect x="1583.5" y="877.5" width="14" height="23" fill="#fffccc" stroke="#000" stroke-width="1.3"/>
<rect x="1583.5" y="911.5" width="14" height="27" fill="#fffccc" stroke="#000" stroke-width="1.3"/>
<rect x="1583.5" y="949.5" width="14" height="23" fill="#fffccc" stroke="#000" stroke-width="1.3"/>
<rect x="1583.5" y="983.5" width="14" height="27" fill="#fffccc" stroke="#000" stroke-width="1.3"/>
<rect x="1583.5" y="1022.5" width="14" height="23" fill="#fffccc" stroke="#000" stroke-width="1.3"/>
<rect x="1583.5" y="1056.5" width="14" height="27" fill="#fffccc" stroke="#000" stroke-width="1.3"/>
<rect x="1583.5" y="1133.5" width="14" height="27" fill="#fffccc" stroke="#000" stroke-width="1.3"/>
<path d="M1583.5,1101.5 L1593.4,1105.5 L1593.4,1111.7 L1583.5,1115.7 Z" fill="#fffccc" stroke="#000" stroke-width="1.2"/>
<path d="M1597.5,805.5 L1639.5,805.5" fill="none" stroke="#22b30f" stroke-width="1.2"/>
<path d="M1635.5,804.9 L1637.8,803.7 L1640.2,803.7 L1640.2,807.3 L1637.8,807.3 L1635.5,806.1 Z" fill="#000"/>
<path d="M1597.5,834.5 L1639.5,834.5" fill="none" stroke="#22b30f" stroke-width="1.2"/>
<path d="M1635.5,833.9 L1637.8,832.7 L1640.2,832.7 L1640.2,836.3 L1637.8,836.3 L1635.5,835.1 Z" fill="#000"/>
<path d="M1597.5,859.5 L1639.5,859.5" fill="none" stroke="#22b30f" stroke-width="1.2"/>
<path d="M1635.5,858.9 L1637.8,857.7 L1640.2,857.7 L1640.2,861.3 L1637.8,861.3 L1635.5,860.1 Z" fill="#000"/>
<path d="M1597.5,888.5 L1634.5,888.5" fill="none" stroke="#22b30f" stroke-width="1.2"/>
<path d="M1630.5,887.9 L1632.8,886.7 L1635.2,886.7 L1635.2,890.3 L1632.8,890.3 L1630.5,889.1 Z" fill="#000"/>
<path d="M1597.5,922.5 L1634.5,922.5" fill="none" stroke="#22b30f" stroke-width="1.2"/>
<path d="M1630.5,921.9 L1632.8,920.7 L1635.2,920.7 L1635.2,924.3 L1632.8,924.3 L1630.5,923.1 Z" fill="#000"/>
<path d="M1597.5,961.5 L1634.5,961.5" fill="none" stroke="#22b30f" stroke-width="1.2"/>
<path d="M1630.5,960.9 L1632.8,959.7 L1635.2,959.7 L1635.2,963.3 L1632.8,963.3 L1630.5,962.1 Z" fill="#000"/>
<path d="M1597.5,995.5 L1634.5,995.5" fill="none" stroke="#22b30f" stroke-width="1.2"/>
<path d="M1630.5,994.9 L1632.8,993.7 L1635.2,993.7 L1635.2,997.3 L1632.8,997.3 L1630.5,996.1 Z" fill="#000"/>
<path d="M1639,804 L1639,1049 L1660,1049" fill="none" stroke="#0b850b" stroke-width="2.2"/>
<path d="M1634,888 L1634,1054 L1660,1054" fill="none" stroke="#0b850b" stroke-width="2.2"/>
<path d="M1597.5,1033.5 L1630.5,1033.5 L1630.5,1118.5 L1660.5,1118.5" fill="none" stroke="#22b30f" stroke-width="1.2"/>
<path d="M1630.5,1072.5 L1660.5,1072.5" fill="none" stroke="#22b30f" stroke-width="1.2"/>
<circle cx="1630.5" cy="1072.5" r="2.0" fill="#22b30f"/>
<path d="M1597.5,1067.5 L1621.5,1067.5 L1621.5,1115.5 L1660.5,1115.5" fill="none" stroke="#22b30f" stroke-width="1.2"/>
<path d="M1621.5,1076.5 L1660.5,1076.5" fill="none" stroke="#22b30f" stroke-width="1.2"/>
<circle cx="1621.5" cy="1076.5" r="2.0" fill="#22b30f"/>
<path d="M1593.5,1108.5 L1612.5,1108.5 L1612.5,1110.5 L1660.5,1110.5" fill="none" stroke="#22b30f" stroke-width="1.2"/>
<path d="M1597.5,1144.5 L1639.5,1144.5 L1639.5,1128.5 L1660.5,1128.5" fill="none" stroke="#22b30f" stroke-width="1.2"/>
<path d="M1588.5,1115.5 L1588.5,1121.5" fill="none" stroke="#22b30f" stroke-width="1.2"/>
<path d="M1551,1121 L1626,1121" fill="none" stroke="#0b850b" stroke-width="2.2"/>
<circle cx="1551" cy="1121" r="2.6" fill="#0b850b"/>
<circle cx="1626" cy="1121" r="2.6" fill="#0b850b"/>
<path d="M1547,1126 L1617,1126" fill="none" stroke="#0b850b" stroke-width="2.2"/>
<circle cx="1547" cy="1126" r="2.6" fill="#0b850b"/>
<circle cx="1617" cy="1126" r="2.6" fill="#0b850b"/>
<path d="M1617,1080 L1617,1133" fill="none" stroke="#0b850b" stroke-width="2.2"/>
<path d="M1626,1089 L1626,1124" fill="none" stroke="#0b850b" stroke-width="2.2"/>
<path d="M1617.5,1081.5 L1660.5,1081.5" fill="none" stroke="#22b30f" stroke-width="1.2"/>
<path d="M1658.5,1081.5 H1660.5" stroke="#000" stroke-width="1.2"/>
<path d="M1616.0,1078.9 L1617.2,1078.9 L1618.0,1079.9 L1619.2,1079.9 L1619.9,1080.9 L1621.2,1080.9 L1621.2,1082.1 L1618.0,1082.1 L1618.0,1083.1 L1616.0,1083.1 Z" fill="#000"/>
<path d="M1626.5,1090.5 L1660.5,1090.5" fill="none" stroke="#22b30f" stroke-width="1.2"/>
<path d="M1658.5,1090.5 H1660.5" stroke="#000" stroke-width="1.2"/>
<path d="M1625.0,1087.9 L1626.2,1087.9 L1627.0,1088.9 L1628.2,1088.9 L1628.9,1089.9 L1630.2,1089.9 L1630.2,1091.1 L1627.0,1091.1 L1627.0,1092.1 L1625.0,1092.1 Z" fill="#000"/>
<path d="M1626.5,1124.5 L1660.5,1124.5" fill="none" stroke="#22b30f" stroke-width="1.2"/>
<path d="M1658.5,1124.5 H1660.5" stroke="#000" stroke-width="1.2"/>
<path d="M1625.0,1121.9 L1626.2,1121.9 L1627.0,1122.9 L1628.2,1122.9 L1628.9,1123.9 L1630.2,1123.9 L1630.2,1125.1 L1627.0,1125.1 L1627.0,1126.1 L1625.0,1126.1 Z" fill="#000"/>
<path d="M1617.5,1133.5 L1660.5,1133.5" fill="none" stroke="#22b30f" stroke-width="1.2"/>
<path d="M1658.5,1133.5 H1660.5" stroke="#000" stroke-width="1.2"/>
<path d="M1616.0,1130.9 L1617.2,1130.9 L1618.0,1131.9 L1619.2,1131.9 L1619.9,1132.9 L1621.2,1132.9 L1621.2,1134.1 L1618.0,1134.1 L1618.0,1135.1 L1616.0,1135.1 Z" fill="#000"/>
<path d="M1658.5,1072.5 H1660.5" stroke="#000" stroke-width="1.2"/>
<path d="M1658.5,1076.5 H1660.5" stroke="#000" stroke-width="1.2"/>
<path d="M1658.5,1085.5 H1660.5" stroke="#000" stroke-width="1.2"/>
<path d="M1658.5,1094.5 H1660.5" stroke="#000" stroke-width="1.2"/>
<path d="M1658.5,1110.5 H1660.5" stroke="#000" stroke-width="1.2"/>
<path d="M1658.5,1115.5 H1660.5" stroke="#000" stroke-width="1.2"/>
<path d="M1658.5,1118.5 H1660.5" stroke="#000" stroke-width="1.2"/>
<path d="M1658.5,1128.5 H1660.5" stroke="#000" stroke-width="1.2"/>
<path d="M1644.5,1040.5 L1644.5,1063.5" fill="none" stroke="#22b30f" stroke-width="1.2"/>
<circle cx="1644.5" cy="1044.5" r="2.0" fill="#22b30f"/>
<path d="M1644.5,1040.5 L1660.5,1040.5" fill="none" stroke="#22b30f" stroke-width="1.2"/>
<path d="M1644.5,1044.5 L1660.5,1044.5" fill="none" stroke="#22b30f" stroke-width="1.2"/>
<path d="M1641.5,1063.5 Q1644.5,1067.5 1648.5,1063.5" fill="none" stroke="#000" stroke-width="1.3"/>
<rect x="1660.5" y="1038.5" width="28" height="18" fill="#fffccc" stroke="#000" stroke-width="1.3"/>
<rect x="1660.5" y="1069.5" width="14" height="27" fill="#fffccc" stroke="#000" stroke-width="1.3"/>
<rect x="1660.5" y="1108.5" width="14" height="27" fill="#fffccc" stroke="#000" stroke-width="1.3"/>
<path d="M1674.5,1081.5 L1690.5,1081.5" fill="none" stroke="#22b30f" stroke-width="1.2"/>
<path d="M1674.5,1119.5 L1690.5,1119.5" fill="none" stroke="#22b30f" stroke-width="1.2"/>
<path d="M1415.5,1288.5 H1769.0 L1770.5,1290.0 V1698.5 H1415.5 Z" fill="#f9f9f9" stroke="#000" stroke-width="1.3"/>
<rect x="1416" y="1290" width="4" height="4" fill="#2f5597"/>
<path d="M1410,1303 L1427,1303" fill="none" stroke="#0b850b" stroke-width="2.2"/>
<path d="M1410,1306 L1422,1306" fill="none" stroke="#0b850b" stroke-width="2.2"/>
<path d="M1426.0,1299.9 L1427.2,1299.9 L1428.0,1300.9 L1429.2,1300.9 L1429.9,1301.9 L1431.2,1301.9 L1431.2,1303.1 L1428.0,1303.1 L1428.0,1304.1 L1426.0,1304.1 Z" fill="#000"/>
<path d="M1421.0,1303.9 L1422.2,1303.9 L1423.0,1304.9 L1424.2,1304.9 L1424.9,1305.9 L1426.2,1305.9 L1426.2,1307.1 L1423.0,1307.1 L1423.0,1308.1 L1421.0,1308.1 Z" fill="#000"/>
<path d="M1422,1300 L1422,1520" fill="none" stroke="#0b850b" stroke-width="2.2"/>
<path d="M1427,1296 L1427,1516" fill="none" stroke="#0b850b" stroke-width="2.2"/>
<path d="M1427.5,1297.5 L1445.5,1297.5" fill="none" stroke="#22b30f" stroke-width="1.2"/>
<path d="M1443.5,1297.5 H1445.5" stroke="#000" stroke-width="1.2"/>
<path d="M1426.0,1294.9 L1427.2,1294.9 L1428.0,1295.9 L1429.2,1295.9 L1429.9,1296.9 L1431.2,1296.9 L1431.2,1298.1 L1428.0,1298.1 L1428.0,1299.1 L1426.0,1299.1 Z" fill="#000"/>
<path d="M1422.5,1302.5 L1445.5,1302.5" fill="none" stroke="#22b30f" stroke-width="1.2"/>
<path d="M1443.5,1302.5 H1445.5" stroke="#000" stroke-width="1.2"/>
<path d="M1421.0,1299.9 L1422.2,1299.9 L1423.0,1300.9 L1424.2,1300.9 L1424.9,1301.9 L1426.2,1301.9 L1426.2,1303.1 L1423.0,1303.1 L1423.0,1304.1 L1421.0,1304.1 Z" fill="#000"/>
<path d="M1427.5,1306.5 L1445.5,1306.5" fill="none" stroke="#22b30f" stroke-width="1.2"/>
<path d="M1443.5,1306.5 H1445.5" stroke="#000" stroke-width="1.2"/>
<path d="M1426.0,1303.9 L1427.2,1303.9 L1428.0,1304.9 L1429.2,1304.9 L1429.9,1305.9 L1431.2,1305.9 L1431.2,1307.1 L1428.0,1307.1 L1428.0,1308.1 L1426.0,1308.1 Z" fill="#000"/>
<path d="M1422.5,1311.5 L1445.5,1311.5" fill="none" stroke="#22b30f" stroke-width="1.2"/>
<path d="M1443.5,1311.5 H1445.5" stroke="#000" stroke-width="1.2"/>
<path d="M1421.0,1308.9 L1422.2,1308.9 L1423.0,1309.9 L1424.2,1309.9 L1424.9,1310.9 L1426.2,1310.9 L1426.2,1312.1 L1423.0,1312.1 L1423.0,1313.1 L1421.0,1313.1 Z" fill="#000"/>
<path d="M1427.5,1315.5 L1445.5,1315.5" fill="none" stroke="#22b30f" stroke-width="1.2"/>
<path d="M1443.5,1315.5 H1445.5" stroke="#000" stroke-width="1.2"/>
<path d="M1426.0,1312.9 L1427.2,1312.9 L1428.0,1313.9 L1429.2,1313.9 L1429.9,1314.9 L1431.2,1314.9 L1431.2,1316.1 L1428.0,1316.1 L1428.0,1317.1 L1426.0,1317.1 Z" fill="#000"/>
<path d="M1422.5,1320.5 L1445.5,1320.5" fill="none" stroke="#22b30f" stroke-width="1.2"/>
<path d="M1443.5,1320.5 H1445.5" stroke="#000" stroke-width="1.2"/>
<path d="M1421.0,1317.9 L1422.2,1317.9 L1423.0,1318.9 L1424.2,1318.9 L1424.9,1319.9 L1426.2,1319.9 L1426.2,1321.1 L1423.0,1321.1 L1423.0,1322.1 L1421.0,1322.1 Z" fill="#000"/>
<rect x="1445.5" y="1295.5" width="14" height="27" fill="#fffccc" stroke="#000" stroke-width="1.3"/>
<path d="M1427.5,1335.5 L1445.5,1335.5" fill="none" stroke="#22b30f" stroke-width="1.2"/>
<path d="M1443.5,1335.5 H1445.5" stroke="#000" stroke-width="1.2"/>
<path d="M1426.0,1332.9 L1427.2,1332.9 L1428.0,1333.9 L1429.2,1333.9 L1429.9,1334.9 L1431.2,1334.9 L1431.2,1336.1 L1428.0,1336.1 L1428.0,1337.1 L1426.0,1337.1 Z" fill="#000"/>
<path d="M1422.5,1340.5 L1445.5,1340.5" fill="none" stroke="#22b30f" stroke-width="1.2"/>
<path d="M1443.5,1340.5 H1445.5" stroke="#000" stroke-width="1.2"/>
<path d="M1421.0,1337.9 L1422.2,1337.9 L1423.0,1338.9 L1424.2,1338.9 L1424.9,1339.9 L1426.2,1339.9 L1426.2,1341.1 L1423.0,1341.1 L1423.0,1342.1 L1421.0,1342.1 Z" fill="#000"/>
<path d="M1427.5,1344.5 L1445.5,1344.5" fill="none" stroke="#22b30f" stroke-width="1.2"/>
<path d="M1443.5,1344.5 H1445.5" stroke="#000" stroke-width="1.2"/>
<path d="M1426.0,1341.9 L1427.2,1341.9 L1428.0,1342.9 L1429.2,1342.9 L1429.9,1343.9 L1431.2,1343.9 L1431.2,1345.1 L1428.0,1345.1 L1428.0,1346.1 L1426.0,1346.1 Z" fill="#000"/>
<path d="M1422.5,1349.5 L1445.5,1349.5" fill="none" stroke="#22b30f" stroke-width="1.2"/>
<path d="M1443.5,1349.5 H1445.5" stroke="#000" stroke-width="1.2"/>
<path d="M1421.0,1346.9 L1422.2,1346.9 L1423.0,1347.9 L1424.2,1347.9 L1424.9,1348.9 L1426.2,1348.9 L1426.2,1350.1 L1423.0,1350.1 L1423.0,1351.1 L1421.0,1351.1 Z" fill="#000"/>
<path d="M1427.5,1353.5 L1445.5,1353.5" fill="none" stroke="#22b30f" stroke-width="1.2"/>
<path d="M1443.5,1353.5 H1445.5" stroke="#000" stroke-width="1.2"/>
<path d="M1426.0,1350.9 L1427.2,1350.9 L1428.0,1351.9 L1429.2,1351.9 L1429.9,1352.9 L1431.2,1352.9 L1431.2,1354.1 L1428.0,1354.1 L1428.0,1355.1 L1426.0,1355.1 Z" fill="#000"/>
<path d="M1422.5,1358.5 L1445.5,1358.5" fill="none" stroke="#22b30f" stroke-width="1.2"/>
<path d="M1443.5,1358.5 H1445.5" stroke="#000" stroke-width="1.2"/>
<path d="M1421.0,1355.9 L1422.2,1355.9 L1423.0,1356.9 L1424.2,1356.9 L1424.9,1357.9 L1426.2,1357.9 L1426.2,1359.1 L1423.0,1359.1 L1423.0,1360.1 L1421.0,1360.1 Z" fill="#000"/>
<rect x="1445.5" y="1333.5" width="14" height="27" fill="#fffccc" stroke="#000" stroke-width="1.3"/>
<path d="M1427.5,1374.5 L1445.5,1374.5" fill="none" stroke="#22b30f" stroke-width="1.2"/>
<path d="M1443.5,1374.5 H1445.5" stroke="#000" stroke-width="1.2"/>
<path d="M1426.0,1371.9 L1427.2,1371.9 L1428.0,1372.9 L1429.2,1372.9 L1429.9,1373.9 L1431.2,1373.9 L1431.2,1375.1 L1428.0,1375.1 L1428.0,1376.1 L1426.0,1376.1 Z" fill="#000"/>
<path d="M1422.5,1379.5 L1445.5,1379.5" fill="none" stroke="#22b30f" stroke-width="1.2"/>
<path d="M1443.5,1379.5 H1445.5" stroke="#000" stroke-width="1.2"/>
<path d="M1421.0,1376.9 L1422.2,1376.9 L1423.0,1377.9 L1424.2,1377.9 L1424.9,1378.9 L1426.2,1378.9 L1426.2,1380.1 L1423.0,1380.1 L1423.0,1381.1 L1421.0,1381.1 Z" fill="#000"/>
<path d="M1427.5,1383.5 L1445.5,1383.5" fill="none" stroke="#22b30f" stroke-width="1.2"/>
<path d="M1443.5,1383.5 H1445.5" stroke="#000" stroke-width="1.2"/>
<path d="M1426.0,1380.9 L1427.2,1380.9 L1428.0,1381.9 L1429.2,1381.9 L1429.9,1382.9 L1431.2,1382.9 L1431.2,1384.1 L1428.0,1384.1 L1428.0,1385.1 L1426.0,1385.1 Z" fill="#000"/>
<path d="M1422.5,1388.5 L1445.5,1388.5" fill="none" stroke="#22b30f" stroke-width="1.2"/>
<path d="M1443.5,1388.5 H1445.5" stroke="#000" stroke-width="1.2"/>
<path d="M1421.0,1385.9 L1422.2,1385.9 L1423.0,1386.9 L1424.2,1386.9 L1424.9,1387.9 L1426.2,1387.9 L1426.2,1389.1 L1423.0,1389.1 L1423.0,1390.1 L1421.0,1390.1 Z" fill="#000"/>
<path d="M1427.5,1392.5 L1445.5,1392.5" fill="none" stroke="#22b30f" stroke-width="1.2"/>
<path d="M1443.5,1392.5 H1445.5" stroke="#000" stroke-width="1.2"/>
<path d="M1426.0,1389.9 L1427.2,1389.9 L1428.0,1390.9 L1429.2,1390.9 L1429.9,1391.9 L1431.2,1391.9 L1431.2,1393.1 L1428.0,1393.1 L1428.0,1394.1 L1426.0,1394.1 Z" fill="#000"/>
<path d="M1422.5,1397.5 L1445.5,1397.5" fill="none" stroke="#22b30f" stroke-width="1.2"/>
<path d="M1443.5,1397.5 H1445.5" stroke="#000" stroke-width="1.2"/>
<path d="M1421.0,1394.9 L1422.2,1394.9 L1423.0,1395.9 L1424.2,1395.9 L1424.9,1396.9 L1426.2,1396.9 L1426.2,1398.1 L1423.0,1398.1 L1423.0,1399.1 L1421.0,1399.1 Z" fill="#000"/>
<rect x="1445.5" y="1372.5" width="14" height="27" fill="#fffccc" stroke="#000" stroke-width="1.3"/>
<path d="M1427.5,1412.5 L1445.5,1412.5" fill="none" stroke="#22b30f" stroke-width="1.2"/>
<path d="M1443.5,1412.5 H1445.5" stroke="#000" stroke-width="1.2"/>
<path d="M1426.0,1409.9 L1427.2,1409.9 L1428.0,1410.9 L1429.2,1410.9 L1429.9,1411.9 L1431.2,1411.9 L1431.2,1413.1 L1428.0,1413.1 L1428.0,1414.1 L1426.0,1414.1 Z" fill="#000"/>
<path d="M1422.5,1417.5 L1445.5,1417.5" fill="none" stroke="#22b30f" stroke-width="1.2"/>
<path d="M1443.5,1417.5 H1445.5" stroke="#000" stroke-width="1.2"/>
<path d="M1421.0,1414.9 L1422.2,1414.9 L1423.0,1415.9 L1424.2,1415.9 L1424.9,1416.9 L1426.2,1416.9 L1426.2,1418.1 L1423.0,1418.1 L1423.0,1419.1 L1421.0,1419.1 Z" fill="#000"/>
<path d="M1427.5,1421.5 L1445.5,1421.5" fill="none" stroke="#22b30f" stroke-width="1.2"/>
<path d="M1443.5,1421.5 H1445.5" stroke="#000" stroke-width="1.2"/>
<path d="M1426.0,1418.9 L1427.2,1418.9 L1428.0,1419.9 L1429.2,1419.9 L1429.9,1420.9 L1431.2,1420.9 L1431.2,1422.1 L1428.0,1422.1 L1428.0,1423.1 L1426.0,1423.1 Z" fill="#000"/>
<path d="M1422.5,1426.5 L1445.5,1426.5" fill="none" stroke="#22b30f" stroke-width="1.2"/>
<path d="M1443.5,1426.5 H1445.5" stroke="#000" stroke-width="1.2"/>
<path d="M1421.0,1423.9 L1422.2,1423.9 L1423.0,1424.9 L1424.2,1424.9 L1424.9,1425.9 L1426.2,1425.9 L1426.2,1427.1 L1423.0,1427.1 L1423.0,1428.1 L1421.0,1428.1 Z" fill="#000"/>
<path d="M1427.5,1430.5 L1445.5,1430.5" fill="none" stroke="#22b30f" stroke-width="1.2"/>
<path d="M1443.5,1430.5 H1445.5" stroke="#000" stroke-width="1.2"/>
<path d="M1426.0,1427.9 L1427.2,1427.9 L1428.0,1428.9 L1429.2,1428.9 L1429.9,1429.9 L1431.2,1429.9 L1431.2,1431.1 L1428.0,1431.1 L1428.0,1432.1 L1426.0,1432.1 Z" fill="#000"/>
<path d="M1422.5,1435.5 L1445.5,1435.5" fill="none" stroke="#22b30f" stroke-width="1.2"/>
<path d="M1443.5,1435.5 H1445.5" stroke="#000" stroke-width="1.2"/>
<path d="M1421.0,1432.9 L1422.2,1432.9 L1423.0,1433.9 L1424.2,1433.9 L1424.9,1434.9 L1426.2,1434.9 L1426.2,1436.1 L1423.0,1436.1 L1423.0,1437.1 L1421.0,1437.1 Z" fill="#000"/>
<rect x="1445.5" y="1410.5" width="14" height="27" fill="#fffccc" stroke="#000" stroke-width="1.3"/>
<path d="M1427.5,1451.5 L1445.5,1451.5" fill="none" stroke="#22b30f" stroke-width="1.2"/>
<path d="M1443.5,1451.5 H1445.5" stroke="#000" stroke-width="1.2"/>
<path d="M1426.0,1448.9 L1427.2,1448.9 L1428.0,1449.9 L1429.2,1449.9 L1429.9,1450.9 L1431.2,1450.9 L1431.2,1452.1 L1428.0,1452.1 L1428.0,1453.1 L1426.0,1453.1 Z" fill="#000"/>
<path d="M1422.5,1456.5 L1445.5,1456.5" fill="none" stroke="#22b30f" stroke-width="1.2"/>
<path d="M1443.5,1456.5 H1445.5" stroke="#000" stroke-width="1.2"/>
<path d="M1421.0,1453.9 L1422.2,1453.9 L1423.0,1454.9 L1424.2,1454.9 L1424.9,1455.9 L1426.2,1455.9 L1426.2,1457.1 L1423.0,1457.1 L1423.0,1458.1 L1421.0,1458.1 Z" fill="#000"/>
<path d="M1427.5,1460.5 L1445.5,1460.5" fill="none" stroke="#22b30f" stroke-width="1.2"/>
<path d="M1443.5,1460.5 H1445.5" stroke="#000" stroke-width="1.2"/>
<path d="M1426.0,1457.9 L1427.2,1457.9 L1428.0,1458.9 L1429.2,1458.9 L1429.9,1459.9 L1431.2,1459.9 L1431.2,1461.1 L1428.0,1461.1 L1428.0,1462.1 L1426.0,1462.1 Z" fill="#000"/>
<path d="M1422.5,1465.5 L1445.5,1465.5" fill="none" stroke="#22b30f" stroke-width="1.2"/>
<path d="M1443.5,1465.5 H1445.5" stroke="#000" stroke-width="1.2"/>
<path d="M1421.0,1462.9 L1422.2,1462.9 L1423.0,1463.9 L1424.2,1463.9 L1424.9,1464.9 L1426.2,1464.9 L1426.2,1466.1 L1423.0,1466.1 L1423.0,1467.1 L1421.0,1467.1 Z" fill="#000"/>
<path d="M1427.5,1469.5 L1445.5,1469.5" fill="none" stroke="#22b30f" stroke-width="1.2"/>
<path d="M1443.5,1469.5 H1445.5" stroke="#000" stroke-width="1.2"/>
<path d="M1426.0,1466.9 L1427.2,1466.9 L1428.0,1467.9 L1429.2,1467.9 L1429.9,1468.9 L1431.2,1468.9 L1431.2,1470.1 L1428.0,1470.1 L1428.0,1471.1 L1426.0,1471.1 Z" fill="#000"/>
<path d="M1422.5,1474.5 L1445.5,1474.5" fill="none" stroke="#22b30f" stroke-width="1.2"/>
<path d="M1443.5,1474.5 H1445.5" stroke="#000" stroke-width="1.2"/>
<path d="M1421.0,1471.9 L1422.2,1471.9 L1423.0,1472.9 L1424.2,1472.9 L1424.9,1473.9 L1426.2,1473.9 L1426.2,1475.1 L1423.0,1475.1 L1423.0,1476.1 L1421.0,1476.1 Z" fill="#000"/>
<rect x="1445.5" y="1449.5" width="14" height="27" fill="#fffccc" stroke="#000" stroke-width="1.3"/>
<path d="M1427.5,1496.5 L1445.5,1496.5" fill="none" stroke="#22b30f" stroke-width="1.2"/>
<path d="M1443.5,1496.5 H1445.5" stroke="#000" stroke-width="1.2"/>
<path d="M1426.0,1493.9 L1427.2,1493.9 L1428.0,1494.9 L1429.2,1494.9 L1429.9,1495.9 L1431.2,1495.9 L1431.2,1497.1 L1428.0,1497.1 L1428.0,1498.1 L1426.0,1498.1 Z" fill="#000"/>
<path d="M1422.5,1501.5 L1445.5,1501.5" fill="none" stroke="#22b30f" stroke-width="1.2"/>
<path d="M1443.5,1501.5 H1445.5" stroke="#000" stroke-width="1.2"/>
<path d="M1421.0,1498.9 L1422.2,1498.9 L1423.0,1499.9 L1424.2,1499.9 L1424.9,1500.9 L1426.2,1500.9 L1426.2,1502.1 L1423.0,1502.1 L1423.0,1503.1 L1421.0,1503.1 Z" fill="#000"/>
<path d="M1427.5,1505.5 L1445.5,1505.5" fill="none" stroke="#22b30f" stroke-width="1.2"/>
<path d="M1443.5,1505.5 H1445.5" stroke="#000" stroke-width="1.2"/>
<path d="M1426.0,1502.9 L1427.2,1502.9 L1428.0,1503.9 L1429.2,1503.9 L1429.9,1504.9 L1431.2,1504.9 L1431.2,1506.1 L1428.0,1506.1 L1428.0,1507.1 L1426.0,1507.1 Z" fill="#000"/>
<path d="M1422.5,1510.5 L1445.5,1510.5" fill="none" stroke="#22b30f" stroke-width="1.2"/>
<path d="M1443.5,1510.5 H1445.5" stroke="#000" stroke-width="1.2"/>
<path d="M1421.0,1507.9 L1422.2,1507.9 L1423.0,1508.9 L1424.2,1508.9 L1424.9,1509.9 L1426.2,1509.9 L1426.2,1511.1 L1423.0,1511.1 L1423.0,1512.1 L1421.0,1512.1 Z" fill="#000"/>
<path d="M1427.5,1514.5 L1445.5,1514.5" fill="none" stroke="#22b30f" stroke-width="1.2"/>
<path d="M1443.5,1514.5 H1445.5" stroke="#000" stroke-width="1.2"/>
<path d="M1426.0,1511.9 L1427.2,1511.9 L1428.0,1512.9 L1429.2,1512.9 L1429.9,1513.9 L1431.2,1513.9 L1431.2,1515.1 L1428.0,1515.1 L1428.0,1516.1 L1426.0,1516.1 Z" fill="#000"/>
<path d="M1422.5,1519.5 L1445.5,1519.5" fill="none" stroke="#22b30f" stroke-width="1.2"/>
<path d="M1443.5,1519.5 H1445.5" stroke="#000" stroke-width="1.2"/>
<path d="M1421.0,1516.9 L1422.2,1516.9 L1423.0,1517.9 L1424.2,1517.9 L1424.9,1518.9 L1426.2,1518.9 L1426.2,1520.1 L1423.0,1520.1 L1423.0,1521.1 L1421.0,1521.1 Z" fill="#000"/>
<rect x="1445.5" y="1494.5" width="14" height="27" fill="#fffccc" stroke="#000" stroke-width="1.3"/>
<path d="M1486,1350 L1486,1624" fill="none" stroke="#0b850b" stroke-width="2.2"/>
<path d="M1491,1346 L1491,1620" fill="none" stroke="#0b850b" stroke-width="2.2"/>
<path d="M1422,1484 L1486,1484" fill="none" stroke="#0b850b" stroke-width="2.2"/>
<path d="M1427,1487 L1491,1487" fill="none" stroke="#0b850b" stroke-width="2.2"/>
<circle cx="1422" cy="1484" r="2.6" fill="#0b850b"/>
<circle cx="1486" cy="1484" r="2.6" fill="#0b850b"/>
<circle cx="1427" cy="1487" r="2.6" fill="#0b850b"/>
<circle cx="1491" cy="1487" r="2.6" fill="#0b850b"/>
<path d="M1491.5,1347.5 L1515.5,1347.5" fill="none" stroke="#22b30f" stroke-width="1.2"/>
<path d="M1513.5,1347.5 H1515.5" stroke="#000" stroke-width="1.2"/>
<path d="M1490.0,1344.9 L1491.2,1344.9 L1492.0,1345.9 L1493.2,1345.9 L1493.9,1346.9 L1495.2,1346.9 L1495.2,1348.1 L1492.0,1348.1 L1492.0,1349.1 L1490.0,1349.1 Z" fill="#000"/>
<path d="M1485.5,1352.5 L1515.5,1352.5" fill="none" stroke="#22b30f" stroke-width="1.2"/>
<path d="M1513.5,1352.5 H1515.5" stroke="#000" stroke-width="1.2"/>
<path d="M1485.0,1349.9 L1486.2,1349.9 L1487.0,1350.9 L1488.2,1350.9 L1488.9,1351.9 L1490.2,1351.9 L1490.2,1353.1 L1487.0,1353.1 L1487.0,1354.1 L1485.0,1354.1 Z" fill="#000"/>
<path d="M1491.5,1356.5 L1515.5,1356.5" fill="none" stroke="#22b30f" stroke-width="1.2"/>
<path d="M1513.5,1356.5 H1515.5" stroke="#000" stroke-width="1.2"/>
<path d="M1490.0,1353.9 L1491.2,1353.9 L1492.0,1354.9 L1493.2,1354.9 L1493.9,1355.9 L1495.2,1355.9 L1495.2,1357.1 L1492.0,1357.1 L1492.0,1358.1 L1490.0,1358.1 Z" fill="#000"/>
<path d="M1485.5,1361.5 L1515.5,1361.5" fill="none" stroke="#22b30f" stroke-width="1.2"/>
<path d="M1513.5,1361.5 H1515.5" stroke="#000" stroke-width="1.2"/>
<path d="M1485.0,1358.9 L1486.2,1358.9 L1487.0,1359.9 L1488.2,1359.9 L1488.9,1360.9 L1490.2,1360.9 L1490.2,1362.1 L1487.0,1362.1 L1487.0,1363.1 L1485.0,1363.1 Z" fill="#000"/>
<path d="M1491.5,1365.5 L1515.5,1365.5" fill="none" stroke="#22b30f" stroke-width="1.2"/>
<path d="M1513.5,1365.5 H1515.5" stroke="#000" stroke-width="1.2"/>
<path d="M1490.0,1362.9 L1491.2,1362.9 L1492.0,1363.9 L1493.2,1363.9 L1493.9,1364.9 L1495.2,1364.9 L1495.2,1366.1 L1492.0,1366.1 L1492.0,1367.1 L1490.0,1367.1 Z" fill="#000"/>
<path d="M1485.5,1370.5 L1515.5,1370.5" fill="none" stroke="#22b30f" stroke-width="1.2"/>
<path d="M1513.5,1370.5 H1515.5" stroke="#000" stroke-width="1.2"/>
<path d="M1485.0,1367.9 L1486.2,1367.9 L1487.0,1368.9 L1488.2,1368.9 L1488.9,1369.9 L1490.2,1369.9 L1490.2,1371.1 L1487.0,1371.1 L1487.0,1372.1 L1485.0,1372.1 Z" fill="#000"/>
<rect x="1515.5" y="1345.5" width="14" height="27" fill="#fffccc" stroke="#000" stroke-width="1.3"/>
<path d="M1491.5,1482.5 L1515.5,1482.5" fill="none" stroke="#22b30f" stroke-width="1.2"/>
<path d="M1513.5,1482.5 H1515.5" stroke="#000" stroke-width="1.2"/>
<path d="M1490.0,1479.9 L1491.2,1479.9 L1492.0,1480.9 L1493.2,1480.9 L1493.9,1481.9 L1495.2,1481.9 L1495.2,1483.1 L1492.0,1483.1 L1492.0,1484.1 L1490.0,1484.1 Z" fill="#000"/>
<path d="M1485.5,1487.5 L1515.5,1487.5" fill="none" stroke="#22b30f" stroke-width="1.2"/>
<path d="M1513.5,1487.5 H1515.5" stroke="#000" stroke-width="1.2"/>
<path d="M1485.0,1484.9 L1486.2,1484.9 L1487.0,1485.9 L1488.2,1485.9 L1488.9,1486.9 L1490.2,1486.9 L1490.2,1488.1 L1487.0,1488.1 L1487.0,1489.1 L1485.0,1489.1 Z" fill="#000"/>
<path d="M1491.5,1491.5 L1515.5,1491.5" fill="none" stroke="#22b30f" stroke-width="1.2"/>
<path d="M1513.5,1491.5 H1515.5" stroke="#000" stroke-width="1.2"/>
<path d="M1490.0,1488.9 L1491.2,1488.9 L1492.0,1489.9 L1493.2,1489.9 L1493.9,1490.9 L1495.2,1490.9 L1495.2,1492.1 L1492.0,1492.1 L1492.0,1493.1 L1490.0,1493.1 Z" fill="#000"/>
<path d="M1485.5,1496.5 L1515.5,1496.5" fill="none" stroke="#22b30f" stroke-width="1.2"/>
<path d="M1513.5,1496.5 H1515.5" stroke="#000" stroke-width="1.2"/>
<path d="M1485.0,1493.9 L1486.2,1493.9 L1487.0,1494.9 L1488.2,1494.9 L1488.9,1495.9 L1490.2,1495.9 L1490.2,1497.1 L1487.0,1497.1 L1487.0,1498.1 L1485.0,1498.1 Z" fill="#000"/>
<path d="M1491.5,1500.5 L1515.5,1500.5" fill="none" stroke="#22b30f" stroke-width="1.2"/>
<path d="M1513.5,1500.5 H1515.5" stroke="#000" stroke-width="1.2"/>
<path d="M1490.0,1497.9 L1491.2,1497.9 L1492.0,1498.9 L1493.2,1498.9 L1493.9,1499.9 L1495.2,1499.9 L1495.2,1501.1 L1492.0,1501.1 L1492.0,1502.1 L1490.0,1502.1 Z" fill="#000"/>
<path d="M1485.5,1505.5 L1515.5,1505.5" fill="none" stroke="#22b30f" stroke-width="1.2"/>
<path d="M1513.5,1505.5 H1515.5" stroke="#000" stroke-width="1.2"/>
<path d="M1485.0,1502.9 L1486.2,1502.9 L1487.0,1503.9 L1488.2,1503.9 L1488.9,1504.9 L1490.2,1504.9 L1490.2,1506.1 L1487.0,1506.1 L1487.0,1507.1 L1485.0,1507.1 Z" fill="#000"/>
<rect x="1515.5" y="1480.5" width="14" height="27" fill="#fffccc" stroke="#000" stroke-width="1.3"/>
<path d="M1491.5,1523.5 L1515.5,1523.5" fill="none" stroke="#22b30f" stroke-width="1.2"/>
<path d="M1513.5,1523.5 H1515.5" stroke="#000" stroke-width="1.2"/>
<path d="M1490.0,1520.9 L1491.2,1520.9 L1492.0,1521.9 L1493.2,1521.9 L1493.9,1522.9 L1495.2,1522.9 L1495.2,1524.1 L1492.0,1524.1 L1492.0,1525.1 L1490.0,1525.1 Z" fill="#000"/>
<path d="M1485.5,1528.5 L1515.5,1528.5" fill="none" stroke="#22b30f" stroke-width="1.2"/>
<path d="M1513.5,1528.5 H1515.5" stroke="#000" stroke-width="1.2"/>
<path d="M1485.0,1525.9 L1486.2,1525.9 L1487.0,1526.9 L1488.2,1526.9 L1488.9,1527.9 L1490.2,1527.9 L1490.2,1529.1 L1487.0,1529.1 L1487.0,1530.1 L1485.0,1530.1 Z" fill="#000"/>
<path d="M1491.5,1532.5 L1515.5,1532.5" fill="none" stroke="#22b30f" stroke-width="1.2"/>
<path d="M1513.5,1532.5 H1515.5" stroke="#000" stroke-width="1.2"/>
<path d="M1490.0,1529.9 L1491.2,1529.9 L1492.0,1530.9 L1493.2,1530.9 L1493.9,1531.9 L1495.2,1531.9 L1495.2,1533.1 L1492.0,1533.1 L1492.0,1534.1 L1490.0,1534.1 Z" fill="#000"/>
<path d="M1485.5,1537.5 L1515.5,1537.5" fill="none" stroke="#22b30f" stroke-width="1.2"/>
<path d="M1513.5,1537.5 H1515.5" stroke="#000" stroke-width="1.2"/>
<path d="M1485.0,1534.9 L1486.2,1534.9 L1487.0,1535.9 L1488.2,1535.9 L1488.9,1536.9 L1490.2,1536.9 L1490.2,1538.1 L1487.0,1538.1 L1487.0,1539.1 L1485.0,1539.1 Z" fill="#000"/>
<path d="M1491.5,1541.5 L1515.5,1541.5" fill="none" stroke="#22b30f" stroke-width="1.2"/>
<path d="M1513.5,1541.5 H1515.5" stroke="#000" stroke-width="1.2"/>
<path d="M1490.0,1538.9 L1491.2,1538.9 L1492.0,1539.9 L1493.2,1539.9 L1493.9,1540.9 L1495.2,1540.9 L1495.2,1542.1 L1492.0,1542.1 L1492.0,1543.1 L1490.0,1543.1 Z" fill="#000"/>
<path d="M1485.5,1546.5 L1515.5,1546.5" fill="none" stroke="#22b30f" stroke-width="1.2"/>
<path d="M1513.5,1546.5 H1515.5" stroke="#000" stroke-width="1.2"/>
<path d="M1485.0,1543.9 L1486.2,1543.9 L1487.0,1544.9 L1488.2,1544.9 L1488.9,1545.9 L1490.2,1545.9 L1490.2,1547.1 L1487.0,1547.1 L1487.0,1548.1 L1485.0,1548.1 Z" fill="#000"/>
<rect x="1515.5" y="1521.5" width="14" height="27" fill="#fffccc" stroke="#000" stroke-width="1.3"/>
<path d="M1491.5,1562.5 L1515.5,1562.5" fill="none" stroke="#22b30f" stroke-width="1.2"/>
<path d="M1513.5,1562.5 H1515.5" stroke="#000" stroke-width="1.2"/>
<path d="M1490.0,1559.9 L1491.2,1559.9 L1492.0,1560.9 L1493.2,1560.9 L1493.9,1561.9 L1495.2,1561.9 L1495.2,1563.1 L1492.0,1563.1 L1492.0,1564.1 L1490.0,1564.1 Z" fill="#000"/>
<path d="M1485.5,1567.5 L1515.5,1567.5" fill="none" stroke="#22b30f" stroke-width="1.2"/>
<path d="M1513.5,1567.5 H1515.5" stroke="#000" stroke-width="1.2"/>
<path d="M1485.0,1564.9 L1486.2,1564.9 L1487.0,1565.9 L1488.2,1565.9 L1488.9,1566.9 L1490.2,1566.9 L1490.2,1568.1 L1487.0,1568.1 L1487.0,1569.1 L1485.0,1569.1 Z" fill="#000"/>
<path d="M1491.5,1571.5 L1515.5,1571.5" fill="none" stroke="#22b30f" stroke-width="1.2"/>
<path d="M1513.5,1571.5 H1515.5" stroke="#000" stroke-width="1.2"/>
<path d="M1490.0,1568.9 L1491.2,1568.9 L1492.0,1569.9 L1493.2,1569.9 L1493.9,1570.9 L1495.2,1570.9 L1495.2,1572.1 L1492.0,1572.1 L1492.0,1573.1 L1490.0,1573.1 Z" fill="#000"/>
<path d="M1485.5,1576.5 L1515.5,1576.5" fill="none" stroke="#22b30f" stroke-width="1.2"/>
<path d="M1513.5,1576.5 H1515.5" stroke="#000" stroke-width="1.2"/>
<path d="M1485.0,1573.9 L1486.2,1573.9 L1487.0,1574.9 L1488.2,1574.9 L1488.9,1575.9 L1490.2,1575.9 L1490.2,1577.1 L1487.0,1577.1 L1487.0,1578.1 L1485.0,1578.1 Z" fill="#000"/>
<path d="M1491.5,1580.5 L1515.5,1580.5" fill="none" stroke="#22b30f" stroke-width="1.2"/>
<path d="M1513.5,1580.5 H1515.5" stroke="#000" stroke-width="1.2"/>
<path d="M1490.0,1577.9 L1491.2,1577.9 L1492.0,1578.9 L1493.2,1578.9 L1493.9,1579.9 L1495.2,1579.9 L1495.2,1581.1 L1492.0,1581.1 L1492.0,1582.1 L1490.0,1582.1 Z" fill="#000"/>
<path d="M1485.5,1585.5 L1515.5,1585.5" fill="none" stroke="#22b30f" stroke-width="1.2"/>
<path d="M1513.5,1585.5 H1515.5" stroke="#000" stroke-width="1.2"/>
<path d="M1485.0,1582.9 L1486.2,1582.9 L1487.0,1583.9 L1488.2,1583.9 L1488.9,1584.9 L1490.2,1584.9 L1490.2,1586.1 L1487.0,1586.1 L1487.0,1587.1 L1485.0,1587.1 Z" fill="#000"/>
<rect x="1515.5" y="1560.5" width="14" height="27" fill="#fffccc" stroke="#000" stroke-width="1.3"/>
<path d="M1491.5,1600.5 L1515.5,1600.5" fill="none" stroke="#22b30f" stroke-width="1.2"/>
<path d="M1513.5,1600.5 H1515.5" stroke="#000" stroke-width="1.2"/>
<path d="M1490.0,1597.9 L1491.2,1597.9 L1492.0,1598.9 L1493.2,1598.9 L1493.9,1599.9 L1495.2,1599.9 L1495.2,1601.1 L1492.0,1601.1 L1492.0,1602.1 L1490.0,1602.1 Z" fill="#000"/>
<path d="M1485.5,1605.5 L1515.5,1605.5" fill="none" stroke="#22b30f" stroke-width="1.2"/>
<path d="M1513.5,1605.5 H1515.5" stroke="#000" stroke-width="1.2"/>
<path d="M1485.0,1602.9 L1486.2,1602.9 L1487.0,1603.9 L1488.2,1603.9 L1488.9,1604.9 L1490.2,1604.9 L1490.2,1606.1 L1487.0,1606.1 L1487.0,1607.1 L1485.0,1607.1 Z" fill="#000"/>
<path d="M1491.5,1609.5 L1515.5,1609.5" fill="none" stroke="#22b30f" stroke-width="1.2"/>
<path d="M1513.5,1609.5 H1515.5" stroke="#000" stroke-width="1.2"/>
<path d="M1490.0,1606.9 L1491.2,1606.9 L1492.0,1607.9 L1493.2,1607.9 L1493.9,1608.9 L1495.2,1608.9 L1495.2,1610.1 L1492.0,1610.1 L1492.0,1611.1 L1490.0,1611.1 Z" fill="#000"/>
<path d="M1485.5,1614.5 L1515.5,1614.5" fill="none" stroke="#22b30f" stroke-width="1.2"/>
<path d="M1513.5,1614.5 H1515.5" stroke="#000" stroke-width="1.2"/>
<path d="M1485.0,1611.9 L1486.2,1611.9 L1487.0,1612.9 L1488.2,1612.9 L1488.9,1613.9 L1490.2,1613.9 L1490.2,1615.1 L1487.0,1615.1 L1487.0,1616.1 L1485.0,1616.1 Z" fill="#000"/>
<path d="M1491.5,1618.5 L1515.5,1618.5" fill="none" stroke="#22b30f" stroke-width="1.2"/>
<path d="M1513.5,1618.5 H1515.5" stroke="#000" stroke-width="1.2"/>
<path d="M1490.0,1615.9 L1491.2,1615.9 L1492.0,1616.9 L1493.2,1616.9 L1493.9,1617.9 L1495.2,1617.9 L1495.2,1619.1 L1492.0,1619.1 L1492.0,1620.1 L1490.0,1620.1 Z" fill="#000"/>
<path d="M1485.5,1623.5 L1515.5,1623.5" fill="none" stroke="#22b30f" stroke-width="1.2"/>
<path d="M1513.5,1623.5 H1515.5" stroke="#000" stroke-width="1.2"/>
<path d="M1485.0,1620.9 L1486.2,1620.9 L1487.0,1621.9 L1488.2,1621.9 L1488.9,1622.9 L1490.2,1622.9 L1490.2,1624.1 L1487.0,1624.1 L1487.0,1625.1 L1485.0,1625.1 Z" fill="#000"/>
<rect x="1515.5" y="1598.5" width="14" height="27" fill="#fffccc" stroke="#000" stroke-width="1.3"/>
<path d="M1515.5,1385.5 L1525.2,1389.6 L1525.2,1396.0 L1515.5,1400.1 Z" fill="#fffccc" stroke="#000" stroke-width="1.2"/>
<path d="M1515.5,1412.5 L1525.2,1416.6 L1525.2,1423.0 L1515.5,1427.1 Z" fill="#fffccc" stroke="#000" stroke-width="1.2"/>
<path d="M1515.5,1453.5 L1525.2,1457.6 L1525.2,1464.0 L1515.5,1468.1 Z" fill="#fffccc" stroke="#000" stroke-width="1.2"/>
<path d="M1486,1407 L1560,1407" fill="none" stroke="#0b850b" stroke-width="2.2"/>
<circle cx="1486" cy="1407" r="2.6" fill="#0b850b"/>
<circle cx="1560" cy="1407" r="2.6" fill="#0b850b"/>
<path d="M1520.5,1400.5 L1520.5,1406.5" fill="none" stroke="#22b30f" stroke-width="1.2"/>
<path d="M1486,1433 L1520,1433" fill="none" stroke="#0b850b" stroke-width="2.2"/>
<circle cx="1486" cy="1433" r="2.6" fill="#0b850b"/>
<path d="M1520.5,1427.5 L1520.5,1433.5" fill="none" stroke="#22b30f" stroke-width="1.2"/>
<path d="M1486,1475 L1520,1475" fill="none" stroke="#0b850b" stroke-width="2.2"/>
<circle cx="1486" cy="1475" r="2.6" fill="#0b850b"/>
<path d="M1520.5,1468.5 L1520.5,1474.5" fill="none" stroke="#22b30f" stroke-width="1.2"/>
<path d="M1491,1515 L1556,1515" fill="none" stroke="#0b850b" stroke-width="2.2"/>
<circle cx="1491" cy="1515" r="2.6" fill="#0b850b"/>
<circle cx="1556" cy="1515" r="2.6" fill="#0b850b"/>
<path d="M1556,1394 L1556,1690" fill="none" stroke="#0b850b" stroke-width="2.2"/>
<path d="M1560,1335 L1560,1686" fill="none" stroke="#0b850b" stroke-width="2.2"/>
<path d="M1459.5,1306.5 L1496.5,1306.5 L1496.5,1391.5 L1515.5,1391.5" fill="none" stroke="#22b30f" stroke-width="1.2"/>
<path d="M1496.5,1331.5 L1592.5,1331.5" fill="none" stroke="#22b30f" stroke-width="1.2"/>
<circle cx="1496.5" cy="1331.5" r="2.0" fill="#22b30f"/>
<circle cx="1565.5" cy="1331.5" r="2.0" fill="#22b30f"/>
<path d="M1565.5,1331.5 L1565.5,1458.5 L1592.5,1458.5" fill="none" stroke="#22b30f" stroke-width="1.2"/>
<circle cx="1565.5" cy="1374.5" r="2.0" fill="#22b30f"/>
<path d="M1565.5,1374.5 L1592.5,1374.5" fill="none" stroke="#22b30f" stroke-width="1.2"/>
<path d="M1459.5,1345.5 L1481.5,1345.5 L1481.5,1396.5 L1515.5,1396.5" fill="none" stroke="#22b30f" stroke-width="1.2"/>
<path d="M1481.5,1380.5 L1569.5,1380.5" fill="none" stroke="#22b30f" stroke-width="1.2"/>
<circle cx="1481.5" cy="1380.5" r="2.0" fill="#22b30f"/>
<circle cx="1569.5" cy="1380.5" r="2.0" fill="#22b30f"/>
<path d="M1569.5,1341.5 L1592.5,1341.5" fill="none" stroke="#22b30f" stroke-width="1.2"/>
<path d="M1569.5,1341.5 L1569.5,1449.5 L1592.5,1449.5" fill="none" stroke="#22b30f" stroke-width="1.2"/>
<path d="M1569.5,1365.5 L1592.5,1365.5" fill="none" stroke="#22b30f" stroke-width="1.2"/>
<circle cx="1569.5" cy="1365.5" r="2.0" fill="#22b30f"/>
<path d="M1459.5,1384.5 L1476.5,1384.5 L1476.5,1418.5 L1515.5,1418.5" fill="none" stroke="#22b30f" stroke-width="1.2"/>
<path d="M1459.5,1422.5 L1515.5,1422.5" fill="none" stroke="#22b30f" stroke-width="1.2"/>
<path d="M1459.5,1461.5 L1476.5,1461.5 L1476.5,1458.5 L1515.5,1458.5" fill="none" stroke="#22b30f" stroke-width="1.2"/>
<path d="M1459.5,1506.5 L1481.5,1506.5 L1481.5,1463.5 L1515.5,1463.5" fill="none" stroke="#22b30f" stroke-width="1.2"/>
<path d="M1529.5,1357.5 L1574.5,1357.5" fill="none" stroke="#22b30f" stroke-width="1.2"/>
<circle cx="1574.5" cy="1357.5" r="2.0" fill="#22b30f"/>
<path d="M1574.5,1345.5 L1574.5,1444.5 L1592.5,1444.5" fill="none" stroke="#22b30f" stroke-width="1.2"/>
<path d="M1574.5,1345.5 L1592.5,1345.5" fill="none" stroke="#22b30f" stroke-width="1.2"/>
<path d="M1574.5,1361.5 L1592.5,1361.5" fill="none" stroke="#22b30f" stroke-width="1.2"/>
<circle cx="1574.5" cy="1361.5" r="2.0" fill="#22b30f"/>
<path d="M1574.5,1410.5 L1592.5,1410.5" fill="none" stroke="#22b30f" stroke-width="1.2"/>
<circle cx="1574.5" cy="1410.5" r="2.0" fill="#22b30f"/>
<path d="M1525.5,1393.5 L1546.5,1393.5 L1546.5,1415.5 L1592.5,1415.5" fill="none" stroke="#22b30f" stroke-width="1.2"/>
<path d="M1525.5,1419.5 L1592.5,1419.5" fill="none" stroke="#22b30f" stroke-width="1.2"/>
<path d="M1525.5,1461.5 L1546.5,1461.5 L1546.5,1429.5 L1592.5,1429.5" fill="none" stroke="#22b30f" stroke-width="1.2"/>
<path d="M1529.5,1492.5 L1592.5,1492.5" fill="none" stroke="#22b30f" stroke-width="1.2"/>
<path d="M1529.5,1532.5 L1546.5,1532.5 L1546.5,1501.5 L1592.5,1501.5" fill="none" stroke="#22b30f" stroke-width="1.2"/>
<path d="M1529.5,1571.5 L1551.5,1571.5 L1551.5,1642.5 L1592.5,1642.5" fill="none" stroke="#22b30f" stroke-width="1.2"/>
<path d="M1551.5,1621.5 L1621.5,1621.5 L1621.5,1617.5 L1669.5,1617.5" fill="none" stroke="#22b30f" stroke-width="1.2"/>
<circle cx="1551.5" cy="1621.5" r="2.0" fill="#22b30f"/>
<path d="M1529.5,1609.5 L1546.5,1609.5 L1546.5,1637.5 L1592.5,1637.5" fill="none" stroke="#22b30f" stroke-width="1.2"/>
<path d="M1546.5,1626.5 L1669.5,1626.5" fill="none" stroke="#22b30f" stroke-width="1.2"/>
<circle cx="1546.5" cy="1626.5" r="2.0" fill="#22b30f"/>
<path d="M1560.5,1336.5 L1592.5,1336.5" fill="none" stroke="#22b30f" stroke-width="1.2"/>
<path d="M1590.5,1336.5 H1592.5" stroke="#000" stroke-width="1.2"/>
<path d="M1559.0,1333.9 L1560.2,1333.9 L1561.0,1334.9 L1562.2,1334.9 L1562.9,1335.9 L1564.2,1335.9 L1564.2,1337.1 L1561.0,1337.1 L1561.0,1338.1 L1559.0,1338.1 Z" fill="#000"/>
<path d="M1560.5,1370.5 L1592.5,1370.5" fill="none" stroke="#22b30f" stroke-width="1.2"/>
<path d="M1590.5,1370.5 H1592.5" stroke="#000" stroke-width="1.2"/>
<path d="M1559.0,1367.9 L1560.2,1367.9 L1561.0,1368.9 L1562.2,1368.9 L1562.9,1369.9 L1564.2,1369.9 L1564.2,1371.1 L1561.0,1371.1 L1561.0,1372.1 L1559.0,1372.1 Z" fill="#000"/>
<path d="M1560.5,1390.5 L1592.5,1390.5" fill="none" stroke="#22b30f" stroke-width="1.2"/>
<path d="M1590.5,1390.5 H1592.5" stroke="#000" stroke-width="1.2"/>
<path d="M1559.0,1387.9 L1560.2,1387.9 L1561.0,1388.9 L1562.2,1388.9 L1562.9,1389.9 L1564.2,1389.9 L1564.2,1391.1 L1561.0,1391.1 L1561.0,1392.1 L1559.0,1392.1 Z" fill="#000"/>
<path d="M1556.5,1395.5 L1592.5,1395.5" fill="none" stroke="#22b30f" stroke-width="1.2"/>
<path d="M1590.5,1395.5 H1592.5" stroke="#000" stroke-width="1.2"/>
<path d="M1555.0,1392.9 L1556.2,1392.9 L1557.0,1393.9 L1558.2,1393.9 L1558.9,1394.9 L1560.2,1394.9 L1560.2,1396.1 L1557.0,1396.1 L1557.0,1397.1 L1555.0,1397.1 Z" fill="#000"/>
<path d="M1556.5,1424.5 L1592.5,1424.5" fill="none" stroke="#22b30f" stroke-width="1.2"/>
<path d="M1590.5,1424.5 H1592.5" stroke="#000" stroke-width="1.2"/>
<path d="M1555.0,1421.9 L1556.2,1421.9 L1557.0,1422.9 L1558.2,1422.9 L1558.9,1423.9 L1560.2,1423.9 L1560.2,1425.1 L1557.0,1425.1 L1557.0,1426.1 L1555.0,1426.1 Z" fill="#000"/>
<path d="M1560.5,1453.5 L1592.5,1453.5" fill="none" stroke="#22b30f" stroke-width="1.2"/>
<path d="M1590.5,1453.5 H1592.5" stroke="#000" stroke-width="1.2"/>
<path d="M1559.0,1450.9 L1560.2,1450.9 L1561.0,1451.9 L1562.2,1451.9 L1562.9,1452.9 L1564.2,1452.9 L1564.2,1454.1 L1561.0,1454.1 L1561.0,1455.1 L1559.0,1455.1 Z" fill="#000"/>
<path d="M1556.5,1463.5 L1592.5,1463.5" fill="none" stroke="#22b30f" stroke-width="1.2"/>
<path d="M1590.5,1463.5 H1592.5" stroke="#000" stroke-width="1.2"/>
<path d="M1555.0,1460.9 L1556.2,1460.9 L1557.0,1461.9 L1558.2,1461.9 L1558.9,1462.9 L1560.2,1462.9 L1560.2,1464.1 L1557.0,1464.1 L1557.0,1465.1 L1555.0,1465.1 Z" fill="#000"/>
<path d="M1560.5,1467.5 L1592.5,1467.5" fill="none" stroke="#22b30f" stroke-width="1.2"/>
<path d="M1590.5,1467.5 H1592.5" stroke="#000" stroke-width="1.2"/>
<path d="M1559.0,1464.9 L1560.2,1464.9 L1561.0,1465.9 L1562.2,1465.9 L1562.9,1466.9 L1564.2,1466.9 L1564.2,1468.1 L1561.0,1468.1 L1561.0,1469.1 L1559.0,1469.1 Z" fill="#000"/>
<path d="M1556.5,1484.5 L1592.5,1484.5" fill="none" stroke="#22b30f" stroke-width="1.2"/>
<path d="M1590.5,1484.5 H1592.5" stroke="#000" stroke-width="1.2"/>
<path d="M1555.0,1481.9 L1556.2,1481.9 L1557.0,1482.9 L1558.2,1482.9 L1558.9,1483.9 L1560.2,1483.9 L1560.2,1485.1 L1557.0,1485.1 L1557.0,1486.1 L1555.0,1486.1 Z" fill="#000"/>
<path d="M1560.5,1487.5 L1592.5,1487.5" fill="none" stroke="#22b30f" stroke-width="1.2"/>
<path d="M1590.5,1487.5 H1592.5" stroke="#000" stroke-width="1.2"/>
<path d="M1559.0,1484.9 L1560.2,1484.9 L1561.0,1485.9 L1562.2,1485.9 L1562.9,1486.9 L1564.2,1486.9 L1564.2,1488.1 L1561.0,1488.1 L1561.0,1489.1 L1559.0,1489.1 Z" fill="#000"/>
<path d="M1560.5,1496.5 L1592.5,1496.5" fill="none" stroke="#22b30f" stroke-width="1.2"/>
<path d="M1590.5,1496.5 H1592.5" stroke="#000" stroke-width="1.2"/>
<path d="M1559.0,1493.9 L1560.2,1493.9 L1561.0,1494.9 L1562.2,1494.9 L1562.9,1495.9 L1564.2,1495.9 L1564.2,1497.1 L1561.0,1497.1 L1561.0,1498.1 L1559.0,1498.1 Z" fill="#000"/>
<path d="M1560.5,1517.5 L1592.5,1517.5" fill="none" stroke="#22b30f" stroke-width="1.2"/>
<path d="M1590.5,1517.5 H1592.5" stroke="#000" stroke-width="1.2"/>
<path d="M1559.0,1514.9 L1560.2,1514.9 L1561.0,1515.9 L1562.2,1515.9 L1562.9,1516.9 L1564.2,1516.9 L1564.2,1518.1 L1561.0,1518.1 L1561.0,1519.1 L1559.0,1519.1 Z" fill="#000"/>
<path d="M1556.5,1521.5 L1592.5,1521.5" fill="none" stroke="#22b30f" stroke-width="1.2"/>
<path d="M1590.5,1521.5 H1592.5" stroke="#000" stroke-width="1.2"/>
<path d="M1555.0,1518.9 L1556.2,1518.9 L1557.0,1519.9 L1558.2,1519.9 L1558.9,1520.9 L1560.2,1520.9 L1560.2,1522.1 L1557.0,1522.1 L1557.0,1523.1 L1555.0,1523.1 Z" fill="#000"/>
<path d="M1560.5,1526.5 L1592.5,1526.5" fill="none" stroke="#22b30f" stroke-width="1.2"/>
<path d="M1590.5,1526.5 H1592.5" stroke="#000" stroke-width="1.2"/>
<path d="M1559.0,1523.9 L1560.2,1523.9 L1561.0,1524.9 L1562.2,1524.9 L1562.9,1525.9 L1564.2,1525.9 L1564.2,1527.1 L1561.0,1527.1 L1561.0,1528.1 L1559.0,1528.1 Z" fill="#000"/>
<path d="M1556.5,1530.5 L1592.5,1530.5" fill="none" stroke="#22b30f" stroke-width="1.2"/>
<path d="M1590.5,1530.5 H1592.5" stroke="#000" stroke-width="1.2"/>
<path d="M1555.0,1527.9 L1556.2,1527.9 L1557.0,1528.9 L1558.2,1528.9 L1558.9,1529.9 L1560.2,1529.9 L1560.2,1531.1 L1557.0,1531.1 L1557.0,1532.1 L1555.0,1532.1 Z" fill="#000"/>
<path d="M1560.5,1535.5 L1592.5,1535.5" fill="none" stroke="#22b30f" stroke-width="1.2"/>
<path d="M1590.5,1535.5 H1592.5" stroke="#000" stroke-width="1.2"/>
<path d="M1559.0,1532.9 L1560.2,1532.9 L1561.0,1533.9 L1562.2,1533.9 L1562.9,1534.9 L1564.2,1534.9 L1564.2,1536.1 L1561.0,1536.1 L1561.0,1537.1 L1559.0,1537.1 Z" fill="#000"/>
<path d="M1556.5,1539.5 L1592.5,1539.5" fill="none" stroke="#22b30f" stroke-width="1.2"/>
<path d="M1590.5,1539.5 H1592.5" stroke="#000" stroke-width="1.2"/>
<path d="M1555.0,1536.9 L1556.2,1536.9 L1557.0,1537.9 L1558.2,1537.9 L1558.9,1538.9 L1560.2,1538.9 L1560.2,1540.1 L1557.0,1540.1 L1557.0,1541.1 L1555.0,1541.1 Z" fill="#000"/>
<path d="M1556.5,1555.5 L1592.5,1555.5" fill="none" stroke="#22b30f" stroke-width="1.2"/>
<path d="M1590.5,1555.5 H1592.5" stroke="#000" stroke-width="1.2"/>
<path d="M1555.0,1552.9 L1556.2,1552.9 L1557.0,1553.9 L1558.2,1553.9 L1558.9,1554.9 L1560.2,1554.9 L1560.2,1556.1 L1557.0,1556.1 L1557.0,1557.1 L1555.0,1557.1 Z" fill="#000"/>
<path d="M1560.5,1560.5 L1592.5,1560.5" fill="none" stroke="#22b30f" stroke-width="1.2"/>
<path d="M1590.5,1560.5 H1592.5" stroke="#000" stroke-width="1.2"/>
<path d="M1559.0,1557.9 L1560.2,1557.9 L1561.0,1558.9 L1562.2,1558.9 L1562.9,1559.9 L1564.2,1559.9 L1564.2,1561.1 L1561.0,1561.1 L1561.0,1562.1 L1559.0,1562.1 Z" fill="#000"/>
<path d="M1556.5,1564.5 L1592.5,1564.5" fill="none" stroke="#22b30f" stroke-width="1.2"/>
<path d="M1590.5,1564.5 H1592.5" stroke="#000" stroke-width="1.2"/>
<path d="M1555.0,1561.9 L1556.2,1561.9 L1557.0,1562.9 L1558.2,1562.9 L1558.9,1563.9 L1560.2,1563.9 L1560.2,1565.1 L1557.0,1565.1 L1557.0,1566.1 L1555.0,1566.1 Z" fill="#000"/>
<path d="M1560.5,1569.5 L1592.5,1569.5" fill="none" stroke="#22b30f" stroke-width="1.2"/>
<path d="M1590.5,1569.5 H1592.5" stroke="#000" stroke-width="1.2"/>
<path d="M1559.0,1566.9 L1560.2,1566.9 L1561.0,1567.9 L1562.2,1567.9 L1562.9,1568.9 L1564.2,1568.9 L1564.2,1570.1 L1561.0,1570.1 L1561.0,1571.1 L1559.0,1571.1 Z" fill="#000"/>
<path d="M1556.5,1574.5 L1592.5,1574.5" fill="none" stroke="#22b30f" stroke-width="1.2"/>
<path d="M1590.5,1574.5 H1592.5" stroke="#000" stroke-width="1.2"/>
<path d="M1555.0,1571.9 L1556.2,1571.9 L1557.0,1572.9 L1558.2,1572.9 L1558.9,1573.9 L1560.2,1573.9 L1560.2,1575.1 L1557.0,1575.1 L1557.0,1576.1 L1555.0,1576.1 Z" fill="#000"/>
<path d="M1560.5,1589.5 L1592.5,1589.5" fill="none" stroke="#22b30f" stroke-width="1.2"/>
<path d="M1590.5,1589.5 H1592.5" stroke="#000" stroke-width="1.2"/>
<path d="M1559.0,1586.9 L1560.2,1586.9 L1561.0,1587.9 L1562.2,1587.9 L1562.9,1588.9 L1564.2,1588.9 L1564.2,1590.1 L1561.0,1590.1 L1561.0,1591.1 L1559.0,1591.1 Z" fill="#000"/>
<path d="M1556.5,1594.5 L1592.5,1594.5" fill="none" stroke="#22b30f" stroke-width="1.2"/>
<path d="M1590.5,1594.5 H1592.5" stroke="#000" stroke-width="1.2"/>
<path d="M1555.0,1591.9 L1556.2,1591.9 L1557.0,1592.9 L1558.2,1592.9 L1558.9,1593.9 L1560.2,1593.9 L1560.2,1595.1 L1557.0,1595.1 L1557.0,1596.1 L1555.0,1596.1 Z" fill="#000"/>
<path d="M1560.5,1598.5 L1592.5,1598.5" fill="none" stroke="#22b30f" stroke-width="1.2"/>
<path d="M1590.5,1598.5 H1592.5" stroke="#000" stroke-width="1.2"/>
<path d="M1559.0,1595.9 L1560.2,1595.9 L1561.0,1596.9 L1562.2,1596.9 L1562.9,1597.9 L1564.2,1597.9 L1564.2,1599.1 L1561.0,1599.1 L1561.0,1600.1 L1559.0,1600.1 Z" fill="#000"/>
<path d="M1556.5,1603.5 L1592.5,1603.5" fill="none" stroke="#22b30f" stroke-width="1.2"/>
<path d="M1590.5,1603.5 H1592.5" stroke="#000" stroke-width="1.2"/>
<path d="M1555.0,1600.9 L1556.2,1600.9 L1557.0,1601.9 L1558.2,1601.9 L1558.9,1602.9 L1560.2,1602.9 L1560.2,1604.1 L1557.0,1604.1 L1557.0,1605.1 L1555.0,1605.1 Z" fill="#000"/>
<path d="M1560.5,1608.5 L1592.5,1608.5" fill="none" stroke="#22b30f" stroke-width="1.2"/>
<path d="M1590.5,1608.5 H1592.5" stroke="#000" stroke-width="1.2"/>
<path d="M1559.0,1605.9 L1560.2,1605.9 L1561.0,1606.9 L1562.2,1606.9 L1562.9,1607.9 L1564.2,1607.9 L1564.2,1609.1 L1561.0,1609.1 L1561.0,1610.1 L1559.0,1610.1 Z" fill="#000"/>
<path d="M1556.5,1612.5 L1592.5,1612.5" fill="none" stroke="#22b30f" stroke-width="1.2"/>
<path d="M1590.5,1612.5 H1592.5" stroke="#000" stroke-width="1.2"/>
<path d="M1555.0,1609.9 L1556.2,1609.9 L1557.0,1610.9 L1558.2,1610.9 L1558.9,1611.9 L1560.2,1611.9 L1560.2,1613.1 L1557.0,1613.1 L1557.0,1614.1 L1555.0,1614.1 Z" fill="#000"/>
<path d="M1560.5,1666.5 L1592.5,1666.5" fill="none" stroke="#22b30f" stroke-width="1.2"/>
<path d="M1590.5,1666.5 H1592.5" stroke="#000" stroke-width="1.2"/>
<path d="M1559.0,1663.9 L1560.2,1663.9 L1561.0,1664.9 L1562.2,1664.9 L1562.9,1665.9 L1564.2,1665.9 L1564.2,1667.1 L1561.0,1667.1 L1561.0,1668.1 L1559.0,1668.1 Z" fill="#000"/>
<path d="M1556.5,1671.5 L1592.5,1671.5" fill="none" stroke="#22b30f" stroke-width="1.2"/>
<path d="M1590.5,1671.5 H1592.5" stroke="#000" stroke-width="1.2"/>
<path d="M1555.0,1668.9 L1556.2,1668.9 L1557.0,1669.9 L1558.2,1669.9 L1558.9,1670.9 L1560.2,1670.9 L1560.2,1672.1 L1557.0,1672.1 L1557.0,1673.1 L1555.0,1673.1 Z" fill="#000"/>
<path d="M1560.5,1676.5 L1592.5,1676.5" fill="none" stroke="#22b30f" stroke-width="1.2"/>
<path d="M1590.5,1676.5 H1592.5" stroke="#000" stroke-width="1.2"/>
<path d="M1559.0,1673.9 L1560.2,1673.9 L1561.0,1674.9 L1562.2,1674.9 L1562.9,1675.9 L1564.2,1675.9 L1564.2,1677.1 L1561.0,1677.1 L1561.0,1678.1 L1559.0,1678.1 Z" fill="#000"/>
<path d="M1556.5,1680.5 L1592.5,1680.5" fill="none" stroke="#22b30f" stroke-width="1.2"/>
<path d="M1590.5,1680.5 H1592.5" stroke="#000" stroke-width="1.2"/>
<path d="M1555.0,1677.9 L1556.2,1677.9 L1557.0,1678.9 L1558.2,1678.9 L1558.9,1679.9 L1560.2,1679.9 L1560.2,1681.1 L1557.0,1681.1 L1557.0,1682.1 L1555.0,1682.1 Z" fill="#000"/>
<path d="M1560.5,1684.5 L1592.5,1684.5" fill="none" stroke="#22b30f" stroke-width="1.2"/>
<path d="M1590.5,1684.5 H1592.5" stroke="#000" stroke-width="1.2"/>
<path d="M1559.0,1681.9 L1560.2,1681.9 L1561.0,1682.9 L1562.2,1682.9 L1562.9,1683.9 L1564.2,1683.9 L1564.2,1685.1 L1561.0,1685.1 L1561.0,1686.1 L1559.0,1686.1 Z" fill="#000"/>
<path d="M1556.5,1689.5 L1592.5,1689.5" fill="none" stroke="#22b30f" stroke-width="1.2"/>
<path d="M1590.5,1689.5 H1592.5" stroke="#000" stroke-width="1.2"/>
<path d="M1555.0,1686.9 L1556.2,1686.9 L1557.0,1687.9 L1558.2,1687.9 L1558.9,1688.9 L1560.2,1688.9 L1560.2,1690.1 L1557.0,1690.1 L1557.0,1691.1 L1555.0,1691.1 Z" fill="#000"/>
<path d="M1590.5,1331.5 H1592.5" stroke="#000" stroke-width="1.2"/>
<path d="M1590.5,1341.5 H1592.5" stroke="#000" stroke-width="1.2"/>
<path d="M1590.5,1345.5 H1592.5" stroke="#000" stroke-width="1.2"/>
<path d="M1590.5,1361.5 H1592.5" stroke="#000" stroke-width="1.2"/>
<path d="M1590.5,1365.5 H1592.5" stroke="#000" stroke-width="1.2"/>
<path d="M1590.5,1374.5 H1592.5" stroke="#000" stroke-width="1.2"/>
<path d="M1590.5,1410.5 H1592.5" stroke="#000" stroke-width="1.2"/>
<path d="M1590.5,1415.5 H1592.5" stroke="#000" stroke-width="1.2"/>
<path d="M1590.5,1419.5 H1592.5" stroke="#000" stroke-width="1.2"/>
<path d="M1590.5,1429.5 H1592.5" stroke="#000" stroke-width="1.2"/>
<path d="M1590.5,1444.5 H1592.5" stroke="#000" stroke-width="1.2"/>
<path d="M1590.5,1449.5 H1592.5" stroke="#000" stroke-width="1.2"/>
<path d="M1590.5,1458.5 H1592.5" stroke="#000" stroke-width="1.2"/>
<path d="M1590.5,1492.5 H1592.5" stroke="#000" stroke-width="1.2"/>
<path d="M1590.5,1501.5 H1592.5" stroke="#000" stroke-width="1.2"/>
<path d="M1590.5,1637.5 H1592.5" stroke="#000" stroke-width="1.2"/>
<path d="M1590.5,1642.5 H1592.5" stroke="#000" stroke-width="1.2"/>
<rect x="1592.5" y="1329.5" width="14" height="18" fill="#fffccc" stroke="#000" stroke-width="1.3"/>
<rect x="1592.5" y="1358.5" width="14" height="18" fill="#fffccc" stroke="#000" stroke-width="1.3"/>
<rect x="1592.5" y="1388.5" width="14" height="9" fill="#fffccc" stroke="#000" stroke-width="1.3"/>
<rect x="1592.5" y="1408.5" width="14" height="23" fill="#fffccc" stroke="#000" stroke-width="1.3"/>
<rect x="1592.5" y="1443.5" width="14" height="27" fill="#fffccc" stroke="#000" stroke-width="1.3"/>
<rect x="1592.5" y="1480.5" width="14" height="23" fill="#fffccc" stroke="#000" stroke-width="1.3"/>
<rect x="1592.5" y="1514.5" width="14" height="27" fill="#fffccc" stroke="#000" stroke-width="1.3"/>
<rect x="1592.5" y="1553.5" width="14" height="23" fill="#fffccc" stroke="#000" stroke-width="1.3"/>
<rect x="1592.5" y="1587.5" width="14" height="27" fill="#fffccc" stroke="#000" stroke-width="1.3"/>
<rect x="1592.5" y="1664.5" width="14" height="27" fill="#fffccc" stroke="#000" stroke-width="1.3"/>
<path d="M1592.5,1632.5 L1602.3,1636.5 L1602.3,1642.7 L1592.5,1646.7 Z" fill="#fffccc" stroke="#000" stroke-width="1.2"/>
<path d="M1606.5,1336.5 L1647.5,1336.5" fill="none" stroke="#22b30f" stroke-width="1.2"/>
<path d="M1644.5,1335.9 L1646.8,1334.7 L1649.2,1334.7 L1649.2,1338.3 L1646.8,1338.3 L1644.5,1337.1 Z" fill="#000"/>
<path d="M1606.5,1365.5 L1647.5,1365.5" fill="none" stroke="#22b30f" stroke-width="1.2"/>
<path d="M1644.5,1364.9 L1646.8,1363.7 L1649.2,1363.7 L1649.2,1367.3 L1646.8,1367.3 L1644.5,1366.1 Z" fill="#000"/>
<path d="M1606.5,1390.5 L1647.5,1390.5" fill="none" stroke="#22b30f" stroke-width="1.2"/>
<path d="M1644.5,1389.9 L1646.8,1388.7 L1649.2,1388.7 L1649.2,1392.3 L1646.8,1392.3 L1644.5,1391.1 Z" fill="#000"/>
<path d="M1606.5,1419.5 L1643.5,1419.5" fill="none" stroke="#22b30f" stroke-width="1.2"/>
<path d="M1639.5,1418.9 L1641.8,1417.7 L1644.2,1417.7 L1644.2,1421.3 L1641.8,1421.3 L1639.5,1420.1 Z" fill="#000"/>
<path d="M1606.5,1453.5 L1643.5,1453.5" fill="none" stroke="#22b30f" stroke-width="1.2"/>
<path d="M1639.5,1452.9 L1641.8,1451.7 L1644.2,1451.7 L1644.2,1455.3 L1641.8,1455.3 L1639.5,1454.1 Z" fill="#000"/>
<path d="M1606.5,1492.5 L1643.5,1492.5" fill="none" stroke="#22b30f" stroke-width="1.2"/>
<path d="M1639.5,1491.9 L1641.8,1490.7 L1644.2,1490.7 L1644.2,1494.3 L1641.8,1494.3 L1639.5,1493.1 Z" fill="#000"/>
<path d="M1606.5,1526.5 L1643.5,1526.5" fill="none" stroke="#22b30f" stroke-width="1.2"/>
<path d="M1639.5,1525.9 L1641.8,1524.7 L1644.2,1524.7 L1644.2,1528.3 L1641.8,1528.3 L1639.5,1527.1 Z" fill="#000"/>
<path d="M1648,1336 L1648,1580 L1669,1580" fill="none" stroke="#0b850b" stroke-width="2.2"/>
<path d="M1643,1419 L1643,1585 L1669,1585" fill="none" stroke="#0b850b" stroke-width="2.2"/>
<path d="M1606.5,1565.5 L1639.5,1565.5 L1639.5,1650.5 L1669.5,1650.5" fill="none" stroke="#22b30f" stroke-width="1.2"/>
<path d="M1639.5,1604.5 L1669.5,1604.5" fill="none" stroke="#22b30f" stroke-width="1.2"/>
<circle cx="1639.5" cy="1604.5" r="2.0" fill="#22b30f"/>
<path d="M1606.5,1598.5 L1630.5,1598.5 L1630.5,1646.5 L1669.5,1646.5" fill="none" stroke="#22b30f" stroke-width="1.2"/>
<path d="M1630.5,1607.5 L1669.5,1607.5" fill="none" stroke="#22b30f" stroke-width="1.2"/>
<circle cx="1630.5" cy="1607.5" r="2.0" fill="#22b30f"/>
<path d="M1602.5,1639.5 L1621.5,1639.5 L1621.5,1642.5 L1669.5,1642.5" fill="none" stroke="#22b30f" stroke-width="1.2"/>
<path d="M1606.5,1676.5 L1648.5,1676.5 L1648.5,1660.5 L1669.5,1660.5" fill="none" stroke="#22b30f" stroke-width="1.2"/>
<path d="M1597.5,1647.5 L1597.5,1652.5" fill="none" stroke="#22b30f" stroke-width="1.2"/>
<path d="M1560,1652 L1635,1652" fill="none" stroke="#0b850b" stroke-width="2.2"/>
<circle cx="1560" cy="1652" r="2.6" fill="#0b850b"/>
<circle cx="1635" cy="1652" r="2.6" fill="#0b850b"/>
<path d="M1556,1657 L1626,1657" fill="none" stroke="#0b850b" stroke-width="2.2"/>
<circle cx="1556" cy="1657" r="2.6" fill="#0b850b"/>
<circle cx="1626" cy="1657" r="2.6" fill="#0b850b"/>
<path d="M1626,1612 L1626,1665" fill="none" stroke="#0b850b" stroke-width="2.2"/>
<path d="M1635,1621 L1635,1656" fill="none" stroke="#0b850b" stroke-width="2.2"/>
<path d="M1626.5,1612.5 L1669.5,1612.5" fill="none" stroke="#22b30f" stroke-width="1.2"/>
<path d="M1667.5,1612.5 H1669.5" stroke="#000" stroke-width="1.2"/>
<path d="M1625.0,1609.9 L1626.2,1609.9 L1627.0,1610.9 L1628.2,1610.9 L1628.9,1611.9 L1630.2,1611.9 L1630.2,1613.1 L1627.0,1613.1 L1627.0,1614.1 L1625.0,1614.1 Z" fill="#000"/>
<path d="M1635.5,1621.5 L1669.5,1621.5" fill="none" stroke="#22b30f" stroke-width="1.2"/>
<path d="M1667.5,1621.5 H1669.5" stroke="#000" stroke-width="1.2"/>
<path d="M1634.0,1618.9 L1635.2,1618.9 L1636.0,1619.9 L1637.2,1619.9 L1637.9,1620.9 L1639.2,1620.9 L1639.2,1622.1 L1636.0,1622.1 L1636.0,1623.1 L1634.0,1623.1 Z" fill="#000"/>
<path d="M1635.5,1656.5 L1669.5,1656.5" fill="none" stroke="#22b30f" stroke-width="1.2"/>
<path d="M1667.5,1656.5 H1669.5" stroke="#000" stroke-width="1.2"/>
<path d="M1634.0,1653.9 L1635.2,1653.9 L1636.0,1654.9 L1637.2,1654.9 L1637.9,1655.9 L1639.2,1655.9 L1639.2,1657.1 L1636.0,1657.1 L1636.0,1658.1 L1634.0,1658.1 Z" fill="#000"/>
<path d="M1626.5,1664.5 L1669.5,1664.5" fill="none" stroke="#22b30f" stroke-width="1.2"/>
<path d="M1667.5,1664.5 H1669.5" stroke="#000" stroke-width="1.2"/>
<path d="M1625.0,1661.9 L1626.2,1661.9 L1627.0,1662.9 L1628.2,1662.9 L1628.9,1663.9 L1630.2,1663.9 L1630.2,1665.1 L1627.0,1665.1 L1627.0,1666.1 L1625.0,1666.1 Z" fill="#000"/>
<path d="M1667.5,1604.5 H1669.5" stroke="#000" stroke-width="1.2"/>
<path d="M1667.5,1607.5 H1669.5" stroke="#000" stroke-width="1.2"/>
<path d="M1667.5,1617.5 H1669.5" stroke="#000" stroke-width="1.2"/>
<path d="M1667.5,1626.5 H1669.5" stroke="#000" stroke-width="1.2"/>
<path d="M1667.5,1642.5 H1669.5" stroke="#000" stroke-width="1.2"/>
<path d="M1667.5,1646.5 H1669.5" stroke="#000" stroke-width="1.2"/>
<path d="M1667.5,1650.5 H1669.5" stroke="#000" stroke-width="1.2"/>
<path d="M1667.5,1660.5 H1669.5" stroke="#000" stroke-width="1.2"/>
<path d="M1653.5,1571.5 L1653.5,1595.5" fill="none" stroke="#22b30f" stroke-width="1.2"/>
<circle cx="1653.5" cy="1575.5" r="2.0" fill="#22b30f"/>
<path d="M1653.5,1571.5 L1669.5,1571.5" fill="none" stroke="#22b30f" stroke-width="1.2"/>
<path d="M1653.5,1575.5 L1669.5,1575.5" fill="none" stroke="#22b30f" stroke-width="1.2"/>
<path d="M1649.5,1594.5 Q1653.5,1598.5 1657.5,1594.5" fill="none" stroke="#000" stroke-width="1.3"/>
<rect x="1669.5" y="1569.5" width="27" height="18" fill="#fffccc" stroke="#000" stroke-width="1.3"/>
<rect x="1669.5" y="1600.5" width="14" height="27" fill="#fffccc" stroke="#000" stroke-width="1.3"/>
<rect x="1669.5" y="1639.5" width="14" height="27" fill="#fffccc" stroke="#000" stroke-width="1.3"/>
<path d="M1683.5,1612.5 L1699.5,1612.5" fill="none" stroke="#22b30f" stroke-width="1.2"/>
<path d="M1683.5,1650.5 L1699.5,1650.5" fill="none" stroke="#22b30f" stroke-width="1.2"/>
<rect x="1723.5" y="1592.5" width="27" height="18" fill="#fffccc" stroke="#000" stroke-width="1.3"/>
<path d="M1697,1576 L1706,1576 L1706,1594 L1723,1594" fill="none" stroke="#0b850b" stroke-width="2.2"/>
<path d="M1697,1580 L1828,1580 L1828,1190" fill="none" stroke="#0b850b" stroke-width="2.2"/>
<path d="M1764,1580 L1764,1603 L1751,1603" fill="none" stroke="#0b850b" stroke-width="2.2"/>
<path d="M1751.5,1598.5 L1758.5,1598.5" fill="none" stroke="#22b30f" stroke-width="1.2"/>
<path d="M1684.5,1612.5 L1705.5,1612.5 L1705.5,1603.5 L1723.5,1603.5" fill="none" stroke="#22b30f" stroke-width="1.2"/>
<path d="M1684.5,1650.5 L1710.5,1650.5 L1710.5,1584.5" fill="none" stroke="#22b30f" stroke-width="1.2"/>
<path d="M1707.5,1584.5 H1714" stroke="#000" stroke-width="1.2"/>
<path d="M1714.5,1598.5 L1714.5,1616.5" fill="none" stroke="#22b30f" stroke-width="1.2"/>
<path d="M1714.5,1598.5 L1723.5,1598.5" fill="none" stroke="#22b30f" stroke-width="1.2"/>
<path d="M1710.5,1606.5 L1723.5,1606.5" fill="none" stroke="#22b30f" stroke-width="1.2"/>
<path d="M1711,1616 Q1714.7,1620 1718,1616" fill="none" stroke="#000" stroke-width="1.3"/>
<path d="M1429.5,1241.5 L1818.5,1241.5 L1818.5,1190.5" fill="none" stroke="#22b30f" stroke-width="1.2"/>
<path d="M1429.5,1266.5 L1823.5,1266.5 L1823.5,1190.5" fill="none" stroke="#22b30f" stroke-width="1.2"/>
</svg>
<div id="np"></div>
<svg class="abs" style="left:1700px;top:284px" width="40" height="40" viewBox="0 0 40 40">
<defs><linearGradient id="npg" x1="0" y1="0" x2="1" y2="1"><stop offset="0" stop-color="#d8eef4"/><stop offset="0.55" stop-color="#a9d6e2"/><stop offset="1" stop-color="#6fb4c6"/></linearGradient></defs>
<rect x="12" y="7.5" width="23.5" height="28.7" fill="#fff"/>
<path d="M35.3,7.5 V36 H12.2" fill="none" stroke="#8a7c58" stroke-width="1.6"/>
<path d="M11.6,7 L34.6,7 L30.8,32.6 L4.3,32.6 Z" fill="url(#npg)"/>
<path d="M11,13.5 H33 M10.5,17.5 H32.5 M10,21.5 H32 M9.5,25.5 H31.5" stroke="#8fbfcc" stroke-width="1.1" opacity="0.7"/>
<g fill="#6e7f86"><rect x="12" y="7" width="2" height="1.8"/><rect x="16" y="7" width="2" height="1.8"/><rect x="20" y="7" width="2" height="1.8"/><rect x="24" y="7" width="2" height="1.8"/><rect x="28" y="7" width="2" height="1.8"/></g>
<g fill="#8b9aa0"><rect x="14" y="5.2" width="2" height="1.8"/><rect x="18" y="5.2" width="2" height="1.8"/><rect x="22" y="5.2" width="2" height="1.8"/><rect x="26" y="5.2" width="2" height="1.8"/><rect x="30" y="5.2" width="2" height="1.8"/></g>
</svg>
<div class="txt" style="left:1742px;top:296px;font-size:25px;color:#000">Untitled - Notepad</div>
<svg class="abs" style="left:2700px;top:280px" width="270" height="50" viewBox="2700 280 270 50">
<rect x="2730" y="304" width="20" height="2" fill="#000"/>
<rect x="2821.9" y="296.1" width="18" height="17.6" fill="none" stroke="#000" stroke-width="1.8"/>
<path d="M2914.5,295.5 L2933.8,314.3 M2933.8,295.5 L2914.5,314.3" stroke="#000" stroke-width="1.8"/>
</svg>
<div class="txt" style="left:1698px;top:344px;font-size:23px;letter-spacing:0.5px;color:#000">File</div>
<div class="txt" style="left:1748.5px;top:344px;font-size:23px;letter-spacing:0.5px;color:#000">Edit</div>
<div class="txt" style="left:1802.5px;top:344px;font-size:23px;letter-spacing:0.5px;color:#000">Format</div>
<div class="txt" style="left:1892px;top:344px;font-size:23px;letter-spacing:0.5px;color:#000">View</div>
<div class="txt" style="left:1956.5px;top:344px;font-size:23px;letter-spacing:0.5px;color:#000">Help</div>
<div class="abs" style="left:1691px;top:371px;width:1280px;height:2px;background:#f0f0f0"></div>
<div class="txt" style="left:1700px;top:379px;font-family:'Liberation Mono',monospace;font-size:29.5px;letter-spacing:0.3px;color:#000">xatral</div>
<div class="abs" style="left:1808px;top:373px;width:1px;height:37px;background:#000"></div>
<div class="abs" style="left:2938px;top:373px;width:33px;height:741px;background:#f0f0f0"></div>
<svg class="abs" style="left:2938px;top:373px" width="33" height="741" viewBox="0 0 33 741"><path d="M11.5,22.5 L16.5,17 L21.5,22.5" fill="none" stroke="#bfbfbf" stroke-width="2.4"/><path d="M11.5,720 L16.5,725.5 L21.5,720" fill="none" stroke="#bfbfbf" stroke-width="2.4"/></svg>
<div class="abs" style="left:1691px;top:1114px;width:1280px;height:33px;background:#f0f0f0"></div>
<svg class="abs" style="left:1691px;top:1114px" width="1280" height="33" viewBox="0 0 1280 33"><path d="M20.5,11 L15,16.5 L20.5,22" fill="none" stroke="#bfbfbf" stroke-width="2.4"/><path d="M1225.5,11 L1231,16.5 L1225.5,22" fill="none" stroke="#bfbfbf" stroke-width="2.4"/></svg>
<div class="abs" style="left:1691px;top:1147px;width:1280px;height:44px;background:#f0f0f0;border-top:1px solid #d9d9d9"></div>
<div class="abs" style="left:2330px;top:1148px;width:1px;height:43px;background:#d9d9d9"></div>
<div class="abs" style="left:2543px;top:1148px;width:1px;height:43px;background:#d9d9d9"></div>
<div class="abs" style="left:2756px;top:1148px;width:1px;height:43px;background:#d9d9d9"></div>
<div class="txt" style="left:2357px;top:1161px;font-size:23px;letter-spacing:-0.4px;color:#000">Windows (CRLF)</div>
<div class="txt" style="left:2569px;top:1161px;font-size:23px;letter-spacing:0.2px;color:#000">Ln 1, Col 7</div>
<div class="txt" style="left:2761px;top:1161px;font-size:23px;letter-spacing:0.4px;color:#000">100%</div>
<svg class="abs" style="left:2940px;top:1165px" width="30" height="25"><rect x="23" y="6" width="4" height="4" fill="#b3b3b3"/><rect x="17" y="12" width="4" height="4" fill="#b3b3b3"/><rect x="23" y="12" width="4" height="4" fill="#b3b3b3"/><rect x="11" y="18" width="4" height="4" fill="#b3b3b3"/><rect x="17" y="18" width="4" height="4" fill="#b3b3b3"/><rect x="23" y="18" width="4" height="4" fill="#b3b3b3"/></svg>
</body></html>
